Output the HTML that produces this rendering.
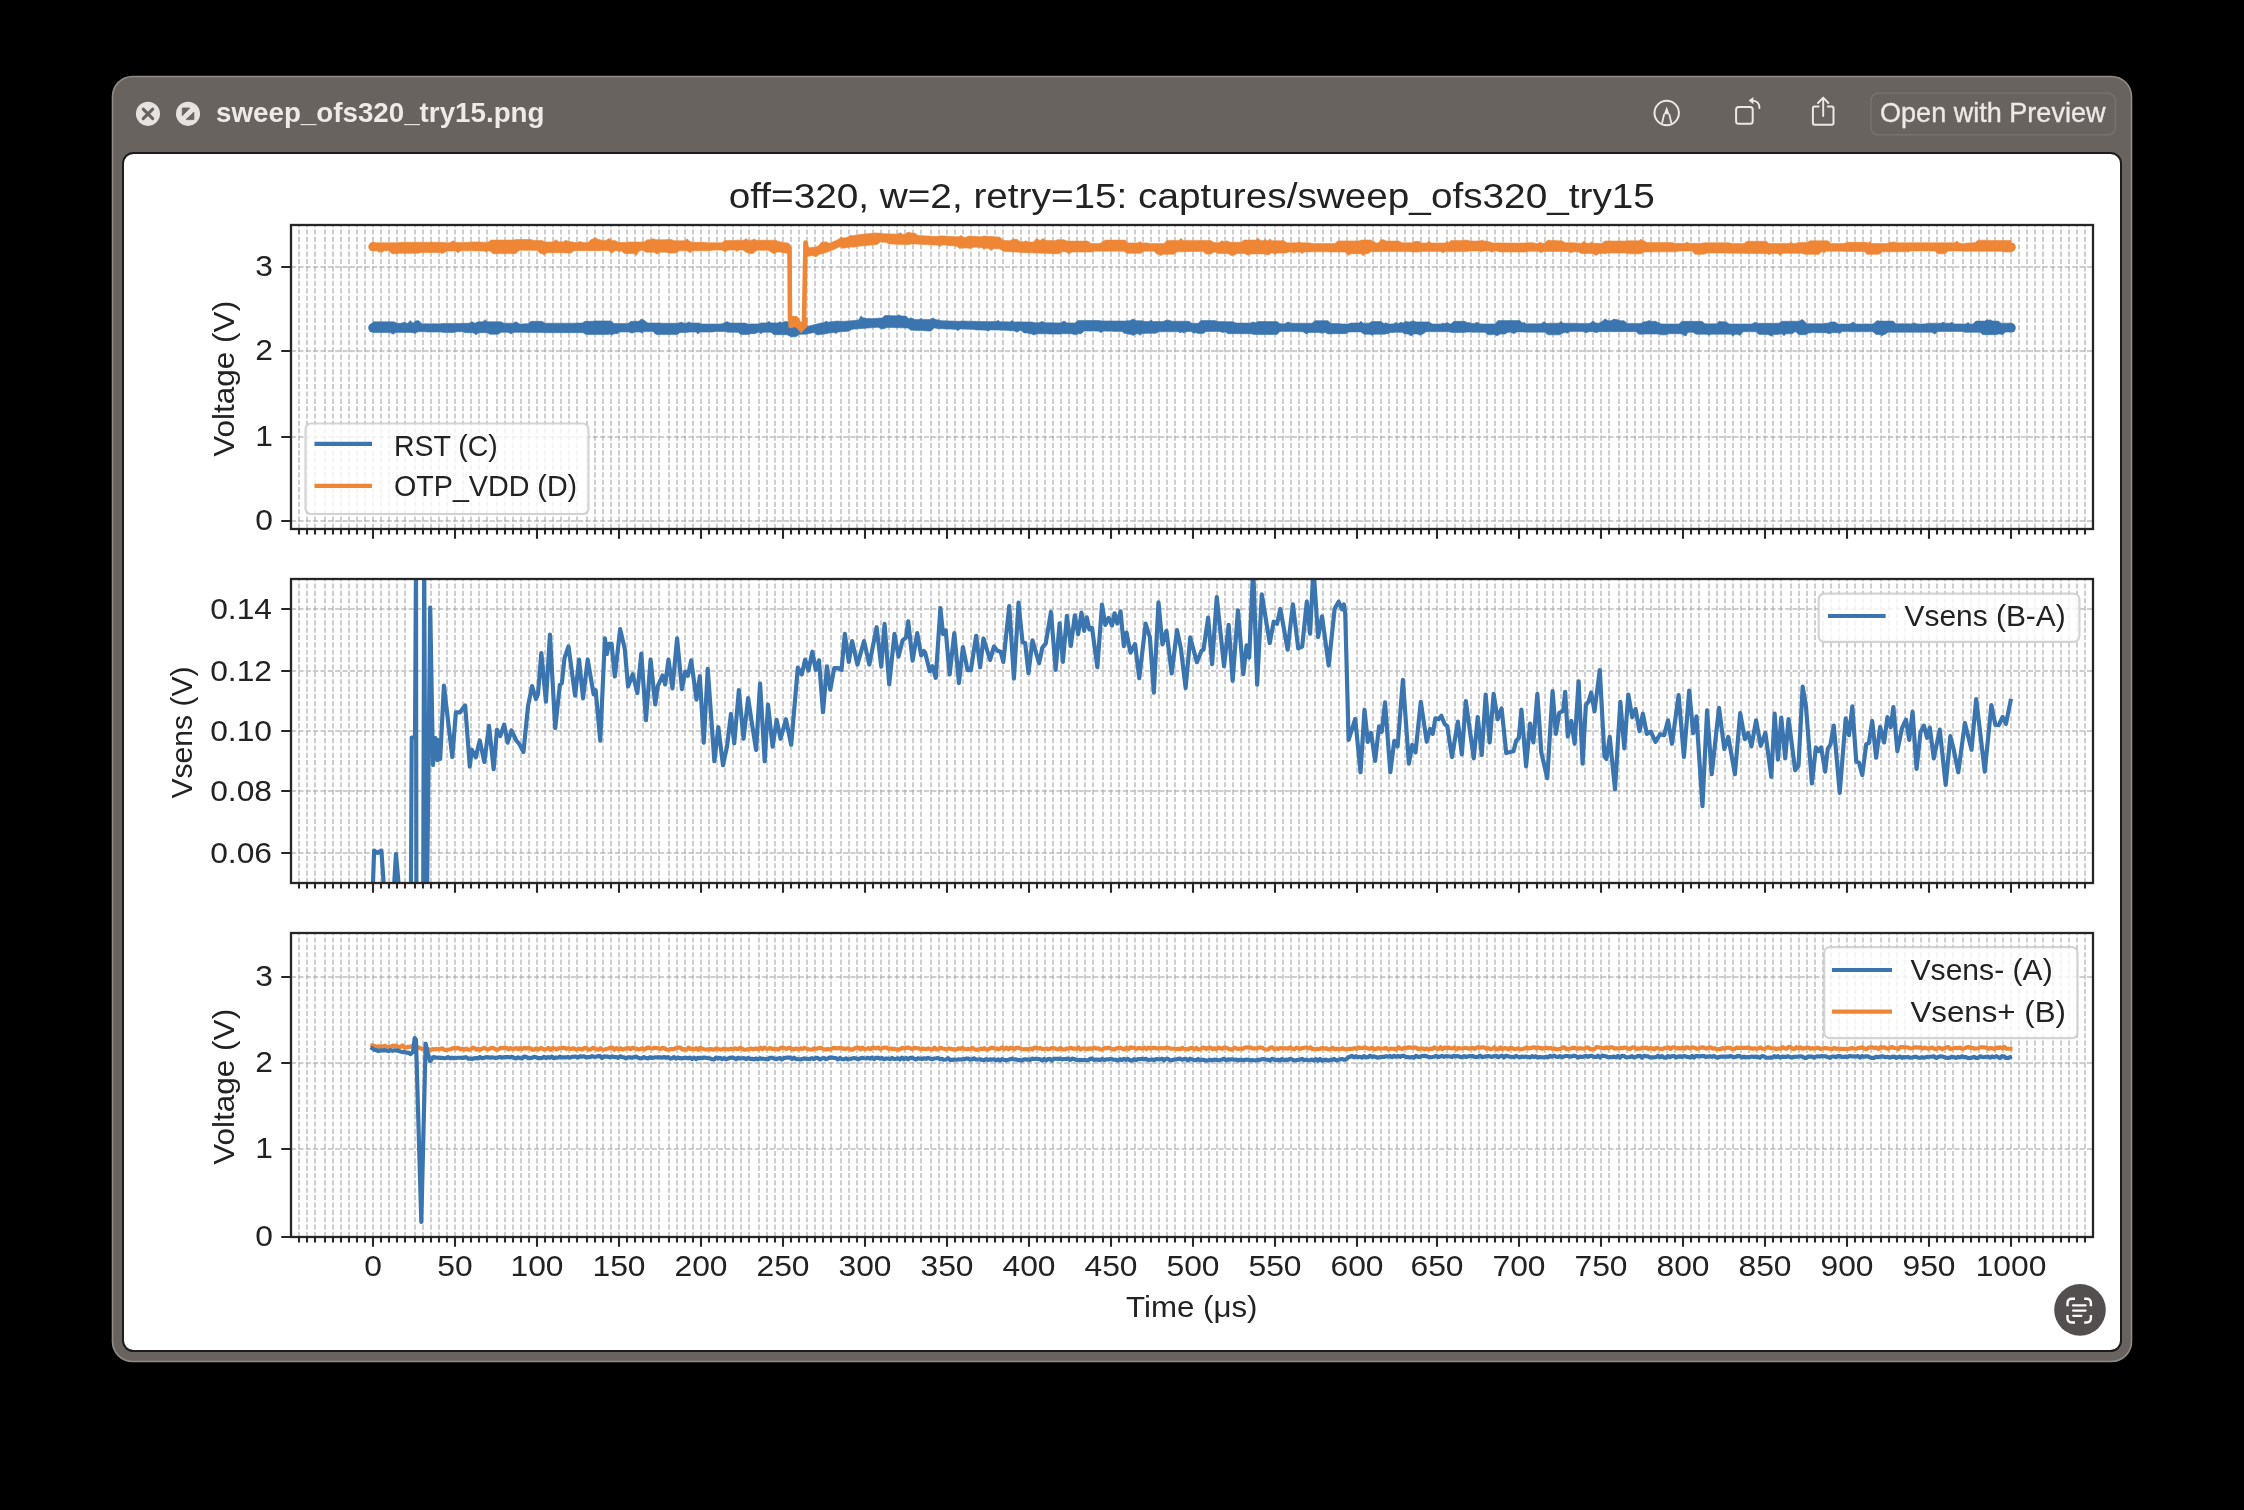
<!DOCTYPE html>
<html><head><meta charset="utf-8"><title>sweep_ofs320_try15.png</title>
<style>html,body{margin:0;padding:0;background:#000;width:2244px;height:1510px;overflow:hidden}svg{position:absolute;left:0;top:0;display:block;will-change:transform}text{font-family:"Liberation Sans",sans-serif}</style></head><body>
<svg width="2244" height="1510" viewBox="0 0 2244 1510">
<rect x="0" y="0" width="2244" height="1510" fill="#000"/>
<rect x="112.5" y="76.5" width="2019" height="1285" rx="20" ry="20" fill="#69635f" stroke="#8f8a86" stroke-width="1.6"/>
<rect x="123" y="153" width="1998" height="1198" rx="10.5" ry="10.5" fill="#ffffff" stroke="#1c1c1c" stroke-width="2"/>
<circle cx="147.95" cy="113.85" r="12.05" fill="#e6e2df"/>
<path d="M143.2 109.1L152.7 118.6M152.7 109.1L143.2 118.6" stroke="#69635f" stroke-width="3" stroke-linecap="round"/>
<circle cx="188.0" cy="113.85" r="12.05" fill="#e6e2df"/>
<path d="M182.3 108.0H189.8L182.3 115.8Z M193.9 112.1V119.6H186.05Z" fill="#69635f" stroke="#69635f" stroke-width="0.8" stroke-linejoin="round"/>
<text x="216.0" y="122.0" font-size="27.2" font-weight="bold" fill="#eeeae7" textLength="328.5" lengthAdjust="spacingAndGlyphs">sweep_ofs320_try15.png</text>
<circle cx="1666.7" cy="113.0" r="12.2" fill="none" stroke="#ece8e5" stroke-width="2"/>
<path d="M1666.7 106.6L1663.9 114.3H1669.5Z" fill="#ece8e5"/>
<path d="M1664.2 114L1662.0 123.4M1669.2 114L1671.4 123.4" stroke="#ece8e5" stroke-width="1.8"/>
<rect x="1736.1" y="107.1" width="16.6" height="16.6" rx="2.5" fill="none" stroke="#ece8e5" stroke-width="2"/>
<path d="M1759.5 108.2C1759.5 103.5 1757.0 100.8 1752.5 100.6" fill="none" stroke="#ece8e5" stroke-width="1.8" stroke-linecap="round"/>
<path d="M1748.6 100.6L1753.4 97.0V104.2Z" fill="#ece8e5"/>
<path d="M1818.6 106.6H1814.6Q1812.9 106.6 1812.9 108.3V123.0Q1812.9 124.7 1814.6 124.7H1831.8Q1833.5 124.7 1833.5 123.0V108.3Q1833.5 106.6 1831.8 106.6H1827.8" fill="none" stroke="#ece8e5" stroke-width="2" stroke-linecap="round"/>
<path d="M1823.2 116.0V98.0M1818.0 103.0L1823.2 97.6L1828.4 103.0" fill="none" stroke="#ece8e5" stroke-width="1.9" stroke-linecap="round" stroke-linejoin="round"/>
<rect x="1871.0" y="93.2" width="244.3" height="41.7" rx="7.5" ry="7.5" fill="none" stroke="#7b7572" stroke-width="1.2"/>
<text x="1880.0" y="122.2" font-size="27.6" fill="#ede9e6" stroke="#ede9e6" stroke-width="0.35" textLength="225.5" lengthAdjust="spacingAndGlyphs">Open with Preview</text>
<circle cx="2080.0" cy="1309.9" r="25.8" fill="#544f4f"/>
<path d="M2067.5 1306.2V1303.2Q2067.5 1298.7 2072.0 1298.7H2075.0 M2084.2 1298.7H2086.4Q2090.9 1298.7 2090.9 1303.2V1306.2 M2090.9 1315.0V1318.0Q2090.9 1322.5 2086.4 1322.5H2084.2 M2075.0 1322.5H2072.0Q2067.5 1322.5 2067.5 1318.0V1315.0" fill="none" stroke="#fff" stroke-width="2.4" stroke-linecap="butt"/>
<path d="M2073.0 1305.4H2085.6M2073.0 1310.6H2085.6M2073.2 1315.8H2081.4" stroke="#fff" stroke-width="2.2" stroke-linecap="round"/>
</svg>
<svg class="chart" width="2244" height="1510" viewBox="0 0 2244 1510">
<defs>
<clipPath id="ax0"><rect x="291.00" y="225.00" width="1802.00" height="304.00"/></clipPath>
<clipPath id="ax1"><rect x="291.00" y="579.00" width="1802.00" height="304.00"/></clipPath>
<clipPath id="ax2"><rect x="291.00" y="933.00" width="1802.00" height="304.00"/></clipPath>
</defs>
<g clip-path="url(#ax0)">
<line x1="299.00" y1="529.00" x2="299.00" y2="225.00" stroke="#b0b0b0" stroke-opacity="0.62" stroke-width="2.0" stroke-dasharray="5.14 2.22"/>
<line x1="307.00" y1="529.00" x2="307.00" y2="225.00" stroke="#b0b0b0" stroke-opacity="0.62" stroke-width="2.0" stroke-dasharray="5.14 2.22"/>
<line x1="315.00" y1="529.00" x2="315.00" y2="225.00" stroke="#b0b0b0" stroke-opacity="0.62" stroke-width="2.0" stroke-dasharray="5.14 2.22"/>
<line x1="325.00" y1="529.00" x2="325.00" y2="225.00" stroke="#b0b0b0" stroke-opacity="0.62" stroke-width="2.0" stroke-dasharray="5.14 2.22"/>
<line x1="333.00" y1="529.00" x2="333.00" y2="225.00" stroke="#b0b0b0" stroke-opacity="0.62" stroke-width="2.0" stroke-dasharray="5.14 2.22"/>
<line x1="341.00" y1="529.00" x2="341.00" y2="225.00" stroke="#b0b0b0" stroke-opacity="0.62" stroke-width="2.0" stroke-dasharray="5.14 2.22"/>
<line x1="349.00" y1="529.00" x2="349.00" y2="225.00" stroke="#b0b0b0" stroke-opacity="0.62" stroke-width="2.0" stroke-dasharray="5.14 2.22"/>
<line x1="357.00" y1="529.00" x2="357.00" y2="225.00" stroke="#b0b0b0" stroke-opacity="0.62" stroke-width="2.0" stroke-dasharray="5.14 2.22"/>
<line x1="365.00" y1="529.00" x2="365.00" y2="225.00" stroke="#b0b0b0" stroke-opacity="0.62" stroke-width="2.0" stroke-dasharray="5.14 2.22"/>
<line x1="373.00" y1="529.00" x2="373.00" y2="225.00" stroke="#b0b0b0" stroke-opacity="0.62" stroke-width="2.0" stroke-dasharray="5.14 2.22"/>
<line x1="381.00" y1="529.00" x2="381.00" y2="225.00" stroke="#b0b0b0" stroke-opacity="0.62" stroke-width="2.0" stroke-dasharray="5.14 2.22"/>
<line x1="389.00" y1="529.00" x2="389.00" y2="225.00" stroke="#b0b0b0" stroke-opacity="0.62" stroke-width="2.0" stroke-dasharray="5.14 2.22"/>
<line x1="397.00" y1="529.00" x2="397.00" y2="225.00" stroke="#b0b0b0" stroke-opacity="0.62" stroke-width="2.0" stroke-dasharray="5.14 2.22"/>
<line x1="405.00" y1="529.00" x2="405.00" y2="225.00" stroke="#b0b0b0" stroke-opacity="0.62" stroke-width="2.0" stroke-dasharray="5.14 2.22"/>
<line x1="415.00" y1="529.00" x2="415.00" y2="225.00" stroke="#b0b0b0" stroke-opacity="0.62" stroke-width="2.0" stroke-dasharray="5.14 2.22"/>
<line x1="423.00" y1="529.00" x2="423.00" y2="225.00" stroke="#b0b0b0" stroke-opacity="0.62" stroke-width="2.0" stroke-dasharray="5.14 2.22"/>
<line x1="431.00" y1="529.00" x2="431.00" y2="225.00" stroke="#b0b0b0" stroke-opacity="0.62" stroke-width="2.0" stroke-dasharray="5.14 2.22"/>
<line x1="439.00" y1="529.00" x2="439.00" y2="225.00" stroke="#b0b0b0" stroke-opacity="0.62" stroke-width="2.0" stroke-dasharray="5.14 2.22"/>
<line x1="447.00" y1="529.00" x2="447.00" y2="225.00" stroke="#b0b0b0" stroke-opacity="0.62" stroke-width="2.0" stroke-dasharray="5.14 2.22"/>
<line x1="455.00" y1="529.00" x2="455.00" y2="225.00" stroke="#b0b0b0" stroke-opacity="0.62" stroke-width="2.0" stroke-dasharray="5.14 2.22"/>
<line x1="463.00" y1="529.00" x2="463.00" y2="225.00" stroke="#b0b0b0" stroke-opacity="0.62" stroke-width="2.0" stroke-dasharray="5.14 2.22"/>
<line x1="471.00" y1="529.00" x2="471.00" y2="225.00" stroke="#b0b0b0" stroke-opacity="0.62" stroke-width="2.0" stroke-dasharray="5.14 2.22"/>
<line x1="479.00" y1="529.00" x2="479.00" y2="225.00" stroke="#b0b0b0" stroke-opacity="0.62" stroke-width="2.0" stroke-dasharray="5.14 2.22"/>
<line x1="487.00" y1="529.00" x2="487.00" y2="225.00" stroke="#b0b0b0" stroke-opacity="0.62" stroke-width="2.0" stroke-dasharray="5.14 2.22"/>
<line x1="497.00" y1="529.00" x2="497.00" y2="225.00" stroke="#b0b0b0" stroke-opacity="0.62" stroke-width="2.0" stroke-dasharray="5.14 2.22"/>
<line x1="505.00" y1="529.00" x2="505.00" y2="225.00" stroke="#b0b0b0" stroke-opacity="0.62" stroke-width="2.0" stroke-dasharray="5.14 2.22"/>
<line x1="513.00" y1="529.00" x2="513.00" y2="225.00" stroke="#b0b0b0" stroke-opacity="0.62" stroke-width="2.0" stroke-dasharray="5.14 2.22"/>
<line x1="521.00" y1="529.00" x2="521.00" y2="225.00" stroke="#b0b0b0" stroke-opacity="0.62" stroke-width="2.0" stroke-dasharray="5.14 2.22"/>
<line x1="529.00" y1="529.00" x2="529.00" y2="225.00" stroke="#b0b0b0" stroke-opacity="0.62" stroke-width="2.0" stroke-dasharray="5.14 2.22"/>
<line x1="537.00" y1="529.00" x2="537.00" y2="225.00" stroke="#b0b0b0" stroke-opacity="0.62" stroke-width="2.0" stroke-dasharray="5.14 2.22"/>
<line x1="545.00" y1="529.00" x2="545.00" y2="225.00" stroke="#b0b0b0" stroke-opacity="0.62" stroke-width="2.0" stroke-dasharray="5.14 2.22"/>
<line x1="553.00" y1="529.00" x2="553.00" y2="225.00" stroke="#b0b0b0" stroke-opacity="0.62" stroke-width="2.0" stroke-dasharray="5.14 2.22"/>
<line x1="561.00" y1="529.00" x2="561.00" y2="225.00" stroke="#b0b0b0" stroke-opacity="0.62" stroke-width="2.0" stroke-dasharray="5.14 2.22"/>
<line x1="569.00" y1="529.00" x2="569.00" y2="225.00" stroke="#b0b0b0" stroke-opacity="0.62" stroke-width="2.0" stroke-dasharray="5.14 2.22"/>
<line x1="577.00" y1="529.00" x2="577.00" y2="225.00" stroke="#b0b0b0" stroke-opacity="0.62" stroke-width="2.0" stroke-dasharray="5.14 2.22"/>
<line x1="587.00" y1="529.00" x2="587.00" y2="225.00" stroke="#b0b0b0" stroke-opacity="0.62" stroke-width="2.0" stroke-dasharray="5.14 2.22"/>
<line x1="595.00" y1="529.00" x2="595.00" y2="225.00" stroke="#b0b0b0" stroke-opacity="0.62" stroke-width="2.0" stroke-dasharray="5.14 2.22"/>
<line x1="603.00" y1="529.00" x2="603.00" y2="225.00" stroke="#b0b0b0" stroke-opacity="0.62" stroke-width="2.0" stroke-dasharray="5.14 2.22"/>
<line x1="611.00" y1="529.00" x2="611.00" y2="225.00" stroke="#b0b0b0" stroke-opacity="0.62" stroke-width="2.0" stroke-dasharray="5.14 2.22"/>
<line x1="619.00" y1="529.00" x2="619.00" y2="225.00" stroke="#b0b0b0" stroke-opacity="0.62" stroke-width="2.0" stroke-dasharray="5.14 2.22"/>
<line x1="627.00" y1="529.00" x2="627.00" y2="225.00" stroke="#b0b0b0" stroke-opacity="0.62" stroke-width="2.0" stroke-dasharray="5.14 2.22"/>
<line x1="635.00" y1="529.00" x2="635.00" y2="225.00" stroke="#b0b0b0" stroke-opacity="0.62" stroke-width="2.0" stroke-dasharray="5.14 2.22"/>
<line x1="643.00" y1="529.00" x2="643.00" y2="225.00" stroke="#b0b0b0" stroke-opacity="0.62" stroke-width="2.0" stroke-dasharray="5.14 2.22"/>
<line x1="651.00" y1="529.00" x2="651.00" y2="225.00" stroke="#b0b0b0" stroke-opacity="0.62" stroke-width="2.0" stroke-dasharray="5.14 2.22"/>
<line x1="659.00" y1="529.00" x2="659.00" y2="225.00" stroke="#b0b0b0" stroke-opacity="0.62" stroke-width="2.0" stroke-dasharray="5.14 2.22"/>
<line x1="669.00" y1="529.00" x2="669.00" y2="225.00" stroke="#b0b0b0" stroke-opacity="0.62" stroke-width="2.0" stroke-dasharray="5.14 2.22"/>
<line x1="677.00" y1="529.00" x2="677.00" y2="225.00" stroke="#b0b0b0" stroke-opacity="0.62" stroke-width="2.0" stroke-dasharray="5.14 2.22"/>
<line x1="685.00" y1="529.00" x2="685.00" y2="225.00" stroke="#b0b0b0" stroke-opacity="0.62" stroke-width="2.0" stroke-dasharray="5.14 2.22"/>
<line x1="693.00" y1="529.00" x2="693.00" y2="225.00" stroke="#b0b0b0" stroke-opacity="0.62" stroke-width="2.0" stroke-dasharray="5.14 2.22"/>
<line x1="701.00" y1="529.00" x2="701.00" y2="225.00" stroke="#b0b0b0" stroke-opacity="0.62" stroke-width="2.0" stroke-dasharray="5.14 2.22"/>
<line x1="709.00" y1="529.00" x2="709.00" y2="225.00" stroke="#b0b0b0" stroke-opacity="0.62" stroke-width="2.0" stroke-dasharray="5.14 2.22"/>
<line x1="717.00" y1="529.00" x2="717.00" y2="225.00" stroke="#b0b0b0" stroke-opacity="0.62" stroke-width="2.0" stroke-dasharray="5.14 2.22"/>
<line x1="725.00" y1="529.00" x2="725.00" y2="225.00" stroke="#b0b0b0" stroke-opacity="0.62" stroke-width="2.0" stroke-dasharray="5.14 2.22"/>
<line x1="733.00" y1="529.00" x2="733.00" y2="225.00" stroke="#b0b0b0" stroke-opacity="0.62" stroke-width="2.0" stroke-dasharray="5.14 2.22"/>
<line x1="741.00" y1="529.00" x2="741.00" y2="225.00" stroke="#b0b0b0" stroke-opacity="0.62" stroke-width="2.0" stroke-dasharray="5.14 2.22"/>
<line x1="749.00" y1="529.00" x2="749.00" y2="225.00" stroke="#b0b0b0" stroke-opacity="0.62" stroke-width="2.0" stroke-dasharray="5.14 2.22"/>
<line x1="759.00" y1="529.00" x2="759.00" y2="225.00" stroke="#b0b0b0" stroke-opacity="0.62" stroke-width="2.0" stroke-dasharray="5.14 2.22"/>
<line x1="767.00" y1="529.00" x2="767.00" y2="225.00" stroke="#b0b0b0" stroke-opacity="0.62" stroke-width="2.0" stroke-dasharray="5.14 2.22"/>
<line x1="775.00" y1="529.00" x2="775.00" y2="225.00" stroke="#b0b0b0" stroke-opacity="0.62" stroke-width="2.0" stroke-dasharray="5.14 2.22"/>
<line x1="783.00" y1="529.00" x2="783.00" y2="225.00" stroke="#b0b0b0" stroke-opacity="0.62" stroke-width="2.0" stroke-dasharray="5.14 2.22"/>
<line x1="791.00" y1="529.00" x2="791.00" y2="225.00" stroke="#b0b0b0" stroke-opacity="0.62" stroke-width="2.0" stroke-dasharray="5.14 2.22"/>
<line x1="799.00" y1="529.00" x2="799.00" y2="225.00" stroke="#b0b0b0" stroke-opacity="0.62" stroke-width="2.0" stroke-dasharray="5.14 2.22"/>
<line x1="807.00" y1="529.00" x2="807.00" y2="225.00" stroke="#b0b0b0" stroke-opacity="0.62" stroke-width="2.0" stroke-dasharray="5.14 2.22"/>
<line x1="815.00" y1="529.00" x2="815.00" y2="225.00" stroke="#b0b0b0" stroke-opacity="0.62" stroke-width="2.0" stroke-dasharray="5.14 2.22"/>
<line x1="823.00" y1="529.00" x2="823.00" y2="225.00" stroke="#b0b0b0" stroke-opacity="0.62" stroke-width="2.0" stroke-dasharray="5.14 2.22"/>
<line x1="831.00" y1="529.00" x2="831.00" y2="225.00" stroke="#b0b0b0" stroke-opacity="0.62" stroke-width="2.0" stroke-dasharray="5.14 2.22"/>
<line x1="841.00" y1="529.00" x2="841.00" y2="225.00" stroke="#b0b0b0" stroke-opacity="0.62" stroke-width="2.0" stroke-dasharray="5.14 2.22"/>
<line x1="849.00" y1="529.00" x2="849.00" y2="225.00" stroke="#b0b0b0" stroke-opacity="0.62" stroke-width="2.0" stroke-dasharray="5.14 2.22"/>
<line x1="857.00" y1="529.00" x2="857.00" y2="225.00" stroke="#b0b0b0" stroke-opacity="0.62" stroke-width="2.0" stroke-dasharray="5.14 2.22"/>
<line x1="865.00" y1="529.00" x2="865.00" y2="225.00" stroke="#b0b0b0" stroke-opacity="0.62" stroke-width="2.0" stroke-dasharray="5.14 2.22"/>
<line x1="873.00" y1="529.00" x2="873.00" y2="225.00" stroke="#b0b0b0" stroke-opacity="0.62" stroke-width="2.0" stroke-dasharray="5.14 2.22"/>
<line x1="881.00" y1="529.00" x2="881.00" y2="225.00" stroke="#b0b0b0" stroke-opacity="0.62" stroke-width="2.0" stroke-dasharray="5.14 2.22"/>
<line x1="889.00" y1="529.00" x2="889.00" y2="225.00" stroke="#b0b0b0" stroke-opacity="0.62" stroke-width="2.0" stroke-dasharray="5.14 2.22"/>
<line x1="897.00" y1="529.00" x2="897.00" y2="225.00" stroke="#b0b0b0" stroke-opacity="0.62" stroke-width="2.0" stroke-dasharray="5.14 2.22"/>
<line x1="905.00" y1="529.00" x2="905.00" y2="225.00" stroke="#b0b0b0" stroke-opacity="0.62" stroke-width="2.0" stroke-dasharray="5.14 2.22"/>
<line x1="913.00" y1="529.00" x2="913.00" y2="225.00" stroke="#b0b0b0" stroke-opacity="0.62" stroke-width="2.0" stroke-dasharray="5.14 2.22"/>
<line x1="921.00" y1="529.00" x2="921.00" y2="225.00" stroke="#b0b0b0" stroke-opacity="0.62" stroke-width="2.0" stroke-dasharray="5.14 2.22"/>
<line x1="931.00" y1="529.00" x2="931.00" y2="225.00" stroke="#b0b0b0" stroke-opacity="0.62" stroke-width="2.0" stroke-dasharray="5.14 2.22"/>
<line x1="939.00" y1="529.00" x2="939.00" y2="225.00" stroke="#b0b0b0" stroke-opacity="0.62" stroke-width="2.0" stroke-dasharray="5.14 2.22"/>
<line x1="947.00" y1="529.00" x2="947.00" y2="225.00" stroke="#b0b0b0" stroke-opacity="0.62" stroke-width="2.0" stroke-dasharray="5.14 2.22"/>
<line x1="955.00" y1="529.00" x2="955.00" y2="225.00" stroke="#b0b0b0" stroke-opacity="0.62" stroke-width="2.0" stroke-dasharray="5.14 2.22"/>
<line x1="963.00" y1="529.00" x2="963.00" y2="225.00" stroke="#b0b0b0" stroke-opacity="0.62" stroke-width="2.0" stroke-dasharray="5.14 2.22"/>
<line x1="971.00" y1="529.00" x2="971.00" y2="225.00" stroke="#b0b0b0" stroke-opacity="0.62" stroke-width="2.0" stroke-dasharray="5.14 2.22"/>
<line x1="979.00" y1="529.00" x2="979.00" y2="225.00" stroke="#b0b0b0" stroke-opacity="0.62" stroke-width="2.0" stroke-dasharray="5.14 2.22"/>
<line x1="987.00" y1="529.00" x2="987.00" y2="225.00" stroke="#b0b0b0" stroke-opacity="0.62" stroke-width="2.0" stroke-dasharray="5.14 2.22"/>
<line x1="995.00" y1="529.00" x2="995.00" y2="225.00" stroke="#b0b0b0" stroke-opacity="0.62" stroke-width="2.0" stroke-dasharray="5.14 2.22"/>
<line x1="1003.00" y1="529.00" x2="1003.00" y2="225.00" stroke="#b0b0b0" stroke-opacity="0.62" stroke-width="2.0" stroke-dasharray="5.14 2.22"/>
<line x1="1013.00" y1="529.00" x2="1013.00" y2="225.00" stroke="#b0b0b0" stroke-opacity="0.62" stroke-width="2.0" stroke-dasharray="5.14 2.22"/>
<line x1="1021.00" y1="529.00" x2="1021.00" y2="225.00" stroke="#b0b0b0" stroke-opacity="0.62" stroke-width="2.0" stroke-dasharray="5.14 2.22"/>
<line x1="1029.00" y1="529.00" x2="1029.00" y2="225.00" stroke="#b0b0b0" stroke-opacity="0.62" stroke-width="2.0" stroke-dasharray="5.14 2.22"/>
<line x1="1037.00" y1="529.00" x2="1037.00" y2="225.00" stroke="#b0b0b0" stroke-opacity="0.62" stroke-width="2.0" stroke-dasharray="5.14 2.22"/>
<line x1="1045.00" y1="529.00" x2="1045.00" y2="225.00" stroke="#b0b0b0" stroke-opacity="0.62" stroke-width="2.0" stroke-dasharray="5.14 2.22"/>
<line x1="1053.00" y1="529.00" x2="1053.00" y2="225.00" stroke="#b0b0b0" stroke-opacity="0.62" stroke-width="2.0" stroke-dasharray="5.14 2.22"/>
<line x1="1061.00" y1="529.00" x2="1061.00" y2="225.00" stroke="#b0b0b0" stroke-opacity="0.62" stroke-width="2.0" stroke-dasharray="5.14 2.22"/>
<line x1="1069.00" y1="529.00" x2="1069.00" y2="225.00" stroke="#b0b0b0" stroke-opacity="0.62" stroke-width="2.0" stroke-dasharray="5.14 2.22"/>
<line x1="1077.00" y1="529.00" x2="1077.00" y2="225.00" stroke="#b0b0b0" stroke-opacity="0.62" stroke-width="2.0" stroke-dasharray="5.14 2.22"/>
<line x1="1085.00" y1="529.00" x2="1085.00" y2="225.00" stroke="#b0b0b0" stroke-opacity="0.62" stroke-width="2.0" stroke-dasharray="5.14 2.22"/>
<line x1="1093.00" y1="529.00" x2="1093.00" y2="225.00" stroke="#b0b0b0" stroke-opacity="0.62" stroke-width="2.0" stroke-dasharray="5.14 2.22"/>
<line x1="1103.00" y1="529.00" x2="1103.00" y2="225.00" stroke="#b0b0b0" stroke-opacity="0.62" stroke-width="2.0" stroke-dasharray="5.14 2.22"/>
<line x1="1111.00" y1="529.00" x2="1111.00" y2="225.00" stroke="#b0b0b0" stroke-opacity="0.62" stroke-width="2.0" stroke-dasharray="5.14 2.22"/>
<line x1="1119.00" y1="529.00" x2="1119.00" y2="225.00" stroke="#b0b0b0" stroke-opacity="0.62" stroke-width="2.0" stroke-dasharray="5.14 2.22"/>
<line x1="1127.00" y1="529.00" x2="1127.00" y2="225.00" stroke="#b0b0b0" stroke-opacity="0.62" stroke-width="2.0" stroke-dasharray="5.14 2.22"/>
<line x1="1135.00" y1="529.00" x2="1135.00" y2="225.00" stroke="#b0b0b0" stroke-opacity="0.62" stroke-width="2.0" stroke-dasharray="5.14 2.22"/>
<line x1="1143.00" y1="529.00" x2="1143.00" y2="225.00" stroke="#b0b0b0" stroke-opacity="0.62" stroke-width="2.0" stroke-dasharray="5.14 2.22"/>
<line x1="1151.00" y1="529.00" x2="1151.00" y2="225.00" stroke="#b0b0b0" stroke-opacity="0.62" stroke-width="2.0" stroke-dasharray="5.14 2.22"/>
<line x1="1159.00" y1="529.00" x2="1159.00" y2="225.00" stroke="#b0b0b0" stroke-opacity="0.62" stroke-width="2.0" stroke-dasharray="5.14 2.22"/>
<line x1="1167.00" y1="529.00" x2="1167.00" y2="225.00" stroke="#b0b0b0" stroke-opacity="0.62" stroke-width="2.0" stroke-dasharray="5.14 2.22"/>
<line x1="1175.00" y1="529.00" x2="1175.00" y2="225.00" stroke="#b0b0b0" stroke-opacity="0.62" stroke-width="2.0" stroke-dasharray="5.14 2.22"/>
<line x1="1185.00" y1="529.00" x2="1185.00" y2="225.00" stroke="#b0b0b0" stroke-opacity="0.62" stroke-width="2.0" stroke-dasharray="5.14 2.22"/>
<line x1="1193.00" y1="529.00" x2="1193.00" y2="225.00" stroke="#b0b0b0" stroke-opacity="0.62" stroke-width="2.0" stroke-dasharray="5.14 2.22"/>
<line x1="1201.00" y1="529.00" x2="1201.00" y2="225.00" stroke="#b0b0b0" stroke-opacity="0.62" stroke-width="2.0" stroke-dasharray="5.14 2.22"/>
<line x1="1209.00" y1="529.00" x2="1209.00" y2="225.00" stroke="#b0b0b0" stroke-opacity="0.62" stroke-width="2.0" stroke-dasharray="5.14 2.22"/>
<line x1="1217.00" y1="529.00" x2="1217.00" y2="225.00" stroke="#b0b0b0" stroke-opacity="0.62" stroke-width="2.0" stroke-dasharray="5.14 2.22"/>
<line x1="1225.00" y1="529.00" x2="1225.00" y2="225.00" stroke="#b0b0b0" stroke-opacity="0.62" stroke-width="2.0" stroke-dasharray="5.14 2.22"/>
<line x1="1233.00" y1="529.00" x2="1233.00" y2="225.00" stroke="#b0b0b0" stroke-opacity="0.62" stroke-width="2.0" stroke-dasharray="5.14 2.22"/>
<line x1="1241.00" y1="529.00" x2="1241.00" y2="225.00" stroke="#b0b0b0" stroke-opacity="0.62" stroke-width="2.0" stroke-dasharray="5.14 2.22"/>
<line x1="1249.00" y1="529.00" x2="1249.00" y2="225.00" stroke="#b0b0b0" stroke-opacity="0.62" stroke-width="2.0" stroke-dasharray="5.14 2.22"/>
<line x1="1257.00" y1="529.00" x2="1257.00" y2="225.00" stroke="#b0b0b0" stroke-opacity="0.62" stroke-width="2.0" stroke-dasharray="5.14 2.22"/>
<line x1="1265.00" y1="529.00" x2="1265.00" y2="225.00" stroke="#b0b0b0" stroke-opacity="0.62" stroke-width="2.0" stroke-dasharray="5.14 2.22"/>
<line x1="1275.00" y1="529.00" x2="1275.00" y2="225.00" stroke="#b0b0b0" stroke-opacity="0.62" stroke-width="2.0" stroke-dasharray="5.14 2.22"/>
<line x1="1283.00" y1="529.00" x2="1283.00" y2="225.00" stroke="#b0b0b0" stroke-opacity="0.62" stroke-width="2.0" stroke-dasharray="5.14 2.22"/>
<line x1="1291.00" y1="529.00" x2="1291.00" y2="225.00" stroke="#b0b0b0" stroke-opacity="0.62" stroke-width="2.0" stroke-dasharray="5.14 2.22"/>
<line x1="1299.00" y1="529.00" x2="1299.00" y2="225.00" stroke="#b0b0b0" stroke-opacity="0.62" stroke-width="2.0" stroke-dasharray="5.14 2.22"/>
<line x1="1307.00" y1="529.00" x2="1307.00" y2="225.00" stroke="#b0b0b0" stroke-opacity="0.62" stroke-width="2.0" stroke-dasharray="5.14 2.22"/>
<line x1="1315.00" y1="529.00" x2="1315.00" y2="225.00" stroke="#b0b0b0" stroke-opacity="0.62" stroke-width="2.0" stroke-dasharray="5.14 2.22"/>
<line x1="1323.00" y1="529.00" x2="1323.00" y2="225.00" stroke="#b0b0b0" stroke-opacity="0.62" stroke-width="2.0" stroke-dasharray="5.14 2.22"/>
<line x1="1331.00" y1="529.00" x2="1331.00" y2="225.00" stroke="#b0b0b0" stroke-opacity="0.62" stroke-width="2.0" stroke-dasharray="5.14 2.22"/>
<line x1="1339.00" y1="529.00" x2="1339.00" y2="225.00" stroke="#b0b0b0" stroke-opacity="0.62" stroke-width="2.0" stroke-dasharray="5.14 2.22"/>
<line x1="1347.00" y1="529.00" x2="1347.00" y2="225.00" stroke="#b0b0b0" stroke-opacity="0.62" stroke-width="2.0" stroke-dasharray="5.14 2.22"/>
<line x1="1357.00" y1="529.00" x2="1357.00" y2="225.00" stroke="#b0b0b0" stroke-opacity="0.62" stroke-width="2.0" stroke-dasharray="5.14 2.22"/>
<line x1="1365.00" y1="529.00" x2="1365.00" y2="225.00" stroke="#b0b0b0" stroke-opacity="0.62" stroke-width="2.0" stroke-dasharray="5.14 2.22"/>
<line x1="1373.00" y1="529.00" x2="1373.00" y2="225.00" stroke="#b0b0b0" stroke-opacity="0.62" stroke-width="2.0" stroke-dasharray="5.14 2.22"/>
<line x1="1381.00" y1="529.00" x2="1381.00" y2="225.00" stroke="#b0b0b0" stroke-opacity="0.62" stroke-width="2.0" stroke-dasharray="5.14 2.22"/>
<line x1="1389.00" y1="529.00" x2="1389.00" y2="225.00" stroke="#b0b0b0" stroke-opacity="0.62" stroke-width="2.0" stroke-dasharray="5.14 2.22"/>
<line x1="1397.00" y1="529.00" x2="1397.00" y2="225.00" stroke="#b0b0b0" stroke-opacity="0.62" stroke-width="2.0" stroke-dasharray="5.14 2.22"/>
<line x1="1405.00" y1="529.00" x2="1405.00" y2="225.00" stroke="#b0b0b0" stroke-opacity="0.62" stroke-width="2.0" stroke-dasharray="5.14 2.22"/>
<line x1="1413.00" y1="529.00" x2="1413.00" y2="225.00" stroke="#b0b0b0" stroke-opacity="0.62" stroke-width="2.0" stroke-dasharray="5.14 2.22"/>
<line x1="1421.00" y1="529.00" x2="1421.00" y2="225.00" stroke="#b0b0b0" stroke-opacity="0.62" stroke-width="2.0" stroke-dasharray="5.14 2.22"/>
<line x1="1429.00" y1="529.00" x2="1429.00" y2="225.00" stroke="#b0b0b0" stroke-opacity="0.62" stroke-width="2.0" stroke-dasharray="5.14 2.22"/>
<line x1="1437.00" y1="529.00" x2="1437.00" y2="225.00" stroke="#b0b0b0" stroke-opacity="0.62" stroke-width="2.0" stroke-dasharray="5.14 2.22"/>
<line x1="1447.00" y1="529.00" x2="1447.00" y2="225.00" stroke="#b0b0b0" stroke-opacity="0.62" stroke-width="2.0" stroke-dasharray="5.14 2.22"/>
<line x1="1455.00" y1="529.00" x2="1455.00" y2="225.00" stroke="#b0b0b0" stroke-opacity="0.62" stroke-width="2.0" stroke-dasharray="5.14 2.22"/>
<line x1="1463.00" y1="529.00" x2="1463.00" y2="225.00" stroke="#b0b0b0" stroke-opacity="0.62" stroke-width="2.0" stroke-dasharray="5.14 2.22"/>
<line x1="1471.00" y1="529.00" x2="1471.00" y2="225.00" stroke="#b0b0b0" stroke-opacity="0.62" stroke-width="2.0" stroke-dasharray="5.14 2.22"/>
<line x1="1479.00" y1="529.00" x2="1479.00" y2="225.00" stroke="#b0b0b0" stroke-opacity="0.62" stroke-width="2.0" stroke-dasharray="5.14 2.22"/>
<line x1="1487.00" y1="529.00" x2="1487.00" y2="225.00" stroke="#b0b0b0" stroke-opacity="0.62" stroke-width="2.0" stroke-dasharray="5.14 2.22"/>
<line x1="1495.00" y1="529.00" x2="1495.00" y2="225.00" stroke="#b0b0b0" stroke-opacity="0.62" stroke-width="2.0" stroke-dasharray="5.14 2.22"/>
<line x1="1503.00" y1="529.00" x2="1503.00" y2="225.00" stroke="#b0b0b0" stroke-opacity="0.62" stroke-width="2.0" stroke-dasharray="5.14 2.22"/>
<line x1="1511.00" y1="529.00" x2="1511.00" y2="225.00" stroke="#b0b0b0" stroke-opacity="0.62" stroke-width="2.0" stroke-dasharray="5.14 2.22"/>
<line x1="1519.00" y1="529.00" x2="1519.00" y2="225.00" stroke="#b0b0b0" stroke-opacity="0.62" stroke-width="2.0" stroke-dasharray="5.14 2.22"/>
<line x1="1527.00" y1="529.00" x2="1527.00" y2="225.00" stroke="#b0b0b0" stroke-opacity="0.62" stroke-width="2.0" stroke-dasharray="5.14 2.22"/>
<line x1="1537.00" y1="529.00" x2="1537.00" y2="225.00" stroke="#b0b0b0" stroke-opacity="0.62" stroke-width="2.0" stroke-dasharray="5.14 2.22"/>
<line x1="1545.00" y1="529.00" x2="1545.00" y2="225.00" stroke="#b0b0b0" stroke-opacity="0.62" stroke-width="2.0" stroke-dasharray="5.14 2.22"/>
<line x1="1553.00" y1="529.00" x2="1553.00" y2="225.00" stroke="#b0b0b0" stroke-opacity="0.62" stroke-width="2.0" stroke-dasharray="5.14 2.22"/>
<line x1="1561.00" y1="529.00" x2="1561.00" y2="225.00" stroke="#b0b0b0" stroke-opacity="0.62" stroke-width="2.0" stroke-dasharray="5.14 2.22"/>
<line x1="1569.00" y1="529.00" x2="1569.00" y2="225.00" stroke="#b0b0b0" stroke-opacity="0.62" stroke-width="2.0" stroke-dasharray="5.14 2.22"/>
<line x1="1577.00" y1="529.00" x2="1577.00" y2="225.00" stroke="#b0b0b0" stroke-opacity="0.62" stroke-width="2.0" stroke-dasharray="5.14 2.22"/>
<line x1="1585.00" y1="529.00" x2="1585.00" y2="225.00" stroke="#b0b0b0" stroke-opacity="0.62" stroke-width="2.0" stroke-dasharray="5.14 2.22"/>
<line x1="1593.00" y1="529.00" x2="1593.00" y2="225.00" stroke="#b0b0b0" stroke-opacity="0.62" stroke-width="2.0" stroke-dasharray="5.14 2.22"/>
<line x1="1601.00" y1="529.00" x2="1601.00" y2="225.00" stroke="#b0b0b0" stroke-opacity="0.62" stroke-width="2.0" stroke-dasharray="5.14 2.22"/>
<line x1="1609.00" y1="529.00" x2="1609.00" y2="225.00" stroke="#b0b0b0" stroke-opacity="0.62" stroke-width="2.0" stroke-dasharray="5.14 2.22"/>
<line x1="1619.00" y1="529.00" x2="1619.00" y2="225.00" stroke="#b0b0b0" stroke-opacity="0.62" stroke-width="2.0" stroke-dasharray="5.14 2.22"/>
<line x1="1627.00" y1="529.00" x2="1627.00" y2="225.00" stroke="#b0b0b0" stroke-opacity="0.62" stroke-width="2.0" stroke-dasharray="5.14 2.22"/>
<line x1="1635.00" y1="529.00" x2="1635.00" y2="225.00" stroke="#b0b0b0" stroke-opacity="0.62" stroke-width="2.0" stroke-dasharray="5.14 2.22"/>
<line x1="1643.00" y1="529.00" x2="1643.00" y2="225.00" stroke="#b0b0b0" stroke-opacity="0.62" stroke-width="2.0" stroke-dasharray="5.14 2.22"/>
<line x1="1651.00" y1="529.00" x2="1651.00" y2="225.00" stroke="#b0b0b0" stroke-opacity="0.62" stroke-width="2.0" stroke-dasharray="5.14 2.22"/>
<line x1="1659.00" y1="529.00" x2="1659.00" y2="225.00" stroke="#b0b0b0" stroke-opacity="0.62" stroke-width="2.0" stroke-dasharray="5.14 2.22"/>
<line x1="1667.00" y1="529.00" x2="1667.00" y2="225.00" stroke="#b0b0b0" stroke-opacity="0.62" stroke-width="2.0" stroke-dasharray="5.14 2.22"/>
<line x1="1675.00" y1="529.00" x2="1675.00" y2="225.00" stroke="#b0b0b0" stroke-opacity="0.62" stroke-width="2.0" stroke-dasharray="5.14 2.22"/>
<line x1="1683.00" y1="529.00" x2="1683.00" y2="225.00" stroke="#b0b0b0" stroke-opacity="0.62" stroke-width="2.0" stroke-dasharray="5.14 2.22"/>
<line x1="1691.00" y1="529.00" x2="1691.00" y2="225.00" stroke="#b0b0b0" stroke-opacity="0.62" stroke-width="2.0" stroke-dasharray="5.14 2.22"/>
<line x1="1699.00" y1="529.00" x2="1699.00" y2="225.00" stroke="#b0b0b0" stroke-opacity="0.62" stroke-width="2.0" stroke-dasharray="5.14 2.22"/>
<line x1="1709.00" y1="529.00" x2="1709.00" y2="225.00" stroke="#b0b0b0" stroke-opacity="0.62" stroke-width="2.0" stroke-dasharray="5.14 2.22"/>
<line x1="1717.00" y1="529.00" x2="1717.00" y2="225.00" stroke="#b0b0b0" stroke-opacity="0.62" stroke-width="2.0" stroke-dasharray="5.14 2.22"/>
<line x1="1725.00" y1="529.00" x2="1725.00" y2="225.00" stroke="#b0b0b0" stroke-opacity="0.62" stroke-width="2.0" stroke-dasharray="5.14 2.22"/>
<line x1="1733.00" y1="529.00" x2="1733.00" y2="225.00" stroke="#b0b0b0" stroke-opacity="0.62" stroke-width="2.0" stroke-dasharray="5.14 2.22"/>
<line x1="1741.00" y1="529.00" x2="1741.00" y2="225.00" stroke="#b0b0b0" stroke-opacity="0.62" stroke-width="2.0" stroke-dasharray="5.14 2.22"/>
<line x1="1749.00" y1="529.00" x2="1749.00" y2="225.00" stroke="#b0b0b0" stroke-opacity="0.62" stroke-width="2.0" stroke-dasharray="5.14 2.22"/>
<line x1="1757.00" y1="529.00" x2="1757.00" y2="225.00" stroke="#b0b0b0" stroke-opacity="0.62" stroke-width="2.0" stroke-dasharray="5.14 2.22"/>
<line x1="1765.00" y1="529.00" x2="1765.00" y2="225.00" stroke="#b0b0b0" stroke-opacity="0.62" stroke-width="2.0" stroke-dasharray="5.14 2.22"/>
<line x1="1773.00" y1="529.00" x2="1773.00" y2="225.00" stroke="#b0b0b0" stroke-opacity="0.62" stroke-width="2.0" stroke-dasharray="5.14 2.22"/>
<line x1="1781.00" y1="529.00" x2="1781.00" y2="225.00" stroke="#b0b0b0" stroke-opacity="0.62" stroke-width="2.0" stroke-dasharray="5.14 2.22"/>
<line x1="1791.00" y1="529.00" x2="1791.00" y2="225.00" stroke="#b0b0b0" stroke-opacity="0.62" stroke-width="2.0" stroke-dasharray="5.14 2.22"/>
<line x1="1799.00" y1="529.00" x2="1799.00" y2="225.00" stroke="#b0b0b0" stroke-opacity="0.62" stroke-width="2.0" stroke-dasharray="5.14 2.22"/>
<line x1="1807.00" y1="529.00" x2="1807.00" y2="225.00" stroke="#b0b0b0" stroke-opacity="0.62" stroke-width="2.0" stroke-dasharray="5.14 2.22"/>
<line x1="1815.00" y1="529.00" x2="1815.00" y2="225.00" stroke="#b0b0b0" stroke-opacity="0.62" stroke-width="2.0" stroke-dasharray="5.14 2.22"/>
<line x1="1823.00" y1="529.00" x2="1823.00" y2="225.00" stroke="#b0b0b0" stroke-opacity="0.62" stroke-width="2.0" stroke-dasharray="5.14 2.22"/>
<line x1="1831.00" y1="529.00" x2="1831.00" y2="225.00" stroke="#b0b0b0" stroke-opacity="0.62" stroke-width="2.0" stroke-dasharray="5.14 2.22"/>
<line x1="1839.00" y1="529.00" x2="1839.00" y2="225.00" stroke="#b0b0b0" stroke-opacity="0.62" stroke-width="2.0" stroke-dasharray="5.14 2.22"/>
<line x1="1847.00" y1="529.00" x2="1847.00" y2="225.00" stroke="#b0b0b0" stroke-opacity="0.62" stroke-width="2.0" stroke-dasharray="5.14 2.22"/>
<line x1="1855.00" y1="529.00" x2="1855.00" y2="225.00" stroke="#b0b0b0" stroke-opacity="0.62" stroke-width="2.0" stroke-dasharray="5.14 2.22"/>
<line x1="1863.00" y1="529.00" x2="1863.00" y2="225.00" stroke="#b0b0b0" stroke-opacity="0.62" stroke-width="2.0" stroke-dasharray="5.14 2.22"/>
<line x1="1871.00" y1="529.00" x2="1871.00" y2="225.00" stroke="#b0b0b0" stroke-opacity="0.62" stroke-width="2.0" stroke-dasharray="5.14 2.22"/>
<line x1="1881.00" y1="529.00" x2="1881.00" y2="225.00" stroke="#b0b0b0" stroke-opacity="0.62" stroke-width="2.0" stroke-dasharray="5.14 2.22"/>
<line x1="1889.00" y1="529.00" x2="1889.00" y2="225.00" stroke="#b0b0b0" stroke-opacity="0.62" stroke-width="2.0" stroke-dasharray="5.14 2.22"/>
<line x1="1897.00" y1="529.00" x2="1897.00" y2="225.00" stroke="#b0b0b0" stroke-opacity="0.62" stroke-width="2.0" stroke-dasharray="5.14 2.22"/>
<line x1="1905.00" y1="529.00" x2="1905.00" y2="225.00" stroke="#b0b0b0" stroke-opacity="0.62" stroke-width="2.0" stroke-dasharray="5.14 2.22"/>
<line x1="1913.00" y1="529.00" x2="1913.00" y2="225.00" stroke="#b0b0b0" stroke-opacity="0.62" stroke-width="2.0" stroke-dasharray="5.14 2.22"/>
<line x1="1921.00" y1="529.00" x2="1921.00" y2="225.00" stroke="#b0b0b0" stroke-opacity="0.62" stroke-width="2.0" stroke-dasharray="5.14 2.22"/>
<line x1="1929.00" y1="529.00" x2="1929.00" y2="225.00" stroke="#b0b0b0" stroke-opacity="0.62" stroke-width="2.0" stroke-dasharray="5.14 2.22"/>
<line x1="1937.00" y1="529.00" x2="1937.00" y2="225.00" stroke="#b0b0b0" stroke-opacity="0.62" stroke-width="2.0" stroke-dasharray="5.14 2.22"/>
<line x1="1945.00" y1="529.00" x2="1945.00" y2="225.00" stroke="#b0b0b0" stroke-opacity="0.62" stroke-width="2.0" stroke-dasharray="5.14 2.22"/>
<line x1="1953.00" y1="529.00" x2="1953.00" y2="225.00" stroke="#b0b0b0" stroke-opacity="0.62" stroke-width="2.0" stroke-dasharray="5.14 2.22"/>
<line x1="1963.00" y1="529.00" x2="1963.00" y2="225.00" stroke="#b0b0b0" stroke-opacity="0.62" stroke-width="2.0" stroke-dasharray="5.14 2.22"/>
<line x1="1971.00" y1="529.00" x2="1971.00" y2="225.00" stroke="#b0b0b0" stroke-opacity="0.62" stroke-width="2.0" stroke-dasharray="5.14 2.22"/>
<line x1="1979.00" y1="529.00" x2="1979.00" y2="225.00" stroke="#b0b0b0" stroke-opacity="0.62" stroke-width="2.0" stroke-dasharray="5.14 2.22"/>
<line x1="1987.00" y1="529.00" x2="1987.00" y2="225.00" stroke="#b0b0b0" stroke-opacity="0.62" stroke-width="2.0" stroke-dasharray="5.14 2.22"/>
<line x1="1995.00" y1="529.00" x2="1995.00" y2="225.00" stroke="#b0b0b0" stroke-opacity="0.62" stroke-width="2.0" stroke-dasharray="5.14 2.22"/>
<line x1="2003.00" y1="529.00" x2="2003.00" y2="225.00" stroke="#b0b0b0" stroke-opacity="0.62" stroke-width="2.0" stroke-dasharray="5.14 2.22"/>
<line x1="2011.00" y1="529.00" x2="2011.00" y2="225.00" stroke="#b0b0b0" stroke-opacity="0.62" stroke-width="2.0" stroke-dasharray="5.14 2.22"/>
<line x1="2019.00" y1="529.00" x2="2019.00" y2="225.00" stroke="#b0b0b0" stroke-opacity="0.62" stroke-width="2.0" stroke-dasharray="5.14 2.22"/>
<line x1="2027.00" y1="529.00" x2="2027.00" y2="225.00" stroke="#b0b0b0" stroke-opacity="0.62" stroke-width="2.0" stroke-dasharray="5.14 2.22"/>
<line x1="2035.00" y1="529.00" x2="2035.00" y2="225.00" stroke="#b0b0b0" stroke-opacity="0.62" stroke-width="2.0" stroke-dasharray="5.14 2.22"/>
<line x1="2043.00" y1="529.00" x2="2043.00" y2="225.00" stroke="#b0b0b0" stroke-opacity="0.62" stroke-width="2.0" stroke-dasharray="5.14 2.22"/>
<line x1="2053.00" y1="529.00" x2="2053.00" y2="225.00" stroke="#b0b0b0" stroke-opacity="0.62" stroke-width="2.0" stroke-dasharray="5.14 2.22"/>
<line x1="2061.00" y1="529.00" x2="2061.00" y2="225.00" stroke="#b0b0b0" stroke-opacity="0.62" stroke-width="2.0" stroke-dasharray="5.14 2.22"/>
<line x1="2069.00" y1="529.00" x2="2069.00" y2="225.00" stroke="#b0b0b0" stroke-opacity="0.62" stroke-width="2.0" stroke-dasharray="5.14 2.22"/>
<line x1="2077.00" y1="529.00" x2="2077.00" y2="225.00" stroke="#b0b0b0" stroke-opacity="0.62" stroke-width="2.0" stroke-dasharray="5.14 2.22"/>
<line x1="2085.00" y1="529.00" x2="2085.00" y2="225.00" stroke="#b0b0b0" stroke-opacity="0.62" stroke-width="2.0" stroke-dasharray="5.14 2.22"/>
<line x1="291.00" y1="521.00" x2="2093.00" y2="521.00" stroke="#b0b0b0" stroke-opacity="0.62" stroke-width="2.0" stroke-dasharray="5.14 2.22"/>
<line x1="291.00" y1="437.00" x2="2093.00" y2="437.00" stroke="#b0b0b0" stroke-opacity="0.62" stroke-width="2.0" stroke-dasharray="5.14 2.22"/>
<line x1="291.00" y1="351.00" x2="2093.00" y2="351.00" stroke="#b0b0b0" stroke-opacity="0.62" stroke-width="2.0" stroke-dasharray="5.14 2.22"/>
<line x1="291.00" y1="267.00" x2="2093.00" y2="267.00" stroke="#b0b0b0" stroke-opacity="0.62" stroke-width="2.0" stroke-dasharray="5.14 2.22"/>
</g>
<g clip-path="url(#ax1)">
<line x1="299.00" y1="883.00" x2="299.00" y2="579.00" stroke="#b0b0b0" stroke-opacity="0.62" stroke-width="2.0" stroke-dasharray="5.14 2.22"/>
<line x1="307.00" y1="883.00" x2="307.00" y2="579.00" stroke="#b0b0b0" stroke-opacity="0.62" stroke-width="2.0" stroke-dasharray="5.14 2.22"/>
<line x1="315.00" y1="883.00" x2="315.00" y2="579.00" stroke="#b0b0b0" stroke-opacity="0.62" stroke-width="2.0" stroke-dasharray="5.14 2.22"/>
<line x1="325.00" y1="883.00" x2="325.00" y2="579.00" stroke="#b0b0b0" stroke-opacity="0.62" stroke-width="2.0" stroke-dasharray="5.14 2.22"/>
<line x1="333.00" y1="883.00" x2="333.00" y2="579.00" stroke="#b0b0b0" stroke-opacity="0.62" stroke-width="2.0" stroke-dasharray="5.14 2.22"/>
<line x1="341.00" y1="883.00" x2="341.00" y2="579.00" stroke="#b0b0b0" stroke-opacity="0.62" stroke-width="2.0" stroke-dasharray="5.14 2.22"/>
<line x1="349.00" y1="883.00" x2="349.00" y2="579.00" stroke="#b0b0b0" stroke-opacity="0.62" stroke-width="2.0" stroke-dasharray="5.14 2.22"/>
<line x1="357.00" y1="883.00" x2="357.00" y2="579.00" stroke="#b0b0b0" stroke-opacity="0.62" stroke-width="2.0" stroke-dasharray="5.14 2.22"/>
<line x1="365.00" y1="883.00" x2="365.00" y2="579.00" stroke="#b0b0b0" stroke-opacity="0.62" stroke-width="2.0" stroke-dasharray="5.14 2.22"/>
<line x1="373.00" y1="883.00" x2="373.00" y2="579.00" stroke="#b0b0b0" stroke-opacity="0.62" stroke-width="2.0" stroke-dasharray="5.14 2.22"/>
<line x1="381.00" y1="883.00" x2="381.00" y2="579.00" stroke="#b0b0b0" stroke-opacity="0.62" stroke-width="2.0" stroke-dasharray="5.14 2.22"/>
<line x1="389.00" y1="883.00" x2="389.00" y2="579.00" stroke="#b0b0b0" stroke-opacity="0.62" stroke-width="2.0" stroke-dasharray="5.14 2.22"/>
<line x1="397.00" y1="883.00" x2="397.00" y2="579.00" stroke="#b0b0b0" stroke-opacity="0.62" stroke-width="2.0" stroke-dasharray="5.14 2.22"/>
<line x1="405.00" y1="883.00" x2="405.00" y2="579.00" stroke="#b0b0b0" stroke-opacity="0.62" stroke-width="2.0" stroke-dasharray="5.14 2.22"/>
<line x1="415.00" y1="883.00" x2="415.00" y2="579.00" stroke="#b0b0b0" stroke-opacity="0.62" stroke-width="2.0" stroke-dasharray="5.14 2.22"/>
<line x1="423.00" y1="883.00" x2="423.00" y2="579.00" stroke="#b0b0b0" stroke-opacity="0.62" stroke-width="2.0" stroke-dasharray="5.14 2.22"/>
<line x1="431.00" y1="883.00" x2="431.00" y2="579.00" stroke="#b0b0b0" stroke-opacity="0.62" stroke-width="2.0" stroke-dasharray="5.14 2.22"/>
<line x1="439.00" y1="883.00" x2="439.00" y2="579.00" stroke="#b0b0b0" stroke-opacity="0.62" stroke-width="2.0" stroke-dasharray="5.14 2.22"/>
<line x1="447.00" y1="883.00" x2="447.00" y2="579.00" stroke="#b0b0b0" stroke-opacity="0.62" stroke-width="2.0" stroke-dasharray="5.14 2.22"/>
<line x1="455.00" y1="883.00" x2="455.00" y2="579.00" stroke="#b0b0b0" stroke-opacity="0.62" stroke-width="2.0" stroke-dasharray="5.14 2.22"/>
<line x1="463.00" y1="883.00" x2="463.00" y2="579.00" stroke="#b0b0b0" stroke-opacity="0.62" stroke-width="2.0" stroke-dasharray="5.14 2.22"/>
<line x1="471.00" y1="883.00" x2="471.00" y2="579.00" stroke="#b0b0b0" stroke-opacity="0.62" stroke-width="2.0" stroke-dasharray="5.14 2.22"/>
<line x1="479.00" y1="883.00" x2="479.00" y2="579.00" stroke="#b0b0b0" stroke-opacity="0.62" stroke-width="2.0" stroke-dasharray="5.14 2.22"/>
<line x1="487.00" y1="883.00" x2="487.00" y2="579.00" stroke="#b0b0b0" stroke-opacity="0.62" stroke-width="2.0" stroke-dasharray="5.14 2.22"/>
<line x1="497.00" y1="883.00" x2="497.00" y2="579.00" stroke="#b0b0b0" stroke-opacity="0.62" stroke-width="2.0" stroke-dasharray="5.14 2.22"/>
<line x1="505.00" y1="883.00" x2="505.00" y2="579.00" stroke="#b0b0b0" stroke-opacity="0.62" stroke-width="2.0" stroke-dasharray="5.14 2.22"/>
<line x1="513.00" y1="883.00" x2="513.00" y2="579.00" stroke="#b0b0b0" stroke-opacity="0.62" stroke-width="2.0" stroke-dasharray="5.14 2.22"/>
<line x1="521.00" y1="883.00" x2="521.00" y2="579.00" stroke="#b0b0b0" stroke-opacity="0.62" stroke-width="2.0" stroke-dasharray="5.14 2.22"/>
<line x1="529.00" y1="883.00" x2="529.00" y2="579.00" stroke="#b0b0b0" stroke-opacity="0.62" stroke-width="2.0" stroke-dasharray="5.14 2.22"/>
<line x1="537.00" y1="883.00" x2="537.00" y2="579.00" stroke="#b0b0b0" stroke-opacity="0.62" stroke-width="2.0" stroke-dasharray="5.14 2.22"/>
<line x1="545.00" y1="883.00" x2="545.00" y2="579.00" stroke="#b0b0b0" stroke-opacity="0.62" stroke-width="2.0" stroke-dasharray="5.14 2.22"/>
<line x1="553.00" y1="883.00" x2="553.00" y2="579.00" stroke="#b0b0b0" stroke-opacity="0.62" stroke-width="2.0" stroke-dasharray="5.14 2.22"/>
<line x1="561.00" y1="883.00" x2="561.00" y2="579.00" stroke="#b0b0b0" stroke-opacity="0.62" stroke-width="2.0" stroke-dasharray="5.14 2.22"/>
<line x1="569.00" y1="883.00" x2="569.00" y2="579.00" stroke="#b0b0b0" stroke-opacity="0.62" stroke-width="2.0" stroke-dasharray="5.14 2.22"/>
<line x1="577.00" y1="883.00" x2="577.00" y2="579.00" stroke="#b0b0b0" stroke-opacity="0.62" stroke-width="2.0" stroke-dasharray="5.14 2.22"/>
<line x1="587.00" y1="883.00" x2="587.00" y2="579.00" stroke="#b0b0b0" stroke-opacity="0.62" stroke-width="2.0" stroke-dasharray="5.14 2.22"/>
<line x1="595.00" y1="883.00" x2="595.00" y2="579.00" stroke="#b0b0b0" stroke-opacity="0.62" stroke-width="2.0" stroke-dasharray="5.14 2.22"/>
<line x1="603.00" y1="883.00" x2="603.00" y2="579.00" stroke="#b0b0b0" stroke-opacity="0.62" stroke-width="2.0" stroke-dasharray="5.14 2.22"/>
<line x1="611.00" y1="883.00" x2="611.00" y2="579.00" stroke="#b0b0b0" stroke-opacity="0.62" stroke-width="2.0" stroke-dasharray="5.14 2.22"/>
<line x1="619.00" y1="883.00" x2="619.00" y2="579.00" stroke="#b0b0b0" stroke-opacity="0.62" stroke-width="2.0" stroke-dasharray="5.14 2.22"/>
<line x1="627.00" y1="883.00" x2="627.00" y2="579.00" stroke="#b0b0b0" stroke-opacity="0.62" stroke-width="2.0" stroke-dasharray="5.14 2.22"/>
<line x1="635.00" y1="883.00" x2="635.00" y2="579.00" stroke="#b0b0b0" stroke-opacity="0.62" stroke-width="2.0" stroke-dasharray="5.14 2.22"/>
<line x1="643.00" y1="883.00" x2="643.00" y2="579.00" stroke="#b0b0b0" stroke-opacity="0.62" stroke-width="2.0" stroke-dasharray="5.14 2.22"/>
<line x1="651.00" y1="883.00" x2="651.00" y2="579.00" stroke="#b0b0b0" stroke-opacity="0.62" stroke-width="2.0" stroke-dasharray="5.14 2.22"/>
<line x1="659.00" y1="883.00" x2="659.00" y2="579.00" stroke="#b0b0b0" stroke-opacity="0.62" stroke-width="2.0" stroke-dasharray="5.14 2.22"/>
<line x1="669.00" y1="883.00" x2="669.00" y2="579.00" stroke="#b0b0b0" stroke-opacity="0.62" stroke-width="2.0" stroke-dasharray="5.14 2.22"/>
<line x1="677.00" y1="883.00" x2="677.00" y2="579.00" stroke="#b0b0b0" stroke-opacity="0.62" stroke-width="2.0" stroke-dasharray="5.14 2.22"/>
<line x1="685.00" y1="883.00" x2="685.00" y2="579.00" stroke="#b0b0b0" stroke-opacity="0.62" stroke-width="2.0" stroke-dasharray="5.14 2.22"/>
<line x1="693.00" y1="883.00" x2="693.00" y2="579.00" stroke="#b0b0b0" stroke-opacity="0.62" stroke-width="2.0" stroke-dasharray="5.14 2.22"/>
<line x1="701.00" y1="883.00" x2="701.00" y2="579.00" stroke="#b0b0b0" stroke-opacity="0.62" stroke-width="2.0" stroke-dasharray="5.14 2.22"/>
<line x1="709.00" y1="883.00" x2="709.00" y2="579.00" stroke="#b0b0b0" stroke-opacity="0.62" stroke-width="2.0" stroke-dasharray="5.14 2.22"/>
<line x1="717.00" y1="883.00" x2="717.00" y2="579.00" stroke="#b0b0b0" stroke-opacity="0.62" stroke-width="2.0" stroke-dasharray="5.14 2.22"/>
<line x1="725.00" y1="883.00" x2="725.00" y2="579.00" stroke="#b0b0b0" stroke-opacity="0.62" stroke-width="2.0" stroke-dasharray="5.14 2.22"/>
<line x1="733.00" y1="883.00" x2="733.00" y2="579.00" stroke="#b0b0b0" stroke-opacity="0.62" stroke-width="2.0" stroke-dasharray="5.14 2.22"/>
<line x1="741.00" y1="883.00" x2="741.00" y2="579.00" stroke="#b0b0b0" stroke-opacity="0.62" stroke-width="2.0" stroke-dasharray="5.14 2.22"/>
<line x1="749.00" y1="883.00" x2="749.00" y2="579.00" stroke="#b0b0b0" stroke-opacity="0.62" stroke-width="2.0" stroke-dasharray="5.14 2.22"/>
<line x1="759.00" y1="883.00" x2="759.00" y2="579.00" stroke="#b0b0b0" stroke-opacity="0.62" stroke-width="2.0" stroke-dasharray="5.14 2.22"/>
<line x1="767.00" y1="883.00" x2="767.00" y2="579.00" stroke="#b0b0b0" stroke-opacity="0.62" stroke-width="2.0" stroke-dasharray="5.14 2.22"/>
<line x1="775.00" y1="883.00" x2="775.00" y2="579.00" stroke="#b0b0b0" stroke-opacity="0.62" stroke-width="2.0" stroke-dasharray="5.14 2.22"/>
<line x1="783.00" y1="883.00" x2="783.00" y2="579.00" stroke="#b0b0b0" stroke-opacity="0.62" stroke-width="2.0" stroke-dasharray="5.14 2.22"/>
<line x1="791.00" y1="883.00" x2="791.00" y2="579.00" stroke="#b0b0b0" stroke-opacity="0.62" stroke-width="2.0" stroke-dasharray="5.14 2.22"/>
<line x1="799.00" y1="883.00" x2="799.00" y2="579.00" stroke="#b0b0b0" stroke-opacity="0.62" stroke-width="2.0" stroke-dasharray="5.14 2.22"/>
<line x1="807.00" y1="883.00" x2="807.00" y2="579.00" stroke="#b0b0b0" stroke-opacity="0.62" stroke-width="2.0" stroke-dasharray="5.14 2.22"/>
<line x1="815.00" y1="883.00" x2="815.00" y2="579.00" stroke="#b0b0b0" stroke-opacity="0.62" stroke-width="2.0" stroke-dasharray="5.14 2.22"/>
<line x1="823.00" y1="883.00" x2="823.00" y2="579.00" stroke="#b0b0b0" stroke-opacity="0.62" stroke-width="2.0" stroke-dasharray="5.14 2.22"/>
<line x1="831.00" y1="883.00" x2="831.00" y2="579.00" stroke="#b0b0b0" stroke-opacity="0.62" stroke-width="2.0" stroke-dasharray="5.14 2.22"/>
<line x1="841.00" y1="883.00" x2="841.00" y2="579.00" stroke="#b0b0b0" stroke-opacity="0.62" stroke-width="2.0" stroke-dasharray="5.14 2.22"/>
<line x1="849.00" y1="883.00" x2="849.00" y2="579.00" stroke="#b0b0b0" stroke-opacity="0.62" stroke-width="2.0" stroke-dasharray="5.14 2.22"/>
<line x1="857.00" y1="883.00" x2="857.00" y2="579.00" stroke="#b0b0b0" stroke-opacity="0.62" stroke-width="2.0" stroke-dasharray="5.14 2.22"/>
<line x1="865.00" y1="883.00" x2="865.00" y2="579.00" stroke="#b0b0b0" stroke-opacity="0.62" stroke-width="2.0" stroke-dasharray="5.14 2.22"/>
<line x1="873.00" y1="883.00" x2="873.00" y2="579.00" stroke="#b0b0b0" stroke-opacity="0.62" stroke-width="2.0" stroke-dasharray="5.14 2.22"/>
<line x1="881.00" y1="883.00" x2="881.00" y2="579.00" stroke="#b0b0b0" stroke-opacity="0.62" stroke-width="2.0" stroke-dasharray="5.14 2.22"/>
<line x1="889.00" y1="883.00" x2="889.00" y2="579.00" stroke="#b0b0b0" stroke-opacity="0.62" stroke-width="2.0" stroke-dasharray="5.14 2.22"/>
<line x1="897.00" y1="883.00" x2="897.00" y2="579.00" stroke="#b0b0b0" stroke-opacity="0.62" stroke-width="2.0" stroke-dasharray="5.14 2.22"/>
<line x1="905.00" y1="883.00" x2="905.00" y2="579.00" stroke="#b0b0b0" stroke-opacity="0.62" stroke-width="2.0" stroke-dasharray="5.14 2.22"/>
<line x1="913.00" y1="883.00" x2="913.00" y2="579.00" stroke="#b0b0b0" stroke-opacity="0.62" stroke-width="2.0" stroke-dasharray="5.14 2.22"/>
<line x1="921.00" y1="883.00" x2="921.00" y2="579.00" stroke="#b0b0b0" stroke-opacity="0.62" stroke-width="2.0" stroke-dasharray="5.14 2.22"/>
<line x1="931.00" y1="883.00" x2="931.00" y2="579.00" stroke="#b0b0b0" stroke-opacity="0.62" stroke-width="2.0" stroke-dasharray="5.14 2.22"/>
<line x1="939.00" y1="883.00" x2="939.00" y2="579.00" stroke="#b0b0b0" stroke-opacity="0.62" stroke-width="2.0" stroke-dasharray="5.14 2.22"/>
<line x1="947.00" y1="883.00" x2="947.00" y2="579.00" stroke="#b0b0b0" stroke-opacity="0.62" stroke-width="2.0" stroke-dasharray="5.14 2.22"/>
<line x1="955.00" y1="883.00" x2="955.00" y2="579.00" stroke="#b0b0b0" stroke-opacity="0.62" stroke-width="2.0" stroke-dasharray="5.14 2.22"/>
<line x1="963.00" y1="883.00" x2="963.00" y2="579.00" stroke="#b0b0b0" stroke-opacity="0.62" stroke-width="2.0" stroke-dasharray="5.14 2.22"/>
<line x1="971.00" y1="883.00" x2="971.00" y2="579.00" stroke="#b0b0b0" stroke-opacity="0.62" stroke-width="2.0" stroke-dasharray="5.14 2.22"/>
<line x1="979.00" y1="883.00" x2="979.00" y2="579.00" stroke="#b0b0b0" stroke-opacity="0.62" stroke-width="2.0" stroke-dasharray="5.14 2.22"/>
<line x1="987.00" y1="883.00" x2="987.00" y2="579.00" stroke="#b0b0b0" stroke-opacity="0.62" stroke-width="2.0" stroke-dasharray="5.14 2.22"/>
<line x1="995.00" y1="883.00" x2="995.00" y2="579.00" stroke="#b0b0b0" stroke-opacity="0.62" stroke-width="2.0" stroke-dasharray="5.14 2.22"/>
<line x1="1003.00" y1="883.00" x2="1003.00" y2="579.00" stroke="#b0b0b0" stroke-opacity="0.62" stroke-width="2.0" stroke-dasharray="5.14 2.22"/>
<line x1="1013.00" y1="883.00" x2="1013.00" y2="579.00" stroke="#b0b0b0" stroke-opacity="0.62" stroke-width="2.0" stroke-dasharray="5.14 2.22"/>
<line x1="1021.00" y1="883.00" x2="1021.00" y2="579.00" stroke="#b0b0b0" stroke-opacity="0.62" stroke-width="2.0" stroke-dasharray="5.14 2.22"/>
<line x1="1029.00" y1="883.00" x2="1029.00" y2="579.00" stroke="#b0b0b0" stroke-opacity="0.62" stroke-width="2.0" stroke-dasharray="5.14 2.22"/>
<line x1="1037.00" y1="883.00" x2="1037.00" y2="579.00" stroke="#b0b0b0" stroke-opacity="0.62" stroke-width="2.0" stroke-dasharray="5.14 2.22"/>
<line x1="1045.00" y1="883.00" x2="1045.00" y2="579.00" stroke="#b0b0b0" stroke-opacity="0.62" stroke-width="2.0" stroke-dasharray="5.14 2.22"/>
<line x1="1053.00" y1="883.00" x2="1053.00" y2="579.00" stroke="#b0b0b0" stroke-opacity="0.62" stroke-width="2.0" stroke-dasharray="5.14 2.22"/>
<line x1="1061.00" y1="883.00" x2="1061.00" y2="579.00" stroke="#b0b0b0" stroke-opacity="0.62" stroke-width="2.0" stroke-dasharray="5.14 2.22"/>
<line x1="1069.00" y1="883.00" x2="1069.00" y2="579.00" stroke="#b0b0b0" stroke-opacity="0.62" stroke-width="2.0" stroke-dasharray="5.14 2.22"/>
<line x1="1077.00" y1="883.00" x2="1077.00" y2="579.00" stroke="#b0b0b0" stroke-opacity="0.62" stroke-width="2.0" stroke-dasharray="5.14 2.22"/>
<line x1="1085.00" y1="883.00" x2="1085.00" y2="579.00" stroke="#b0b0b0" stroke-opacity="0.62" stroke-width="2.0" stroke-dasharray="5.14 2.22"/>
<line x1="1093.00" y1="883.00" x2="1093.00" y2="579.00" stroke="#b0b0b0" stroke-opacity="0.62" stroke-width="2.0" stroke-dasharray="5.14 2.22"/>
<line x1="1103.00" y1="883.00" x2="1103.00" y2="579.00" stroke="#b0b0b0" stroke-opacity="0.62" stroke-width="2.0" stroke-dasharray="5.14 2.22"/>
<line x1="1111.00" y1="883.00" x2="1111.00" y2="579.00" stroke="#b0b0b0" stroke-opacity="0.62" stroke-width="2.0" stroke-dasharray="5.14 2.22"/>
<line x1="1119.00" y1="883.00" x2="1119.00" y2="579.00" stroke="#b0b0b0" stroke-opacity="0.62" stroke-width="2.0" stroke-dasharray="5.14 2.22"/>
<line x1="1127.00" y1="883.00" x2="1127.00" y2="579.00" stroke="#b0b0b0" stroke-opacity="0.62" stroke-width="2.0" stroke-dasharray="5.14 2.22"/>
<line x1="1135.00" y1="883.00" x2="1135.00" y2="579.00" stroke="#b0b0b0" stroke-opacity="0.62" stroke-width="2.0" stroke-dasharray="5.14 2.22"/>
<line x1="1143.00" y1="883.00" x2="1143.00" y2="579.00" stroke="#b0b0b0" stroke-opacity="0.62" stroke-width="2.0" stroke-dasharray="5.14 2.22"/>
<line x1="1151.00" y1="883.00" x2="1151.00" y2="579.00" stroke="#b0b0b0" stroke-opacity="0.62" stroke-width="2.0" stroke-dasharray="5.14 2.22"/>
<line x1="1159.00" y1="883.00" x2="1159.00" y2="579.00" stroke="#b0b0b0" stroke-opacity="0.62" stroke-width="2.0" stroke-dasharray="5.14 2.22"/>
<line x1="1167.00" y1="883.00" x2="1167.00" y2="579.00" stroke="#b0b0b0" stroke-opacity="0.62" stroke-width="2.0" stroke-dasharray="5.14 2.22"/>
<line x1="1175.00" y1="883.00" x2="1175.00" y2="579.00" stroke="#b0b0b0" stroke-opacity="0.62" stroke-width="2.0" stroke-dasharray="5.14 2.22"/>
<line x1="1185.00" y1="883.00" x2="1185.00" y2="579.00" stroke="#b0b0b0" stroke-opacity="0.62" stroke-width="2.0" stroke-dasharray="5.14 2.22"/>
<line x1="1193.00" y1="883.00" x2="1193.00" y2="579.00" stroke="#b0b0b0" stroke-opacity="0.62" stroke-width="2.0" stroke-dasharray="5.14 2.22"/>
<line x1="1201.00" y1="883.00" x2="1201.00" y2="579.00" stroke="#b0b0b0" stroke-opacity="0.62" stroke-width="2.0" stroke-dasharray="5.14 2.22"/>
<line x1="1209.00" y1="883.00" x2="1209.00" y2="579.00" stroke="#b0b0b0" stroke-opacity="0.62" stroke-width="2.0" stroke-dasharray="5.14 2.22"/>
<line x1="1217.00" y1="883.00" x2="1217.00" y2="579.00" stroke="#b0b0b0" stroke-opacity="0.62" stroke-width="2.0" stroke-dasharray="5.14 2.22"/>
<line x1="1225.00" y1="883.00" x2="1225.00" y2="579.00" stroke="#b0b0b0" stroke-opacity="0.62" stroke-width="2.0" stroke-dasharray="5.14 2.22"/>
<line x1="1233.00" y1="883.00" x2="1233.00" y2="579.00" stroke="#b0b0b0" stroke-opacity="0.62" stroke-width="2.0" stroke-dasharray="5.14 2.22"/>
<line x1="1241.00" y1="883.00" x2="1241.00" y2="579.00" stroke="#b0b0b0" stroke-opacity="0.62" stroke-width="2.0" stroke-dasharray="5.14 2.22"/>
<line x1="1249.00" y1="883.00" x2="1249.00" y2="579.00" stroke="#b0b0b0" stroke-opacity="0.62" stroke-width="2.0" stroke-dasharray="5.14 2.22"/>
<line x1="1257.00" y1="883.00" x2="1257.00" y2="579.00" stroke="#b0b0b0" stroke-opacity="0.62" stroke-width="2.0" stroke-dasharray="5.14 2.22"/>
<line x1="1265.00" y1="883.00" x2="1265.00" y2="579.00" stroke="#b0b0b0" stroke-opacity="0.62" stroke-width="2.0" stroke-dasharray="5.14 2.22"/>
<line x1="1275.00" y1="883.00" x2="1275.00" y2="579.00" stroke="#b0b0b0" stroke-opacity="0.62" stroke-width="2.0" stroke-dasharray="5.14 2.22"/>
<line x1="1283.00" y1="883.00" x2="1283.00" y2="579.00" stroke="#b0b0b0" stroke-opacity="0.62" stroke-width="2.0" stroke-dasharray="5.14 2.22"/>
<line x1="1291.00" y1="883.00" x2="1291.00" y2="579.00" stroke="#b0b0b0" stroke-opacity="0.62" stroke-width="2.0" stroke-dasharray="5.14 2.22"/>
<line x1="1299.00" y1="883.00" x2="1299.00" y2="579.00" stroke="#b0b0b0" stroke-opacity="0.62" stroke-width="2.0" stroke-dasharray="5.14 2.22"/>
<line x1="1307.00" y1="883.00" x2="1307.00" y2="579.00" stroke="#b0b0b0" stroke-opacity="0.62" stroke-width="2.0" stroke-dasharray="5.14 2.22"/>
<line x1="1315.00" y1="883.00" x2="1315.00" y2="579.00" stroke="#b0b0b0" stroke-opacity="0.62" stroke-width="2.0" stroke-dasharray="5.14 2.22"/>
<line x1="1323.00" y1="883.00" x2="1323.00" y2="579.00" stroke="#b0b0b0" stroke-opacity="0.62" stroke-width="2.0" stroke-dasharray="5.14 2.22"/>
<line x1="1331.00" y1="883.00" x2="1331.00" y2="579.00" stroke="#b0b0b0" stroke-opacity="0.62" stroke-width="2.0" stroke-dasharray="5.14 2.22"/>
<line x1="1339.00" y1="883.00" x2="1339.00" y2="579.00" stroke="#b0b0b0" stroke-opacity="0.62" stroke-width="2.0" stroke-dasharray="5.14 2.22"/>
<line x1="1347.00" y1="883.00" x2="1347.00" y2="579.00" stroke="#b0b0b0" stroke-opacity="0.62" stroke-width="2.0" stroke-dasharray="5.14 2.22"/>
<line x1="1357.00" y1="883.00" x2="1357.00" y2="579.00" stroke="#b0b0b0" stroke-opacity="0.62" stroke-width="2.0" stroke-dasharray="5.14 2.22"/>
<line x1="1365.00" y1="883.00" x2="1365.00" y2="579.00" stroke="#b0b0b0" stroke-opacity="0.62" stroke-width="2.0" stroke-dasharray="5.14 2.22"/>
<line x1="1373.00" y1="883.00" x2="1373.00" y2="579.00" stroke="#b0b0b0" stroke-opacity="0.62" stroke-width="2.0" stroke-dasharray="5.14 2.22"/>
<line x1="1381.00" y1="883.00" x2="1381.00" y2="579.00" stroke="#b0b0b0" stroke-opacity="0.62" stroke-width="2.0" stroke-dasharray="5.14 2.22"/>
<line x1="1389.00" y1="883.00" x2="1389.00" y2="579.00" stroke="#b0b0b0" stroke-opacity="0.62" stroke-width="2.0" stroke-dasharray="5.14 2.22"/>
<line x1="1397.00" y1="883.00" x2="1397.00" y2="579.00" stroke="#b0b0b0" stroke-opacity="0.62" stroke-width="2.0" stroke-dasharray="5.14 2.22"/>
<line x1="1405.00" y1="883.00" x2="1405.00" y2="579.00" stroke="#b0b0b0" stroke-opacity="0.62" stroke-width="2.0" stroke-dasharray="5.14 2.22"/>
<line x1="1413.00" y1="883.00" x2="1413.00" y2="579.00" stroke="#b0b0b0" stroke-opacity="0.62" stroke-width="2.0" stroke-dasharray="5.14 2.22"/>
<line x1="1421.00" y1="883.00" x2="1421.00" y2="579.00" stroke="#b0b0b0" stroke-opacity="0.62" stroke-width="2.0" stroke-dasharray="5.14 2.22"/>
<line x1="1429.00" y1="883.00" x2="1429.00" y2="579.00" stroke="#b0b0b0" stroke-opacity="0.62" stroke-width="2.0" stroke-dasharray="5.14 2.22"/>
<line x1="1437.00" y1="883.00" x2="1437.00" y2="579.00" stroke="#b0b0b0" stroke-opacity="0.62" stroke-width="2.0" stroke-dasharray="5.14 2.22"/>
<line x1="1447.00" y1="883.00" x2="1447.00" y2="579.00" stroke="#b0b0b0" stroke-opacity="0.62" stroke-width="2.0" stroke-dasharray="5.14 2.22"/>
<line x1="1455.00" y1="883.00" x2="1455.00" y2="579.00" stroke="#b0b0b0" stroke-opacity="0.62" stroke-width="2.0" stroke-dasharray="5.14 2.22"/>
<line x1="1463.00" y1="883.00" x2="1463.00" y2="579.00" stroke="#b0b0b0" stroke-opacity="0.62" stroke-width="2.0" stroke-dasharray="5.14 2.22"/>
<line x1="1471.00" y1="883.00" x2="1471.00" y2="579.00" stroke="#b0b0b0" stroke-opacity="0.62" stroke-width="2.0" stroke-dasharray="5.14 2.22"/>
<line x1="1479.00" y1="883.00" x2="1479.00" y2="579.00" stroke="#b0b0b0" stroke-opacity="0.62" stroke-width="2.0" stroke-dasharray="5.14 2.22"/>
<line x1="1487.00" y1="883.00" x2="1487.00" y2="579.00" stroke="#b0b0b0" stroke-opacity="0.62" stroke-width="2.0" stroke-dasharray="5.14 2.22"/>
<line x1="1495.00" y1="883.00" x2="1495.00" y2="579.00" stroke="#b0b0b0" stroke-opacity="0.62" stroke-width="2.0" stroke-dasharray="5.14 2.22"/>
<line x1="1503.00" y1="883.00" x2="1503.00" y2="579.00" stroke="#b0b0b0" stroke-opacity="0.62" stroke-width="2.0" stroke-dasharray="5.14 2.22"/>
<line x1="1511.00" y1="883.00" x2="1511.00" y2="579.00" stroke="#b0b0b0" stroke-opacity="0.62" stroke-width="2.0" stroke-dasharray="5.14 2.22"/>
<line x1="1519.00" y1="883.00" x2="1519.00" y2="579.00" stroke="#b0b0b0" stroke-opacity="0.62" stroke-width="2.0" stroke-dasharray="5.14 2.22"/>
<line x1="1527.00" y1="883.00" x2="1527.00" y2="579.00" stroke="#b0b0b0" stroke-opacity="0.62" stroke-width="2.0" stroke-dasharray="5.14 2.22"/>
<line x1="1537.00" y1="883.00" x2="1537.00" y2="579.00" stroke="#b0b0b0" stroke-opacity="0.62" stroke-width="2.0" stroke-dasharray="5.14 2.22"/>
<line x1="1545.00" y1="883.00" x2="1545.00" y2="579.00" stroke="#b0b0b0" stroke-opacity="0.62" stroke-width="2.0" stroke-dasharray="5.14 2.22"/>
<line x1="1553.00" y1="883.00" x2="1553.00" y2="579.00" stroke="#b0b0b0" stroke-opacity="0.62" stroke-width="2.0" stroke-dasharray="5.14 2.22"/>
<line x1="1561.00" y1="883.00" x2="1561.00" y2="579.00" stroke="#b0b0b0" stroke-opacity="0.62" stroke-width="2.0" stroke-dasharray="5.14 2.22"/>
<line x1="1569.00" y1="883.00" x2="1569.00" y2="579.00" stroke="#b0b0b0" stroke-opacity="0.62" stroke-width="2.0" stroke-dasharray="5.14 2.22"/>
<line x1="1577.00" y1="883.00" x2="1577.00" y2="579.00" stroke="#b0b0b0" stroke-opacity="0.62" stroke-width="2.0" stroke-dasharray="5.14 2.22"/>
<line x1="1585.00" y1="883.00" x2="1585.00" y2="579.00" stroke="#b0b0b0" stroke-opacity="0.62" stroke-width="2.0" stroke-dasharray="5.14 2.22"/>
<line x1="1593.00" y1="883.00" x2="1593.00" y2="579.00" stroke="#b0b0b0" stroke-opacity="0.62" stroke-width="2.0" stroke-dasharray="5.14 2.22"/>
<line x1="1601.00" y1="883.00" x2="1601.00" y2="579.00" stroke="#b0b0b0" stroke-opacity="0.62" stroke-width="2.0" stroke-dasharray="5.14 2.22"/>
<line x1="1609.00" y1="883.00" x2="1609.00" y2="579.00" stroke="#b0b0b0" stroke-opacity="0.62" stroke-width="2.0" stroke-dasharray="5.14 2.22"/>
<line x1="1619.00" y1="883.00" x2="1619.00" y2="579.00" stroke="#b0b0b0" stroke-opacity="0.62" stroke-width="2.0" stroke-dasharray="5.14 2.22"/>
<line x1="1627.00" y1="883.00" x2="1627.00" y2="579.00" stroke="#b0b0b0" stroke-opacity="0.62" stroke-width="2.0" stroke-dasharray="5.14 2.22"/>
<line x1="1635.00" y1="883.00" x2="1635.00" y2="579.00" stroke="#b0b0b0" stroke-opacity="0.62" stroke-width="2.0" stroke-dasharray="5.14 2.22"/>
<line x1="1643.00" y1="883.00" x2="1643.00" y2="579.00" stroke="#b0b0b0" stroke-opacity="0.62" stroke-width="2.0" stroke-dasharray="5.14 2.22"/>
<line x1="1651.00" y1="883.00" x2="1651.00" y2="579.00" stroke="#b0b0b0" stroke-opacity="0.62" stroke-width="2.0" stroke-dasharray="5.14 2.22"/>
<line x1="1659.00" y1="883.00" x2="1659.00" y2="579.00" stroke="#b0b0b0" stroke-opacity="0.62" stroke-width="2.0" stroke-dasharray="5.14 2.22"/>
<line x1="1667.00" y1="883.00" x2="1667.00" y2="579.00" stroke="#b0b0b0" stroke-opacity="0.62" stroke-width="2.0" stroke-dasharray="5.14 2.22"/>
<line x1="1675.00" y1="883.00" x2="1675.00" y2="579.00" stroke="#b0b0b0" stroke-opacity="0.62" stroke-width="2.0" stroke-dasharray="5.14 2.22"/>
<line x1="1683.00" y1="883.00" x2="1683.00" y2="579.00" stroke="#b0b0b0" stroke-opacity="0.62" stroke-width="2.0" stroke-dasharray="5.14 2.22"/>
<line x1="1691.00" y1="883.00" x2="1691.00" y2="579.00" stroke="#b0b0b0" stroke-opacity="0.62" stroke-width="2.0" stroke-dasharray="5.14 2.22"/>
<line x1="1699.00" y1="883.00" x2="1699.00" y2="579.00" stroke="#b0b0b0" stroke-opacity="0.62" stroke-width="2.0" stroke-dasharray="5.14 2.22"/>
<line x1="1709.00" y1="883.00" x2="1709.00" y2="579.00" stroke="#b0b0b0" stroke-opacity="0.62" stroke-width="2.0" stroke-dasharray="5.14 2.22"/>
<line x1="1717.00" y1="883.00" x2="1717.00" y2="579.00" stroke="#b0b0b0" stroke-opacity="0.62" stroke-width="2.0" stroke-dasharray="5.14 2.22"/>
<line x1="1725.00" y1="883.00" x2="1725.00" y2="579.00" stroke="#b0b0b0" stroke-opacity="0.62" stroke-width="2.0" stroke-dasharray="5.14 2.22"/>
<line x1="1733.00" y1="883.00" x2="1733.00" y2="579.00" stroke="#b0b0b0" stroke-opacity="0.62" stroke-width="2.0" stroke-dasharray="5.14 2.22"/>
<line x1="1741.00" y1="883.00" x2="1741.00" y2="579.00" stroke="#b0b0b0" stroke-opacity="0.62" stroke-width="2.0" stroke-dasharray="5.14 2.22"/>
<line x1="1749.00" y1="883.00" x2="1749.00" y2="579.00" stroke="#b0b0b0" stroke-opacity="0.62" stroke-width="2.0" stroke-dasharray="5.14 2.22"/>
<line x1="1757.00" y1="883.00" x2="1757.00" y2="579.00" stroke="#b0b0b0" stroke-opacity="0.62" stroke-width="2.0" stroke-dasharray="5.14 2.22"/>
<line x1="1765.00" y1="883.00" x2="1765.00" y2="579.00" stroke="#b0b0b0" stroke-opacity="0.62" stroke-width="2.0" stroke-dasharray="5.14 2.22"/>
<line x1="1773.00" y1="883.00" x2="1773.00" y2="579.00" stroke="#b0b0b0" stroke-opacity="0.62" stroke-width="2.0" stroke-dasharray="5.14 2.22"/>
<line x1="1781.00" y1="883.00" x2="1781.00" y2="579.00" stroke="#b0b0b0" stroke-opacity="0.62" stroke-width="2.0" stroke-dasharray="5.14 2.22"/>
<line x1="1791.00" y1="883.00" x2="1791.00" y2="579.00" stroke="#b0b0b0" stroke-opacity="0.62" stroke-width="2.0" stroke-dasharray="5.14 2.22"/>
<line x1="1799.00" y1="883.00" x2="1799.00" y2="579.00" stroke="#b0b0b0" stroke-opacity="0.62" stroke-width="2.0" stroke-dasharray="5.14 2.22"/>
<line x1="1807.00" y1="883.00" x2="1807.00" y2="579.00" stroke="#b0b0b0" stroke-opacity="0.62" stroke-width="2.0" stroke-dasharray="5.14 2.22"/>
<line x1="1815.00" y1="883.00" x2="1815.00" y2="579.00" stroke="#b0b0b0" stroke-opacity="0.62" stroke-width="2.0" stroke-dasharray="5.14 2.22"/>
<line x1="1823.00" y1="883.00" x2="1823.00" y2="579.00" stroke="#b0b0b0" stroke-opacity="0.62" stroke-width="2.0" stroke-dasharray="5.14 2.22"/>
<line x1="1831.00" y1="883.00" x2="1831.00" y2="579.00" stroke="#b0b0b0" stroke-opacity="0.62" stroke-width="2.0" stroke-dasharray="5.14 2.22"/>
<line x1="1839.00" y1="883.00" x2="1839.00" y2="579.00" stroke="#b0b0b0" stroke-opacity="0.62" stroke-width="2.0" stroke-dasharray="5.14 2.22"/>
<line x1="1847.00" y1="883.00" x2="1847.00" y2="579.00" stroke="#b0b0b0" stroke-opacity="0.62" stroke-width="2.0" stroke-dasharray="5.14 2.22"/>
<line x1="1855.00" y1="883.00" x2="1855.00" y2="579.00" stroke="#b0b0b0" stroke-opacity="0.62" stroke-width="2.0" stroke-dasharray="5.14 2.22"/>
<line x1="1863.00" y1="883.00" x2="1863.00" y2="579.00" stroke="#b0b0b0" stroke-opacity="0.62" stroke-width="2.0" stroke-dasharray="5.14 2.22"/>
<line x1="1871.00" y1="883.00" x2="1871.00" y2="579.00" stroke="#b0b0b0" stroke-opacity="0.62" stroke-width="2.0" stroke-dasharray="5.14 2.22"/>
<line x1="1881.00" y1="883.00" x2="1881.00" y2="579.00" stroke="#b0b0b0" stroke-opacity="0.62" stroke-width="2.0" stroke-dasharray="5.14 2.22"/>
<line x1="1889.00" y1="883.00" x2="1889.00" y2="579.00" stroke="#b0b0b0" stroke-opacity="0.62" stroke-width="2.0" stroke-dasharray="5.14 2.22"/>
<line x1="1897.00" y1="883.00" x2="1897.00" y2="579.00" stroke="#b0b0b0" stroke-opacity="0.62" stroke-width="2.0" stroke-dasharray="5.14 2.22"/>
<line x1="1905.00" y1="883.00" x2="1905.00" y2="579.00" stroke="#b0b0b0" stroke-opacity="0.62" stroke-width="2.0" stroke-dasharray="5.14 2.22"/>
<line x1="1913.00" y1="883.00" x2="1913.00" y2="579.00" stroke="#b0b0b0" stroke-opacity="0.62" stroke-width="2.0" stroke-dasharray="5.14 2.22"/>
<line x1="1921.00" y1="883.00" x2="1921.00" y2="579.00" stroke="#b0b0b0" stroke-opacity="0.62" stroke-width="2.0" stroke-dasharray="5.14 2.22"/>
<line x1="1929.00" y1="883.00" x2="1929.00" y2="579.00" stroke="#b0b0b0" stroke-opacity="0.62" stroke-width="2.0" stroke-dasharray="5.14 2.22"/>
<line x1="1937.00" y1="883.00" x2="1937.00" y2="579.00" stroke="#b0b0b0" stroke-opacity="0.62" stroke-width="2.0" stroke-dasharray="5.14 2.22"/>
<line x1="1945.00" y1="883.00" x2="1945.00" y2="579.00" stroke="#b0b0b0" stroke-opacity="0.62" stroke-width="2.0" stroke-dasharray="5.14 2.22"/>
<line x1="1953.00" y1="883.00" x2="1953.00" y2="579.00" stroke="#b0b0b0" stroke-opacity="0.62" stroke-width="2.0" stroke-dasharray="5.14 2.22"/>
<line x1="1963.00" y1="883.00" x2="1963.00" y2="579.00" stroke="#b0b0b0" stroke-opacity="0.62" stroke-width="2.0" stroke-dasharray="5.14 2.22"/>
<line x1="1971.00" y1="883.00" x2="1971.00" y2="579.00" stroke="#b0b0b0" stroke-opacity="0.62" stroke-width="2.0" stroke-dasharray="5.14 2.22"/>
<line x1="1979.00" y1="883.00" x2="1979.00" y2="579.00" stroke="#b0b0b0" stroke-opacity="0.62" stroke-width="2.0" stroke-dasharray="5.14 2.22"/>
<line x1="1987.00" y1="883.00" x2="1987.00" y2="579.00" stroke="#b0b0b0" stroke-opacity="0.62" stroke-width="2.0" stroke-dasharray="5.14 2.22"/>
<line x1="1995.00" y1="883.00" x2="1995.00" y2="579.00" stroke="#b0b0b0" stroke-opacity="0.62" stroke-width="2.0" stroke-dasharray="5.14 2.22"/>
<line x1="2003.00" y1="883.00" x2="2003.00" y2="579.00" stroke="#b0b0b0" stroke-opacity="0.62" stroke-width="2.0" stroke-dasharray="5.14 2.22"/>
<line x1="2011.00" y1="883.00" x2="2011.00" y2="579.00" stroke="#b0b0b0" stroke-opacity="0.62" stroke-width="2.0" stroke-dasharray="5.14 2.22"/>
<line x1="2019.00" y1="883.00" x2="2019.00" y2="579.00" stroke="#b0b0b0" stroke-opacity="0.62" stroke-width="2.0" stroke-dasharray="5.14 2.22"/>
<line x1="2027.00" y1="883.00" x2="2027.00" y2="579.00" stroke="#b0b0b0" stroke-opacity="0.62" stroke-width="2.0" stroke-dasharray="5.14 2.22"/>
<line x1="2035.00" y1="883.00" x2="2035.00" y2="579.00" stroke="#b0b0b0" stroke-opacity="0.62" stroke-width="2.0" stroke-dasharray="5.14 2.22"/>
<line x1="2043.00" y1="883.00" x2="2043.00" y2="579.00" stroke="#b0b0b0" stroke-opacity="0.62" stroke-width="2.0" stroke-dasharray="5.14 2.22"/>
<line x1="2053.00" y1="883.00" x2="2053.00" y2="579.00" stroke="#b0b0b0" stroke-opacity="0.62" stroke-width="2.0" stroke-dasharray="5.14 2.22"/>
<line x1="2061.00" y1="883.00" x2="2061.00" y2="579.00" stroke="#b0b0b0" stroke-opacity="0.62" stroke-width="2.0" stroke-dasharray="5.14 2.22"/>
<line x1="2069.00" y1="883.00" x2="2069.00" y2="579.00" stroke="#b0b0b0" stroke-opacity="0.62" stroke-width="2.0" stroke-dasharray="5.14 2.22"/>
<line x1="2077.00" y1="883.00" x2="2077.00" y2="579.00" stroke="#b0b0b0" stroke-opacity="0.62" stroke-width="2.0" stroke-dasharray="5.14 2.22"/>
<line x1="2085.00" y1="883.00" x2="2085.00" y2="579.00" stroke="#b0b0b0" stroke-opacity="0.62" stroke-width="2.0" stroke-dasharray="5.14 2.22"/>
<line x1="291.00" y1="853.00" x2="2093.00" y2="853.00" stroke="#b0b0b0" stroke-opacity="0.62" stroke-width="2.0" stroke-dasharray="5.14 2.22"/>
<line x1="291.00" y1="791.00" x2="2093.00" y2="791.00" stroke="#b0b0b0" stroke-opacity="0.62" stroke-width="2.0" stroke-dasharray="5.14 2.22"/>
<line x1="291.00" y1="731.00" x2="2093.00" y2="731.00" stroke="#b0b0b0" stroke-opacity="0.62" stroke-width="2.0" stroke-dasharray="5.14 2.22"/>
<line x1="291.00" y1="671.00" x2="2093.00" y2="671.00" stroke="#b0b0b0" stroke-opacity="0.62" stroke-width="2.0" stroke-dasharray="5.14 2.22"/>
<line x1="291.00" y1="609.00" x2="2093.00" y2="609.00" stroke="#b0b0b0" stroke-opacity="0.62" stroke-width="2.0" stroke-dasharray="5.14 2.22"/>
</g>
<g clip-path="url(#ax2)">
<line x1="299.00" y1="1237.00" x2="299.00" y2="933.00" stroke="#b0b0b0" stroke-opacity="0.62" stroke-width="2.0" stroke-dasharray="5.14 2.22"/>
<line x1="307.00" y1="1237.00" x2="307.00" y2="933.00" stroke="#b0b0b0" stroke-opacity="0.62" stroke-width="2.0" stroke-dasharray="5.14 2.22"/>
<line x1="315.00" y1="1237.00" x2="315.00" y2="933.00" stroke="#b0b0b0" stroke-opacity="0.62" stroke-width="2.0" stroke-dasharray="5.14 2.22"/>
<line x1="325.00" y1="1237.00" x2="325.00" y2="933.00" stroke="#b0b0b0" stroke-opacity="0.62" stroke-width="2.0" stroke-dasharray="5.14 2.22"/>
<line x1="333.00" y1="1237.00" x2="333.00" y2="933.00" stroke="#b0b0b0" stroke-opacity="0.62" stroke-width="2.0" stroke-dasharray="5.14 2.22"/>
<line x1="341.00" y1="1237.00" x2="341.00" y2="933.00" stroke="#b0b0b0" stroke-opacity="0.62" stroke-width="2.0" stroke-dasharray="5.14 2.22"/>
<line x1="349.00" y1="1237.00" x2="349.00" y2="933.00" stroke="#b0b0b0" stroke-opacity="0.62" stroke-width="2.0" stroke-dasharray="5.14 2.22"/>
<line x1="357.00" y1="1237.00" x2="357.00" y2="933.00" stroke="#b0b0b0" stroke-opacity="0.62" stroke-width="2.0" stroke-dasharray="5.14 2.22"/>
<line x1="365.00" y1="1237.00" x2="365.00" y2="933.00" stroke="#b0b0b0" stroke-opacity="0.62" stroke-width="2.0" stroke-dasharray="5.14 2.22"/>
<line x1="373.00" y1="1237.00" x2="373.00" y2="933.00" stroke="#b0b0b0" stroke-opacity="0.62" stroke-width="2.0" stroke-dasharray="5.14 2.22"/>
<line x1="381.00" y1="1237.00" x2="381.00" y2="933.00" stroke="#b0b0b0" stroke-opacity="0.62" stroke-width="2.0" stroke-dasharray="5.14 2.22"/>
<line x1="389.00" y1="1237.00" x2="389.00" y2="933.00" stroke="#b0b0b0" stroke-opacity="0.62" stroke-width="2.0" stroke-dasharray="5.14 2.22"/>
<line x1="397.00" y1="1237.00" x2="397.00" y2="933.00" stroke="#b0b0b0" stroke-opacity="0.62" stroke-width="2.0" stroke-dasharray="5.14 2.22"/>
<line x1="405.00" y1="1237.00" x2="405.00" y2="933.00" stroke="#b0b0b0" stroke-opacity="0.62" stroke-width="2.0" stroke-dasharray="5.14 2.22"/>
<line x1="415.00" y1="1237.00" x2="415.00" y2="933.00" stroke="#b0b0b0" stroke-opacity="0.62" stroke-width="2.0" stroke-dasharray="5.14 2.22"/>
<line x1="423.00" y1="1237.00" x2="423.00" y2="933.00" stroke="#b0b0b0" stroke-opacity="0.62" stroke-width="2.0" stroke-dasharray="5.14 2.22"/>
<line x1="431.00" y1="1237.00" x2="431.00" y2="933.00" stroke="#b0b0b0" stroke-opacity="0.62" stroke-width="2.0" stroke-dasharray="5.14 2.22"/>
<line x1="439.00" y1="1237.00" x2="439.00" y2="933.00" stroke="#b0b0b0" stroke-opacity="0.62" stroke-width="2.0" stroke-dasharray="5.14 2.22"/>
<line x1="447.00" y1="1237.00" x2="447.00" y2="933.00" stroke="#b0b0b0" stroke-opacity="0.62" stroke-width="2.0" stroke-dasharray="5.14 2.22"/>
<line x1="455.00" y1="1237.00" x2="455.00" y2="933.00" stroke="#b0b0b0" stroke-opacity="0.62" stroke-width="2.0" stroke-dasharray="5.14 2.22"/>
<line x1="463.00" y1="1237.00" x2="463.00" y2="933.00" stroke="#b0b0b0" stroke-opacity="0.62" stroke-width="2.0" stroke-dasharray="5.14 2.22"/>
<line x1="471.00" y1="1237.00" x2="471.00" y2="933.00" stroke="#b0b0b0" stroke-opacity="0.62" stroke-width="2.0" stroke-dasharray="5.14 2.22"/>
<line x1="479.00" y1="1237.00" x2="479.00" y2="933.00" stroke="#b0b0b0" stroke-opacity="0.62" stroke-width="2.0" stroke-dasharray="5.14 2.22"/>
<line x1="487.00" y1="1237.00" x2="487.00" y2="933.00" stroke="#b0b0b0" stroke-opacity="0.62" stroke-width="2.0" stroke-dasharray="5.14 2.22"/>
<line x1="497.00" y1="1237.00" x2="497.00" y2="933.00" stroke="#b0b0b0" stroke-opacity="0.62" stroke-width="2.0" stroke-dasharray="5.14 2.22"/>
<line x1="505.00" y1="1237.00" x2="505.00" y2="933.00" stroke="#b0b0b0" stroke-opacity="0.62" stroke-width="2.0" stroke-dasharray="5.14 2.22"/>
<line x1="513.00" y1="1237.00" x2="513.00" y2="933.00" stroke="#b0b0b0" stroke-opacity="0.62" stroke-width="2.0" stroke-dasharray="5.14 2.22"/>
<line x1="521.00" y1="1237.00" x2="521.00" y2="933.00" stroke="#b0b0b0" stroke-opacity="0.62" stroke-width="2.0" stroke-dasharray="5.14 2.22"/>
<line x1="529.00" y1="1237.00" x2="529.00" y2="933.00" stroke="#b0b0b0" stroke-opacity="0.62" stroke-width="2.0" stroke-dasharray="5.14 2.22"/>
<line x1="537.00" y1="1237.00" x2="537.00" y2="933.00" stroke="#b0b0b0" stroke-opacity="0.62" stroke-width="2.0" stroke-dasharray="5.14 2.22"/>
<line x1="545.00" y1="1237.00" x2="545.00" y2="933.00" stroke="#b0b0b0" stroke-opacity="0.62" stroke-width="2.0" stroke-dasharray="5.14 2.22"/>
<line x1="553.00" y1="1237.00" x2="553.00" y2="933.00" stroke="#b0b0b0" stroke-opacity="0.62" stroke-width="2.0" stroke-dasharray="5.14 2.22"/>
<line x1="561.00" y1="1237.00" x2="561.00" y2="933.00" stroke="#b0b0b0" stroke-opacity="0.62" stroke-width="2.0" stroke-dasharray="5.14 2.22"/>
<line x1="569.00" y1="1237.00" x2="569.00" y2="933.00" stroke="#b0b0b0" stroke-opacity="0.62" stroke-width="2.0" stroke-dasharray="5.14 2.22"/>
<line x1="577.00" y1="1237.00" x2="577.00" y2="933.00" stroke="#b0b0b0" stroke-opacity="0.62" stroke-width="2.0" stroke-dasharray="5.14 2.22"/>
<line x1="587.00" y1="1237.00" x2="587.00" y2="933.00" stroke="#b0b0b0" stroke-opacity="0.62" stroke-width="2.0" stroke-dasharray="5.14 2.22"/>
<line x1="595.00" y1="1237.00" x2="595.00" y2="933.00" stroke="#b0b0b0" stroke-opacity="0.62" stroke-width="2.0" stroke-dasharray="5.14 2.22"/>
<line x1="603.00" y1="1237.00" x2="603.00" y2="933.00" stroke="#b0b0b0" stroke-opacity="0.62" stroke-width="2.0" stroke-dasharray="5.14 2.22"/>
<line x1="611.00" y1="1237.00" x2="611.00" y2="933.00" stroke="#b0b0b0" stroke-opacity="0.62" stroke-width="2.0" stroke-dasharray="5.14 2.22"/>
<line x1="619.00" y1="1237.00" x2="619.00" y2="933.00" stroke="#b0b0b0" stroke-opacity="0.62" stroke-width="2.0" stroke-dasharray="5.14 2.22"/>
<line x1="627.00" y1="1237.00" x2="627.00" y2="933.00" stroke="#b0b0b0" stroke-opacity="0.62" stroke-width="2.0" stroke-dasharray="5.14 2.22"/>
<line x1="635.00" y1="1237.00" x2="635.00" y2="933.00" stroke="#b0b0b0" stroke-opacity="0.62" stroke-width="2.0" stroke-dasharray="5.14 2.22"/>
<line x1="643.00" y1="1237.00" x2="643.00" y2="933.00" stroke="#b0b0b0" stroke-opacity="0.62" stroke-width="2.0" stroke-dasharray="5.14 2.22"/>
<line x1="651.00" y1="1237.00" x2="651.00" y2="933.00" stroke="#b0b0b0" stroke-opacity="0.62" stroke-width="2.0" stroke-dasharray="5.14 2.22"/>
<line x1="659.00" y1="1237.00" x2="659.00" y2="933.00" stroke="#b0b0b0" stroke-opacity="0.62" stroke-width="2.0" stroke-dasharray="5.14 2.22"/>
<line x1="669.00" y1="1237.00" x2="669.00" y2="933.00" stroke="#b0b0b0" stroke-opacity="0.62" stroke-width="2.0" stroke-dasharray="5.14 2.22"/>
<line x1="677.00" y1="1237.00" x2="677.00" y2="933.00" stroke="#b0b0b0" stroke-opacity="0.62" stroke-width="2.0" stroke-dasharray="5.14 2.22"/>
<line x1="685.00" y1="1237.00" x2="685.00" y2="933.00" stroke="#b0b0b0" stroke-opacity="0.62" stroke-width="2.0" stroke-dasharray="5.14 2.22"/>
<line x1="693.00" y1="1237.00" x2="693.00" y2="933.00" stroke="#b0b0b0" stroke-opacity="0.62" stroke-width="2.0" stroke-dasharray="5.14 2.22"/>
<line x1="701.00" y1="1237.00" x2="701.00" y2="933.00" stroke="#b0b0b0" stroke-opacity="0.62" stroke-width="2.0" stroke-dasharray="5.14 2.22"/>
<line x1="709.00" y1="1237.00" x2="709.00" y2="933.00" stroke="#b0b0b0" stroke-opacity="0.62" stroke-width="2.0" stroke-dasharray="5.14 2.22"/>
<line x1="717.00" y1="1237.00" x2="717.00" y2="933.00" stroke="#b0b0b0" stroke-opacity="0.62" stroke-width="2.0" stroke-dasharray="5.14 2.22"/>
<line x1="725.00" y1="1237.00" x2="725.00" y2="933.00" stroke="#b0b0b0" stroke-opacity="0.62" stroke-width="2.0" stroke-dasharray="5.14 2.22"/>
<line x1="733.00" y1="1237.00" x2="733.00" y2="933.00" stroke="#b0b0b0" stroke-opacity="0.62" stroke-width="2.0" stroke-dasharray="5.14 2.22"/>
<line x1="741.00" y1="1237.00" x2="741.00" y2="933.00" stroke="#b0b0b0" stroke-opacity="0.62" stroke-width="2.0" stroke-dasharray="5.14 2.22"/>
<line x1="749.00" y1="1237.00" x2="749.00" y2="933.00" stroke="#b0b0b0" stroke-opacity="0.62" stroke-width="2.0" stroke-dasharray="5.14 2.22"/>
<line x1="759.00" y1="1237.00" x2="759.00" y2="933.00" stroke="#b0b0b0" stroke-opacity="0.62" stroke-width="2.0" stroke-dasharray="5.14 2.22"/>
<line x1="767.00" y1="1237.00" x2="767.00" y2="933.00" stroke="#b0b0b0" stroke-opacity="0.62" stroke-width="2.0" stroke-dasharray="5.14 2.22"/>
<line x1="775.00" y1="1237.00" x2="775.00" y2="933.00" stroke="#b0b0b0" stroke-opacity="0.62" stroke-width="2.0" stroke-dasharray="5.14 2.22"/>
<line x1="783.00" y1="1237.00" x2="783.00" y2="933.00" stroke="#b0b0b0" stroke-opacity="0.62" stroke-width="2.0" stroke-dasharray="5.14 2.22"/>
<line x1="791.00" y1="1237.00" x2="791.00" y2="933.00" stroke="#b0b0b0" stroke-opacity="0.62" stroke-width="2.0" stroke-dasharray="5.14 2.22"/>
<line x1="799.00" y1="1237.00" x2="799.00" y2="933.00" stroke="#b0b0b0" stroke-opacity="0.62" stroke-width="2.0" stroke-dasharray="5.14 2.22"/>
<line x1="807.00" y1="1237.00" x2="807.00" y2="933.00" stroke="#b0b0b0" stroke-opacity="0.62" stroke-width="2.0" stroke-dasharray="5.14 2.22"/>
<line x1="815.00" y1="1237.00" x2="815.00" y2="933.00" stroke="#b0b0b0" stroke-opacity="0.62" stroke-width="2.0" stroke-dasharray="5.14 2.22"/>
<line x1="823.00" y1="1237.00" x2="823.00" y2="933.00" stroke="#b0b0b0" stroke-opacity="0.62" stroke-width="2.0" stroke-dasharray="5.14 2.22"/>
<line x1="831.00" y1="1237.00" x2="831.00" y2="933.00" stroke="#b0b0b0" stroke-opacity="0.62" stroke-width="2.0" stroke-dasharray="5.14 2.22"/>
<line x1="841.00" y1="1237.00" x2="841.00" y2="933.00" stroke="#b0b0b0" stroke-opacity="0.62" stroke-width="2.0" stroke-dasharray="5.14 2.22"/>
<line x1="849.00" y1="1237.00" x2="849.00" y2="933.00" stroke="#b0b0b0" stroke-opacity="0.62" stroke-width="2.0" stroke-dasharray="5.14 2.22"/>
<line x1="857.00" y1="1237.00" x2="857.00" y2="933.00" stroke="#b0b0b0" stroke-opacity="0.62" stroke-width="2.0" stroke-dasharray="5.14 2.22"/>
<line x1="865.00" y1="1237.00" x2="865.00" y2="933.00" stroke="#b0b0b0" stroke-opacity="0.62" stroke-width="2.0" stroke-dasharray="5.14 2.22"/>
<line x1="873.00" y1="1237.00" x2="873.00" y2="933.00" stroke="#b0b0b0" stroke-opacity="0.62" stroke-width="2.0" stroke-dasharray="5.14 2.22"/>
<line x1="881.00" y1="1237.00" x2="881.00" y2="933.00" stroke="#b0b0b0" stroke-opacity="0.62" stroke-width="2.0" stroke-dasharray="5.14 2.22"/>
<line x1="889.00" y1="1237.00" x2="889.00" y2="933.00" stroke="#b0b0b0" stroke-opacity="0.62" stroke-width="2.0" stroke-dasharray="5.14 2.22"/>
<line x1="897.00" y1="1237.00" x2="897.00" y2="933.00" stroke="#b0b0b0" stroke-opacity="0.62" stroke-width="2.0" stroke-dasharray="5.14 2.22"/>
<line x1="905.00" y1="1237.00" x2="905.00" y2="933.00" stroke="#b0b0b0" stroke-opacity="0.62" stroke-width="2.0" stroke-dasharray="5.14 2.22"/>
<line x1="913.00" y1="1237.00" x2="913.00" y2="933.00" stroke="#b0b0b0" stroke-opacity="0.62" stroke-width="2.0" stroke-dasharray="5.14 2.22"/>
<line x1="921.00" y1="1237.00" x2="921.00" y2="933.00" stroke="#b0b0b0" stroke-opacity="0.62" stroke-width="2.0" stroke-dasharray="5.14 2.22"/>
<line x1="931.00" y1="1237.00" x2="931.00" y2="933.00" stroke="#b0b0b0" stroke-opacity="0.62" stroke-width="2.0" stroke-dasharray="5.14 2.22"/>
<line x1="939.00" y1="1237.00" x2="939.00" y2="933.00" stroke="#b0b0b0" stroke-opacity="0.62" stroke-width="2.0" stroke-dasharray="5.14 2.22"/>
<line x1="947.00" y1="1237.00" x2="947.00" y2="933.00" stroke="#b0b0b0" stroke-opacity="0.62" stroke-width="2.0" stroke-dasharray="5.14 2.22"/>
<line x1="955.00" y1="1237.00" x2="955.00" y2="933.00" stroke="#b0b0b0" stroke-opacity="0.62" stroke-width="2.0" stroke-dasharray="5.14 2.22"/>
<line x1="963.00" y1="1237.00" x2="963.00" y2="933.00" stroke="#b0b0b0" stroke-opacity="0.62" stroke-width="2.0" stroke-dasharray="5.14 2.22"/>
<line x1="971.00" y1="1237.00" x2="971.00" y2="933.00" stroke="#b0b0b0" stroke-opacity="0.62" stroke-width="2.0" stroke-dasharray="5.14 2.22"/>
<line x1="979.00" y1="1237.00" x2="979.00" y2="933.00" stroke="#b0b0b0" stroke-opacity="0.62" stroke-width="2.0" stroke-dasharray="5.14 2.22"/>
<line x1="987.00" y1="1237.00" x2="987.00" y2="933.00" stroke="#b0b0b0" stroke-opacity="0.62" stroke-width="2.0" stroke-dasharray="5.14 2.22"/>
<line x1="995.00" y1="1237.00" x2="995.00" y2="933.00" stroke="#b0b0b0" stroke-opacity="0.62" stroke-width="2.0" stroke-dasharray="5.14 2.22"/>
<line x1="1003.00" y1="1237.00" x2="1003.00" y2="933.00" stroke="#b0b0b0" stroke-opacity="0.62" stroke-width="2.0" stroke-dasharray="5.14 2.22"/>
<line x1="1013.00" y1="1237.00" x2="1013.00" y2="933.00" stroke="#b0b0b0" stroke-opacity="0.62" stroke-width="2.0" stroke-dasharray="5.14 2.22"/>
<line x1="1021.00" y1="1237.00" x2="1021.00" y2="933.00" stroke="#b0b0b0" stroke-opacity="0.62" stroke-width="2.0" stroke-dasharray="5.14 2.22"/>
<line x1="1029.00" y1="1237.00" x2="1029.00" y2="933.00" stroke="#b0b0b0" stroke-opacity="0.62" stroke-width="2.0" stroke-dasharray="5.14 2.22"/>
<line x1="1037.00" y1="1237.00" x2="1037.00" y2="933.00" stroke="#b0b0b0" stroke-opacity="0.62" stroke-width="2.0" stroke-dasharray="5.14 2.22"/>
<line x1="1045.00" y1="1237.00" x2="1045.00" y2="933.00" stroke="#b0b0b0" stroke-opacity="0.62" stroke-width="2.0" stroke-dasharray="5.14 2.22"/>
<line x1="1053.00" y1="1237.00" x2="1053.00" y2="933.00" stroke="#b0b0b0" stroke-opacity="0.62" stroke-width="2.0" stroke-dasharray="5.14 2.22"/>
<line x1="1061.00" y1="1237.00" x2="1061.00" y2="933.00" stroke="#b0b0b0" stroke-opacity="0.62" stroke-width="2.0" stroke-dasharray="5.14 2.22"/>
<line x1="1069.00" y1="1237.00" x2="1069.00" y2="933.00" stroke="#b0b0b0" stroke-opacity="0.62" stroke-width="2.0" stroke-dasharray="5.14 2.22"/>
<line x1="1077.00" y1="1237.00" x2="1077.00" y2="933.00" stroke="#b0b0b0" stroke-opacity="0.62" stroke-width="2.0" stroke-dasharray="5.14 2.22"/>
<line x1="1085.00" y1="1237.00" x2="1085.00" y2="933.00" stroke="#b0b0b0" stroke-opacity="0.62" stroke-width="2.0" stroke-dasharray="5.14 2.22"/>
<line x1="1093.00" y1="1237.00" x2="1093.00" y2="933.00" stroke="#b0b0b0" stroke-opacity="0.62" stroke-width="2.0" stroke-dasharray="5.14 2.22"/>
<line x1="1103.00" y1="1237.00" x2="1103.00" y2="933.00" stroke="#b0b0b0" stroke-opacity="0.62" stroke-width="2.0" stroke-dasharray="5.14 2.22"/>
<line x1="1111.00" y1="1237.00" x2="1111.00" y2="933.00" stroke="#b0b0b0" stroke-opacity="0.62" stroke-width="2.0" stroke-dasharray="5.14 2.22"/>
<line x1="1119.00" y1="1237.00" x2="1119.00" y2="933.00" stroke="#b0b0b0" stroke-opacity="0.62" stroke-width="2.0" stroke-dasharray="5.14 2.22"/>
<line x1="1127.00" y1="1237.00" x2="1127.00" y2="933.00" stroke="#b0b0b0" stroke-opacity="0.62" stroke-width="2.0" stroke-dasharray="5.14 2.22"/>
<line x1="1135.00" y1="1237.00" x2="1135.00" y2="933.00" stroke="#b0b0b0" stroke-opacity="0.62" stroke-width="2.0" stroke-dasharray="5.14 2.22"/>
<line x1="1143.00" y1="1237.00" x2="1143.00" y2="933.00" stroke="#b0b0b0" stroke-opacity="0.62" stroke-width="2.0" stroke-dasharray="5.14 2.22"/>
<line x1="1151.00" y1="1237.00" x2="1151.00" y2="933.00" stroke="#b0b0b0" stroke-opacity="0.62" stroke-width="2.0" stroke-dasharray="5.14 2.22"/>
<line x1="1159.00" y1="1237.00" x2="1159.00" y2="933.00" stroke="#b0b0b0" stroke-opacity="0.62" stroke-width="2.0" stroke-dasharray="5.14 2.22"/>
<line x1="1167.00" y1="1237.00" x2="1167.00" y2="933.00" stroke="#b0b0b0" stroke-opacity="0.62" stroke-width="2.0" stroke-dasharray="5.14 2.22"/>
<line x1="1175.00" y1="1237.00" x2="1175.00" y2="933.00" stroke="#b0b0b0" stroke-opacity="0.62" stroke-width="2.0" stroke-dasharray="5.14 2.22"/>
<line x1="1185.00" y1="1237.00" x2="1185.00" y2="933.00" stroke="#b0b0b0" stroke-opacity="0.62" stroke-width="2.0" stroke-dasharray="5.14 2.22"/>
<line x1="1193.00" y1="1237.00" x2="1193.00" y2="933.00" stroke="#b0b0b0" stroke-opacity="0.62" stroke-width="2.0" stroke-dasharray="5.14 2.22"/>
<line x1="1201.00" y1="1237.00" x2="1201.00" y2="933.00" stroke="#b0b0b0" stroke-opacity="0.62" stroke-width="2.0" stroke-dasharray="5.14 2.22"/>
<line x1="1209.00" y1="1237.00" x2="1209.00" y2="933.00" stroke="#b0b0b0" stroke-opacity="0.62" stroke-width="2.0" stroke-dasharray="5.14 2.22"/>
<line x1="1217.00" y1="1237.00" x2="1217.00" y2="933.00" stroke="#b0b0b0" stroke-opacity="0.62" stroke-width="2.0" stroke-dasharray="5.14 2.22"/>
<line x1="1225.00" y1="1237.00" x2="1225.00" y2="933.00" stroke="#b0b0b0" stroke-opacity="0.62" stroke-width="2.0" stroke-dasharray="5.14 2.22"/>
<line x1="1233.00" y1="1237.00" x2="1233.00" y2="933.00" stroke="#b0b0b0" stroke-opacity="0.62" stroke-width="2.0" stroke-dasharray="5.14 2.22"/>
<line x1="1241.00" y1="1237.00" x2="1241.00" y2="933.00" stroke="#b0b0b0" stroke-opacity="0.62" stroke-width="2.0" stroke-dasharray="5.14 2.22"/>
<line x1="1249.00" y1="1237.00" x2="1249.00" y2="933.00" stroke="#b0b0b0" stroke-opacity="0.62" stroke-width="2.0" stroke-dasharray="5.14 2.22"/>
<line x1="1257.00" y1="1237.00" x2="1257.00" y2="933.00" stroke="#b0b0b0" stroke-opacity="0.62" stroke-width="2.0" stroke-dasharray="5.14 2.22"/>
<line x1="1265.00" y1="1237.00" x2="1265.00" y2="933.00" stroke="#b0b0b0" stroke-opacity="0.62" stroke-width="2.0" stroke-dasharray="5.14 2.22"/>
<line x1="1275.00" y1="1237.00" x2="1275.00" y2="933.00" stroke="#b0b0b0" stroke-opacity="0.62" stroke-width="2.0" stroke-dasharray="5.14 2.22"/>
<line x1="1283.00" y1="1237.00" x2="1283.00" y2="933.00" stroke="#b0b0b0" stroke-opacity="0.62" stroke-width="2.0" stroke-dasharray="5.14 2.22"/>
<line x1="1291.00" y1="1237.00" x2="1291.00" y2="933.00" stroke="#b0b0b0" stroke-opacity="0.62" stroke-width="2.0" stroke-dasharray="5.14 2.22"/>
<line x1="1299.00" y1="1237.00" x2="1299.00" y2="933.00" stroke="#b0b0b0" stroke-opacity="0.62" stroke-width="2.0" stroke-dasharray="5.14 2.22"/>
<line x1="1307.00" y1="1237.00" x2="1307.00" y2="933.00" stroke="#b0b0b0" stroke-opacity="0.62" stroke-width="2.0" stroke-dasharray="5.14 2.22"/>
<line x1="1315.00" y1="1237.00" x2="1315.00" y2="933.00" stroke="#b0b0b0" stroke-opacity="0.62" stroke-width="2.0" stroke-dasharray="5.14 2.22"/>
<line x1="1323.00" y1="1237.00" x2="1323.00" y2="933.00" stroke="#b0b0b0" stroke-opacity="0.62" stroke-width="2.0" stroke-dasharray="5.14 2.22"/>
<line x1="1331.00" y1="1237.00" x2="1331.00" y2="933.00" stroke="#b0b0b0" stroke-opacity="0.62" stroke-width="2.0" stroke-dasharray="5.14 2.22"/>
<line x1="1339.00" y1="1237.00" x2="1339.00" y2="933.00" stroke="#b0b0b0" stroke-opacity="0.62" stroke-width="2.0" stroke-dasharray="5.14 2.22"/>
<line x1="1347.00" y1="1237.00" x2="1347.00" y2="933.00" stroke="#b0b0b0" stroke-opacity="0.62" stroke-width="2.0" stroke-dasharray="5.14 2.22"/>
<line x1="1357.00" y1="1237.00" x2="1357.00" y2="933.00" stroke="#b0b0b0" stroke-opacity="0.62" stroke-width="2.0" stroke-dasharray="5.14 2.22"/>
<line x1="1365.00" y1="1237.00" x2="1365.00" y2="933.00" stroke="#b0b0b0" stroke-opacity="0.62" stroke-width="2.0" stroke-dasharray="5.14 2.22"/>
<line x1="1373.00" y1="1237.00" x2="1373.00" y2="933.00" stroke="#b0b0b0" stroke-opacity="0.62" stroke-width="2.0" stroke-dasharray="5.14 2.22"/>
<line x1="1381.00" y1="1237.00" x2="1381.00" y2="933.00" stroke="#b0b0b0" stroke-opacity="0.62" stroke-width="2.0" stroke-dasharray="5.14 2.22"/>
<line x1="1389.00" y1="1237.00" x2="1389.00" y2="933.00" stroke="#b0b0b0" stroke-opacity="0.62" stroke-width="2.0" stroke-dasharray="5.14 2.22"/>
<line x1="1397.00" y1="1237.00" x2="1397.00" y2="933.00" stroke="#b0b0b0" stroke-opacity="0.62" stroke-width="2.0" stroke-dasharray="5.14 2.22"/>
<line x1="1405.00" y1="1237.00" x2="1405.00" y2="933.00" stroke="#b0b0b0" stroke-opacity="0.62" stroke-width="2.0" stroke-dasharray="5.14 2.22"/>
<line x1="1413.00" y1="1237.00" x2="1413.00" y2="933.00" stroke="#b0b0b0" stroke-opacity="0.62" stroke-width="2.0" stroke-dasharray="5.14 2.22"/>
<line x1="1421.00" y1="1237.00" x2="1421.00" y2="933.00" stroke="#b0b0b0" stroke-opacity="0.62" stroke-width="2.0" stroke-dasharray="5.14 2.22"/>
<line x1="1429.00" y1="1237.00" x2="1429.00" y2="933.00" stroke="#b0b0b0" stroke-opacity="0.62" stroke-width="2.0" stroke-dasharray="5.14 2.22"/>
<line x1="1437.00" y1="1237.00" x2="1437.00" y2="933.00" stroke="#b0b0b0" stroke-opacity="0.62" stroke-width="2.0" stroke-dasharray="5.14 2.22"/>
<line x1="1447.00" y1="1237.00" x2="1447.00" y2="933.00" stroke="#b0b0b0" stroke-opacity="0.62" stroke-width="2.0" stroke-dasharray="5.14 2.22"/>
<line x1="1455.00" y1="1237.00" x2="1455.00" y2="933.00" stroke="#b0b0b0" stroke-opacity="0.62" stroke-width="2.0" stroke-dasharray="5.14 2.22"/>
<line x1="1463.00" y1="1237.00" x2="1463.00" y2="933.00" stroke="#b0b0b0" stroke-opacity="0.62" stroke-width="2.0" stroke-dasharray="5.14 2.22"/>
<line x1="1471.00" y1="1237.00" x2="1471.00" y2="933.00" stroke="#b0b0b0" stroke-opacity="0.62" stroke-width="2.0" stroke-dasharray="5.14 2.22"/>
<line x1="1479.00" y1="1237.00" x2="1479.00" y2="933.00" stroke="#b0b0b0" stroke-opacity="0.62" stroke-width="2.0" stroke-dasharray="5.14 2.22"/>
<line x1="1487.00" y1="1237.00" x2="1487.00" y2="933.00" stroke="#b0b0b0" stroke-opacity="0.62" stroke-width="2.0" stroke-dasharray="5.14 2.22"/>
<line x1="1495.00" y1="1237.00" x2="1495.00" y2="933.00" stroke="#b0b0b0" stroke-opacity="0.62" stroke-width="2.0" stroke-dasharray="5.14 2.22"/>
<line x1="1503.00" y1="1237.00" x2="1503.00" y2="933.00" stroke="#b0b0b0" stroke-opacity="0.62" stroke-width="2.0" stroke-dasharray="5.14 2.22"/>
<line x1="1511.00" y1="1237.00" x2="1511.00" y2="933.00" stroke="#b0b0b0" stroke-opacity="0.62" stroke-width="2.0" stroke-dasharray="5.14 2.22"/>
<line x1="1519.00" y1="1237.00" x2="1519.00" y2="933.00" stroke="#b0b0b0" stroke-opacity="0.62" stroke-width="2.0" stroke-dasharray="5.14 2.22"/>
<line x1="1527.00" y1="1237.00" x2="1527.00" y2="933.00" stroke="#b0b0b0" stroke-opacity="0.62" stroke-width="2.0" stroke-dasharray="5.14 2.22"/>
<line x1="1537.00" y1="1237.00" x2="1537.00" y2="933.00" stroke="#b0b0b0" stroke-opacity="0.62" stroke-width="2.0" stroke-dasharray="5.14 2.22"/>
<line x1="1545.00" y1="1237.00" x2="1545.00" y2="933.00" stroke="#b0b0b0" stroke-opacity="0.62" stroke-width="2.0" stroke-dasharray="5.14 2.22"/>
<line x1="1553.00" y1="1237.00" x2="1553.00" y2="933.00" stroke="#b0b0b0" stroke-opacity="0.62" stroke-width="2.0" stroke-dasharray="5.14 2.22"/>
<line x1="1561.00" y1="1237.00" x2="1561.00" y2="933.00" stroke="#b0b0b0" stroke-opacity="0.62" stroke-width="2.0" stroke-dasharray="5.14 2.22"/>
<line x1="1569.00" y1="1237.00" x2="1569.00" y2="933.00" stroke="#b0b0b0" stroke-opacity="0.62" stroke-width="2.0" stroke-dasharray="5.14 2.22"/>
<line x1="1577.00" y1="1237.00" x2="1577.00" y2="933.00" stroke="#b0b0b0" stroke-opacity="0.62" stroke-width="2.0" stroke-dasharray="5.14 2.22"/>
<line x1="1585.00" y1="1237.00" x2="1585.00" y2="933.00" stroke="#b0b0b0" stroke-opacity="0.62" stroke-width="2.0" stroke-dasharray="5.14 2.22"/>
<line x1="1593.00" y1="1237.00" x2="1593.00" y2="933.00" stroke="#b0b0b0" stroke-opacity="0.62" stroke-width="2.0" stroke-dasharray="5.14 2.22"/>
<line x1="1601.00" y1="1237.00" x2="1601.00" y2="933.00" stroke="#b0b0b0" stroke-opacity="0.62" stroke-width="2.0" stroke-dasharray="5.14 2.22"/>
<line x1="1609.00" y1="1237.00" x2="1609.00" y2="933.00" stroke="#b0b0b0" stroke-opacity="0.62" stroke-width="2.0" stroke-dasharray="5.14 2.22"/>
<line x1="1619.00" y1="1237.00" x2="1619.00" y2="933.00" stroke="#b0b0b0" stroke-opacity="0.62" stroke-width="2.0" stroke-dasharray="5.14 2.22"/>
<line x1="1627.00" y1="1237.00" x2="1627.00" y2="933.00" stroke="#b0b0b0" stroke-opacity="0.62" stroke-width="2.0" stroke-dasharray="5.14 2.22"/>
<line x1="1635.00" y1="1237.00" x2="1635.00" y2="933.00" stroke="#b0b0b0" stroke-opacity="0.62" stroke-width="2.0" stroke-dasharray="5.14 2.22"/>
<line x1="1643.00" y1="1237.00" x2="1643.00" y2="933.00" stroke="#b0b0b0" stroke-opacity="0.62" stroke-width="2.0" stroke-dasharray="5.14 2.22"/>
<line x1="1651.00" y1="1237.00" x2="1651.00" y2="933.00" stroke="#b0b0b0" stroke-opacity="0.62" stroke-width="2.0" stroke-dasharray="5.14 2.22"/>
<line x1="1659.00" y1="1237.00" x2="1659.00" y2="933.00" stroke="#b0b0b0" stroke-opacity="0.62" stroke-width="2.0" stroke-dasharray="5.14 2.22"/>
<line x1="1667.00" y1="1237.00" x2="1667.00" y2="933.00" stroke="#b0b0b0" stroke-opacity="0.62" stroke-width="2.0" stroke-dasharray="5.14 2.22"/>
<line x1="1675.00" y1="1237.00" x2="1675.00" y2="933.00" stroke="#b0b0b0" stroke-opacity="0.62" stroke-width="2.0" stroke-dasharray="5.14 2.22"/>
<line x1="1683.00" y1="1237.00" x2="1683.00" y2="933.00" stroke="#b0b0b0" stroke-opacity="0.62" stroke-width="2.0" stroke-dasharray="5.14 2.22"/>
<line x1="1691.00" y1="1237.00" x2="1691.00" y2="933.00" stroke="#b0b0b0" stroke-opacity="0.62" stroke-width="2.0" stroke-dasharray="5.14 2.22"/>
<line x1="1699.00" y1="1237.00" x2="1699.00" y2="933.00" stroke="#b0b0b0" stroke-opacity="0.62" stroke-width="2.0" stroke-dasharray="5.14 2.22"/>
<line x1="1709.00" y1="1237.00" x2="1709.00" y2="933.00" stroke="#b0b0b0" stroke-opacity="0.62" stroke-width="2.0" stroke-dasharray="5.14 2.22"/>
<line x1="1717.00" y1="1237.00" x2="1717.00" y2="933.00" stroke="#b0b0b0" stroke-opacity="0.62" stroke-width="2.0" stroke-dasharray="5.14 2.22"/>
<line x1="1725.00" y1="1237.00" x2="1725.00" y2="933.00" stroke="#b0b0b0" stroke-opacity="0.62" stroke-width="2.0" stroke-dasharray="5.14 2.22"/>
<line x1="1733.00" y1="1237.00" x2="1733.00" y2="933.00" stroke="#b0b0b0" stroke-opacity="0.62" stroke-width="2.0" stroke-dasharray="5.14 2.22"/>
<line x1="1741.00" y1="1237.00" x2="1741.00" y2="933.00" stroke="#b0b0b0" stroke-opacity="0.62" stroke-width="2.0" stroke-dasharray="5.14 2.22"/>
<line x1="1749.00" y1="1237.00" x2="1749.00" y2="933.00" stroke="#b0b0b0" stroke-opacity="0.62" stroke-width="2.0" stroke-dasharray="5.14 2.22"/>
<line x1="1757.00" y1="1237.00" x2="1757.00" y2="933.00" stroke="#b0b0b0" stroke-opacity="0.62" stroke-width="2.0" stroke-dasharray="5.14 2.22"/>
<line x1="1765.00" y1="1237.00" x2="1765.00" y2="933.00" stroke="#b0b0b0" stroke-opacity="0.62" stroke-width="2.0" stroke-dasharray="5.14 2.22"/>
<line x1="1773.00" y1="1237.00" x2="1773.00" y2="933.00" stroke="#b0b0b0" stroke-opacity="0.62" stroke-width="2.0" stroke-dasharray="5.14 2.22"/>
<line x1="1781.00" y1="1237.00" x2="1781.00" y2="933.00" stroke="#b0b0b0" stroke-opacity="0.62" stroke-width="2.0" stroke-dasharray="5.14 2.22"/>
<line x1="1791.00" y1="1237.00" x2="1791.00" y2="933.00" stroke="#b0b0b0" stroke-opacity="0.62" stroke-width="2.0" stroke-dasharray="5.14 2.22"/>
<line x1="1799.00" y1="1237.00" x2="1799.00" y2="933.00" stroke="#b0b0b0" stroke-opacity="0.62" stroke-width="2.0" stroke-dasharray="5.14 2.22"/>
<line x1="1807.00" y1="1237.00" x2="1807.00" y2="933.00" stroke="#b0b0b0" stroke-opacity="0.62" stroke-width="2.0" stroke-dasharray="5.14 2.22"/>
<line x1="1815.00" y1="1237.00" x2="1815.00" y2="933.00" stroke="#b0b0b0" stroke-opacity="0.62" stroke-width="2.0" stroke-dasharray="5.14 2.22"/>
<line x1="1823.00" y1="1237.00" x2="1823.00" y2="933.00" stroke="#b0b0b0" stroke-opacity="0.62" stroke-width="2.0" stroke-dasharray="5.14 2.22"/>
<line x1="1831.00" y1="1237.00" x2="1831.00" y2="933.00" stroke="#b0b0b0" stroke-opacity="0.62" stroke-width="2.0" stroke-dasharray="5.14 2.22"/>
<line x1="1839.00" y1="1237.00" x2="1839.00" y2="933.00" stroke="#b0b0b0" stroke-opacity="0.62" stroke-width="2.0" stroke-dasharray="5.14 2.22"/>
<line x1="1847.00" y1="1237.00" x2="1847.00" y2="933.00" stroke="#b0b0b0" stroke-opacity="0.62" stroke-width="2.0" stroke-dasharray="5.14 2.22"/>
<line x1="1855.00" y1="1237.00" x2="1855.00" y2="933.00" stroke="#b0b0b0" stroke-opacity="0.62" stroke-width="2.0" stroke-dasharray="5.14 2.22"/>
<line x1="1863.00" y1="1237.00" x2="1863.00" y2="933.00" stroke="#b0b0b0" stroke-opacity="0.62" stroke-width="2.0" stroke-dasharray="5.14 2.22"/>
<line x1="1871.00" y1="1237.00" x2="1871.00" y2="933.00" stroke="#b0b0b0" stroke-opacity="0.62" stroke-width="2.0" stroke-dasharray="5.14 2.22"/>
<line x1="1881.00" y1="1237.00" x2="1881.00" y2="933.00" stroke="#b0b0b0" stroke-opacity="0.62" stroke-width="2.0" stroke-dasharray="5.14 2.22"/>
<line x1="1889.00" y1="1237.00" x2="1889.00" y2="933.00" stroke="#b0b0b0" stroke-opacity="0.62" stroke-width="2.0" stroke-dasharray="5.14 2.22"/>
<line x1="1897.00" y1="1237.00" x2="1897.00" y2="933.00" stroke="#b0b0b0" stroke-opacity="0.62" stroke-width="2.0" stroke-dasharray="5.14 2.22"/>
<line x1="1905.00" y1="1237.00" x2="1905.00" y2="933.00" stroke="#b0b0b0" stroke-opacity="0.62" stroke-width="2.0" stroke-dasharray="5.14 2.22"/>
<line x1="1913.00" y1="1237.00" x2="1913.00" y2="933.00" stroke="#b0b0b0" stroke-opacity="0.62" stroke-width="2.0" stroke-dasharray="5.14 2.22"/>
<line x1="1921.00" y1="1237.00" x2="1921.00" y2="933.00" stroke="#b0b0b0" stroke-opacity="0.62" stroke-width="2.0" stroke-dasharray="5.14 2.22"/>
<line x1="1929.00" y1="1237.00" x2="1929.00" y2="933.00" stroke="#b0b0b0" stroke-opacity="0.62" stroke-width="2.0" stroke-dasharray="5.14 2.22"/>
<line x1="1937.00" y1="1237.00" x2="1937.00" y2="933.00" stroke="#b0b0b0" stroke-opacity="0.62" stroke-width="2.0" stroke-dasharray="5.14 2.22"/>
<line x1="1945.00" y1="1237.00" x2="1945.00" y2="933.00" stroke="#b0b0b0" stroke-opacity="0.62" stroke-width="2.0" stroke-dasharray="5.14 2.22"/>
<line x1="1953.00" y1="1237.00" x2="1953.00" y2="933.00" stroke="#b0b0b0" stroke-opacity="0.62" stroke-width="2.0" stroke-dasharray="5.14 2.22"/>
<line x1="1963.00" y1="1237.00" x2="1963.00" y2="933.00" stroke="#b0b0b0" stroke-opacity="0.62" stroke-width="2.0" stroke-dasharray="5.14 2.22"/>
<line x1="1971.00" y1="1237.00" x2="1971.00" y2="933.00" stroke="#b0b0b0" stroke-opacity="0.62" stroke-width="2.0" stroke-dasharray="5.14 2.22"/>
<line x1="1979.00" y1="1237.00" x2="1979.00" y2="933.00" stroke="#b0b0b0" stroke-opacity="0.62" stroke-width="2.0" stroke-dasharray="5.14 2.22"/>
<line x1="1987.00" y1="1237.00" x2="1987.00" y2="933.00" stroke="#b0b0b0" stroke-opacity="0.62" stroke-width="2.0" stroke-dasharray="5.14 2.22"/>
<line x1="1995.00" y1="1237.00" x2="1995.00" y2="933.00" stroke="#b0b0b0" stroke-opacity="0.62" stroke-width="2.0" stroke-dasharray="5.14 2.22"/>
<line x1="2003.00" y1="1237.00" x2="2003.00" y2="933.00" stroke="#b0b0b0" stroke-opacity="0.62" stroke-width="2.0" stroke-dasharray="5.14 2.22"/>
<line x1="2011.00" y1="1237.00" x2="2011.00" y2="933.00" stroke="#b0b0b0" stroke-opacity="0.62" stroke-width="2.0" stroke-dasharray="5.14 2.22"/>
<line x1="2019.00" y1="1237.00" x2="2019.00" y2="933.00" stroke="#b0b0b0" stroke-opacity="0.62" stroke-width="2.0" stroke-dasharray="5.14 2.22"/>
<line x1="2027.00" y1="1237.00" x2="2027.00" y2="933.00" stroke="#b0b0b0" stroke-opacity="0.62" stroke-width="2.0" stroke-dasharray="5.14 2.22"/>
<line x1="2035.00" y1="1237.00" x2="2035.00" y2="933.00" stroke="#b0b0b0" stroke-opacity="0.62" stroke-width="2.0" stroke-dasharray="5.14 2.22"/>
<line x1="2043.00" y1="1237.00" x2="2043.00" y2="933.00" stroke="#b0b0b0" stroke-opacity="0.62" stroke-width="2.0" stroke-dasharray="5.14 2.22"/>
<line x1="2053.00" y1="1237.00" x2="2053.00" y2="933.00" stroke="#b0b0b0" stroke-opacity="0.62" stroke-width="2.0" stroke-dasharray="5.14 2.22"/>
<line x1="2061.00" y1="1237.00" x2="2061.00" y2="933.00" stroke="#b0b0b0" stroke-opacity="0.62" stroke-width="2.0" stroke-dasharray="5.14 2.22"/>
<line x1="2069.00" y1="1237.00" x2="2069.00" y2="933.00" stroke="#b0b0b0" stroke-opacity="0.62" stroke-width="2.0" stroke-dasharray="5.14 2.22"/>
<line x1="2077.00" y1="1237.00" x2="2077.00" y2="933.00" stroke="#b0b0b0" stroke-opacity="0.62" stroke-width="2.0" stroke-dasharray="5.14 2.22"/>
<line x1="2085.00" y1="1237.00" x2="2085.00" y2="933.00" stroke="#b0b0b0" stroke-opacity="0.62" stroke-width="2.0" stroke-dasharray="5.14 2.22"/>
<line x1="291.00" y1="1237.00" x2="2093.00" y2="1237.00" stroke="#b0b0b0" stroke-opacity="0.62" stroke-width="2.0" stroke-dasharray="5.14 2.22"/>
<line x1="291.00" y1="1149.00" x2="2093.00" y2="1149.00" stroke="#b0b0b0" stroke-opacity="0.62" stroke-width="2.0" stroke-dasharray="5.14 2.22"/>
<line x1="291.00" y1="1063.00" x2="2093.00" y2="1063.00" stroke="#b0b0b0" stroke-opacity="0.62" stroke-width="2.0" stroke-dasharray="5.14 2.22"/>
<line x1="291.00" y1="977.00" x2="2093.00" y2="977.00" stroke="#b0b0b0" stroke-opacity="0.62" stroke-width="2.0" stroke-dasharray="5.14 2.22"/>
</g>
<g clip-path="url(#ax0)">
<path d="M373.00 321.82 L374.00 321.82 L375.00 321.82 L376.00 321.82 L377.00 321.82 L378.00 321.82 L379.00 321.82 L380.00 321.82 L381.00 321.82 L382.00 321.82 L383.00 321.82 L384.00 321.82 L385.00 321.82 L386.00 321.82 L387.00 321.82 L388.00 321.82 L389.00 321.82 L390.00 321.82 L391.00 321.82 L392.00 321.82 L393.00 321.82 L394.00 321.82 L395.00 322.33 L396.00 322.84 L397.00 323.35 L398.00 323.35 L399.00 323.35 L400.00 323.35 L401.00 323.35 L402.00 322.96 L403.00 322.57 L404.00 322.18 L405.00 322.57 L406.00 322.96 L407.00 323.35 L408.00 323.35 L409.00 321.96 L410.00 320.58 L411.00 321.21 L412.00 322.59 L413.00 322.97 L414.00 322.48 L415.00 321.60 L416.00 320.73 L417.00 320.73 L418.00 320.73 L419.00 320.73 L420.00 321.76 L421.00 322.79 L422.00 323.82 L423.00 323.82 L424.00 323.82 L425.00 323.82 L426.00 323.82 L427.00 323.82 L428.00 323.82 L429.00 323.82 L430.00 323.82 L431.00 323.82 L432.00 323.82 L433.00 323.82 L434.00 323.82 L435.00 323.82 L436.00 323.82 L437.00 323.82 L438.00 323.82 L439.00 323.82 L440.00 323.82 L441.00 323.70 L442.00 323.57 L443.00 323.45 L444.00 323.45 L445.00 323.45 L446.00 323.45 L447.00 323.45 L448.00 323.45 L449.00 323.45 L450.00 323.45 L451.00 323.45 L452.00 323.45 L453.00 323.45 L454.00 323.45 L455.00 323.45 L456.00 323.45 L457.00 323.45 L458.00 323.45 L459.00 323.45 L460.00 323.41 L461.00 323.37 L462.00 323.33 L463.00 323.33 L464.00 323.33 L465.00 323.33 L466.00 323.33 L467.00 323.33 L468.00 323.33 L469.00 323.33 L470.00 322.81 L471.00 322.28 L472.00 321.76 L473.00 322.28 L474.00 322.81 L475.00 323.33 L476.00 322.82 L477.00 322.30 L478.00 321.79 L479.00 321.79 L480.00 321.79 L481.00 321.79 L482.00 321.79 L483.00 321.79 L484.00 320.69 L485.00 319.60 L486.00 320.69 L487.00 321.79 L488.00 321.79 L489.00 321.79 L490.00 321.79 L491.00 321.79 L492.00 321.79 L493.00 321.79 L494.00 321.79 L495.00 321.79 L496.00 321.79 L497.00 321.79 L498.00 321.79 L499.00 321.79 L500.00 321.79 L501.00 321.79 L502.00 322.26 L503.00 322.74 L504.00 323.21 L505.00 323.21 L506.00 323.21 L507.00 323.21 L508.00 323.21 L509.00 323.21 L510.00 323.21 L511.00 323.21 L512.00 323.21 L513.00 323.21 L514.00 322.74 L515.00 322.28 L516.00 321.81 L517.00 322.28 L518.00 322.98 L519.00 323.68 L520.00 323.91 L521.00 323.91 L522.00 323.91 L523.00 323.91 L524.00 323.85 L525.00 323.80 L526.00 323.74 L527.00 323.74 L528.00 323.74 L529.00 322.94 L530.00 322.14 L531.00 321.34 L532.00 321.34 L533.00 321.34 L534.00 321.34 L535.00 321.34 L536.00 321.34 L537.00 321.34 L538.00 321.34 L539.00 321.34 L540.00 321.34 L541.00 321.34 L542.00 321.34 L543.00 321.97 L544.00 322.61 L545.00 323.24 L546.00 323.24 L547.00 323.24 L548.00 323.24 L549.00 323.24 L550.00 323.24 L551.00 323.24 L552.00 323.24 L553.00 323.24 L554.00 323.24 L555.00 323.24 L556.00 323.24 L557.00 323.24 L558.00 323.24 L559.00 323.24 L560.00 323.23 L561.00 323.23 L562.00 323.23 L563.00 323.23 L564.00 323.23 L565.00 323.23 L566.00 323.23 L567.00 323.23 L568.00 323.23 L569.00 323.23 L570.00 323.23 L571.00 323.23 L572.00 323.23 L573.00 323.23 L574.00 323.23 L575.00 323.17 L576.00 323.11 L577.00 323.05 L578.00 323.05 L579.00 323.05 L580.00 323.05 L581.00 323.05 L582.00 323.05 L583.00 322.47 L584.00 321.89 L585.00 321.31 L586.00 321.31 L587.00 321.31 L588.00 321.31 L589.00 321.31 L590.00 321.31 L591.00 321.31 L592.00 321.31 L593.00 321.17 L594.00 321.04 L595.00 320.91 L596.00 320.91 L597.00 320.91 L598.00 320.91 L599.00 320.91 L600.00 320.91 L601.00 320.91 L602.00 320.91 L603.00 320.91 L604.00 320.91 L605.00 320.91 L606.00 320.91 L607.00 320.91 L608.00 320.91 L609.00 320.91 L610.00 320.91 L611.00 320.91 L612.00 321.77 L613.00 322.63 L614.00 323.49 L615.00 323.49 L616.00 323.49 L617.00 323.49 L618.00 323.49 L619.00 323.49 L620.00 323.49 L621.00 323.49 L622.00 323.49 L623.00 323.49 L624.00 323.49 L625.00 323.49 L626.00 323.49 L627.00 323.49 L628.00 323.49 L629.00 322.74 L630.00 322.00 L631.00 321.25 L632.00 321.25 L633.00 321.25 L634.00 321.25 L635.00 321.25 L636.00 321.25 L637.00 321.25 L638.00 321.25 L639.00 321.25 L640.00 320.38 L641.00 319.04 L642.00 319.44 L643.00 319.84 L644.00 320.31 L645.00 320.78 L646.00 321.84 L647.00 322.43 L648.00 323.01 L649.00 323.01 L650.00 323.01 L651.00 323.01 L652.00 323.01 L653.00 323.01 L654.00 323.01 L655.00 323.01 L656.00 323.01 L657.00 323.03 L658.00 323.05 L659.00 323.07 L660.00 323.07 L661.00 323.14 L662.00 323.20 L663.00 323.27 L664.00 323.27 L665.00 323.27 L666.00 323.27 L667.00 323.27 L668.00 323.27 L669.00 323.27 L670.00 323.27 L671.00 323.27 L672.00 323.27 L673.00 323.27 L674.00 323.27 L675.00 323.27 L676.00 323.27 L677.00 323.27 L678.00 323.27 L679.00 322.85 L680.00 322.43 L681.00 322.01 L682.00 322.43 L683.00 322.85 L684.00 323.27 L685.00 323.27 L686.00 323.16 L687.00 323.05 L688.00 322.38 L689.00 321.81 L690.00 322.38 L691.00 322.94 L692.00 322.94 L693.00 322.94 L694.00 322.94 L695.00 322.94 L696.00 322.94 L697.00 322.94 L698.00 322.94 L699.00 322.94 L700.00 323.29 L701.00 323.63 L702.00 323.98 L703.00 323.98 L704.00 323.98 L705.00 323.98 L706.00 323.98 L707.00 323.98 L708.00 323.98 L709.00 323.98 L710.00 323.98 L711.00 323.98 L712.00 323.98 L713.00 323.98 L714.00 323.98 L715.00 323.98 L716.00 323.98 L717.00 323.98 L718.00 323.98 L719.00 323.98 L720.00 323.98 L721.00 323.98 L722.00 323.68 L723.00 323.39 L724.00 323.10 L725.00 322.57 L726.00 322.03 L727.00 321.50 L728.00 322.03 L729.00 322.57 L730.00 323.10 L731.00 323.10 L732.00 323.10 L733.00 323.10 L734.00 323.10 L735.00 323.10 L736.00 323.10 L737.00 323.10 L738.00 323.10 L739.00 323.10 L740.00 323.10 L741.00 323.10 L742.00 323.10 L743.00 323.10 L744.00 323.10 L745.00 323.10 L746.00 323.38 L747.00 323.67 L748.00 323.95 L749.00 323.95 L750.00 323.95 L751.00 323.95 L752.00 323.95 L753.00 323.95 L754.00 323.95 L755.00 323.95 L756.00 323.95 L757.00 323.95 L758.00 323.95 L759.00 323.60 L760.00 323.26 L761.00 322.91 L762.00 322.91 L763.00 322.91 L764.00 322.91 L765.00 322.91 L766.00 322.91 L767.00 322.91 L768.00 322.13 L769.00 321.35 L770.00 322.13 L771.00 322.91 L772.00 322.91 L773.00 322.91 L774.00 322.91 L775.00 322.91 L776.00 322.91 L777.00 322.91 L778.00 322.91 L779.00 322.30 L780.00 321.68 L781.00 322.30 L782.00 322.91 L783.00 322.42 L784.00 321.92 L785.00 321.43 L786.00 321.43 L787.00 321.43 L788.00 321.97 L789.00 322.51 L790.00 323.05 L791.00 323.58 L792.00 324.11 L793.00 324.10 L794.00 324.10 L795.00 324.10 L796.00 324.10 L797.00 324.10 L798.00 324.10 L799.00 324.10 L800.00 324.10 L801.00 324.10 L802.00 324.10 L803.00 324.10 L804.00 324.10 L805.00 324.10 L806.00 324.78 L807.00 325.47 L808.00 326.15 L809.00 325.95 L810.00 325.75 L811.00 325.55 L812.00 325.35 L813.00 325.01 L814.00 324.68 L815.00 324.35 L816.00 324.22 L817.00 324.10 L818.00 323.78 L819.00 323.45 L820.00 323.13 L821.00 323.01 L822.00 322.88 L823.00 322.76 L824.00 322.64 L825.00 321.84 L826.00 321.03 L827.00 321.59 L828.00 322.15 L829.00 322.02 L830.00 321.90 L831.00 321.78 L832.00 321.66 L833.00 321.53 L834.00 321.41 L835.00 321.29 L836.00 321.17 L837.00 321.04 L838.00 320.97 L839.00 321.15 L840.00 321.33 L841.00 321.51 L842.00 321.43 L843.00 321.36 L844.00 321.28 L845.00 321.20 L846.00 321.13 L847.00 321.05 L848.00 320.97 L849.00 320.90 L850.00 320.82 L851.00 320.74 L852.00 320.67 L853.00 320.59 L854.00 320.51 L855.00 320.44 L856.00 320.36 L857.00 320.28 L858.00 320.21 L859.00 319.49 L860.00 317.73 L861.00 315.98 L862.00 316.94 L863.00 317.90 L864.00 317.82 L865.00 318.10 L866.00 318.38 L867.00 318.66 L868.00 318.58 L869.00 318.51 L870.00 318.56 L871.00 318.62 L872.00 318.68 L873.00 318.60 L874.00 318.53 L875.00 318.45 L876.00 318.37 L877.00 318.30 L878.00 318.22 L879.00 318.14 L880.00 318.07 L881.00 318.10 L882.00 318.12 L883.00 317.24 L884.00 316.36 L885.00 315.47 L886.00 315.50 L887.00 315.53 L888.00 315.56 L889.00 315.59 L890.00 315.62 L891.00 315.66 L892.00 315.70 L893.00 315.73 L894.00 315.76 L895.00 315.79 L896.00 315.82 L897.00 315.84 L898.00 315.29 L899.00 314.74 L900.00 315.35 L901.00 315.96 L902.00 315.99 L903.00 316.02 L904.00 316.04 L905.00 316.07 L906.00 316.10 L907.00 317.13 L908.00 318.15 L909.00 318.67 L910.00 318.19 L911.00 317.71 L912.00 318.25 L913.00 318.78 L914.00 319.32 L915.00 319.35 L916.00 319.38 L917.00 319.41 L918.00 319.43 L919.00 319.46 L920.00 318.97 L921.00 318.47 L922.00 319.03 L923.00 319.48 L924.00 319.41 L925.00 319.35 L926.00 319.39 L927.00 319.43 L928.00 319.46 L929.00 319.50 L930.00 319.54 L931.00 318.99 L932.00 318.44 L933.00 317.89 L934.00 318.52 L935.00 319.15 L936.00 319.78 L937.00 319.82 L938.00 319.86 L939.00 320.12 L940.00 320.37 L941.00 320.63 L942.00 320.67 L943.00 320.71 L944.00 320.75 L945.00 320.79 L946.00 320.83 L947.00 320.87 L948.00 320.90 L949.00 320.94 L950.00 320.98 L951.00 321.02 L952.00 321.06 L953.00 321.10 L954.00 321.14 L955.00 321.18 L956.00 321.22 L957.00 321.26 L958.00 321.30 L959.00 321.34 L960.00 321.22 L961.00 321.10 L962.00 320.97 L963.00 321.01 L964.00 321.05 L965.00 321.09 L966.00 321.12 L967.00 321.14 L968.00 321.17 L969.00 321.19 L970.00 321.21 L971.00 321.24 L972.00 321.26 L973.00 321.29 L974.00 321.31 L975.00 321.34 L976.00 321.36 L977.00 321.39 L978.00 321.41 L979.00 321.44 L980.00 321.46 L981.00 321.48 L982.00 321.51 L983.00 321.53 L984.00 321.56 L985.00 321.58 L986.00 321.61 L987.00 321.63 L988.00 321.66 L989.00 321.60 L990.00 321.54 L991.00 321.48 L992.00 321.50 L993.00 321.53 L994.00 321.55 L995.00 321.58 L996.00 321.60 L997.00 320.96 L998.00 320.31 L999.00 321.01 L1000.00 321.70 L1001.00 321.73 L1002.00 321.75 L1003.00 321.77 L1004.00 321.80 L1005.00 321.82 L1006.00 321.85 L1007.00 321.87 L1008.00 321.90 L1009.00 321.92 L1010.00 321.95 L1011.00 321.24 L1012.00 320.53 L1013.00 321.29 L1014.00 322.04 L1015.00 322.07 L1016.00 321.99 L1017.00 321.91 L1018.00 321.83 L1019.00 321.85 L1020.00 321.88 L1021.00 321.90 L1022.00 321.93 L1023.00 321.93 L1024.00 321.94 L1025.00 321.94 L1026.00 321.95 L1027.00 321.95 L1028.00 321.96 L1029.00 321.96 L1030.00 321.97 L1031.00 321.97 L1032.00 321.98 L1033.00 322.24 L1034.00 322.50 L1035.00 322.76 L1036.00 322.77 L1037.00 322.77 L1038.00 322.78 L1039.00 322.78 L1040.00 322.31 L1041.00 321.85 L1042.00 321.38 L1043.00 321.86 L1044.00 322.33 L1045.00 322.81 L1046.00 322.82 L1047.00 322.82 L1048.00 322.83 L1049.00 322.83 L1050.00 322.84 L1051.00 322.84 L1052.00 322.85 L1053.00 322.85 L1054.00 322.87 L1055.00 322.88 L1056.00 322.90 L1057.00 322.90 L1058.00 322.91 L1059.00 322.91 L1060.00 322.92 L1061.00 322.92 L1062.00 322.25 L1063.00 321.57 L1064.00 320.89 L1065.00 321.58 L1066.00 322.27 L1067.00 322.95 L1068.00 322.96 L1069.00 322.96 L1070.00 322.97 L1071.00 322.97 L1072.00 322.98 L1073.00 322.98 L1074.00 322.99 L1075.00 322.99 L1076.00 322.13 L1077.00 321.27 L1078.00 320.40 L1079.00 320.41 L1080.00 320.41 L1081.00 320.42 L1082.00 320.42 L1083.00 320.43 L1084.00 320.43 L1085.00 320.44 L1086.00 320.44 L1087.00 320.45 L1088.00 320.45 L1089.00 320.46 L1090.00 320.46 L1091.00 320.47 L1092.00 320.47 L1093.00 320.48 L1094.00 320.48 L1095.00 320.49 L1096.00 320.49 L1097.00 320.50 L1098.00 320.50 L1099.00 320.51 L1100.00 320.65 L1101.00 320.80 L1102.00 320.94 L1103.00 320.94 L1104.00 320.95 L1105.00 320.95 L1106.00 320.95 L1107.00 320.96 L1108.00 320.96 L1109.00 320.96 L1110.00 320.96 L1111.00 320.97 L1112.00 320.97 L1113.00 320.97 L1114.00 320.98 L1115.00 320.98 L1116.00 320.98 L1117.00 320.99 L1118.00 320.99 L1119.00 320.99 L1120.00 320.99 L1121.00 321.00 L1122.00 321.00 L1123.00 321.00 L1124.00 321.01 L1125.00 321.01 L1126.00 320.88 L1127.00 320.76 L1128.00 320.63 L1129.00 320.63 L1130.00 320.64 L1131.00 320.09 L1132.00 319.55 L1133.00 319.00 L1134.00 319.55 L1135.00 320.10 L1136.00 320.66 L1137.00 320.66 L1138.00 320.66 L1139.00 320.66 L1140.00 320.67 L1141.00 320.67 L1142.00 320.67 L1143.00 320.95 L1144.00 321.23 L1145.00 321.50 L1146.00 321.51 L1147.00 321.51 L1148.00 321.51 L1149.00 321.52 L1150.00 320.81 L1151.00 320.10 L1152.00 320.81 L1153.00 321.53 L1154.00 321.53 L1155.00 321.53 L1156.00 321.54 L1157.00 321.54 L1158.00 321.54 L1159.00 321.55 L1160.00 321.55 L1161.00 321.55 L1162.00 321.55 L1163.00 321.56 L1164.00 321.12 L1165.00 320.69 L1166.00 320.25 L1167.00 320.25 L1168.00 320.26 L1169.00 320.26 L1170.00 320.57 L1171.00 320.88 L1172.00 321.20 L1173.00 321.20 L1174.00 321.20 L1175.00 321.21 L1176.00 321.21 L1177.00 321.21 L1178.00 321.22 L1179.00 321.22 L1180.00 321.22 L1181.00 321.22 L1182.00 321.23 L1183.00 321.23 L1184.00 321.23 L1185.00 321.24 L1186.00 321.24 L1187.00 321.24 L1188.00 321.25 L1189.00 321.25 L1190.00 321.95 L1191.00 322.64 L1192.00 323.34 L1193.00 323.34 L1194.00 323.35 L1195.00 323.35 L1196.00 323.35 L1197.00 323.35 L1198.00 323.36 L1199.00 322.41 L1200.00 321.47 L1201.00 320.52 L1202.00 320.52 L1203.00 320.53 L1204.00 320.53 L1205.00 320.53 L1206.00 320.54 L1207.00 320.54 L1208.00 320.54 L1209.00 320.55 L1210.00 320.55 L1211.00 320.55 L1212.00 320.55 L1213.00 320.56 L1214.00 320.56 L1215.00 320.56 L1216.00 320.91 L1217.00 321.26 L1218.00 321.61 L1219.00 321.61 L1220.00 321.61 L1221.00 321.62 L1222.00 321.62 L1223.00 321.62 L1224.00 321.63 L1225.00 321.63 L1226.00 321.63 L1227.00 321.63 L1228.00 321.64 L1229.00 321.64 L1230.00 321.64 L1231.00 321.65 L1232.00 321.65 L1233.00 321.65 L1234.00 322.13 L1235.00 322.61 L1236.00 323.09 L1237.00 323.09 L1238.00 323.09 L1239.00 323.10 L1240.00 323.10 L1241.00 323.10 L1242.00 323.11 L1243.00 323.11 L1244.00 323.11 L1245.00 323.11 L1246.00 323.12 L1247.00 323.12 L1248.00 323.12 L1249.00 323.13 L1250.00 323.13 L1251.00 322.73 L1252.00 322.33 L1253.00 321.93 L1254.00 322.33 L1255.00 322.74 L1256.00 322.62 L1257.00 322.09 L1258.00 321.56 L1259.00 321.57 L1260.00 321.57 L1261.00 321.57 L1262.00 321.57 L1263.00 321.58 L1264.00 321.58 L1265.00 321.58 L1266.00 321.59 L1267.00 321.59 L1268.00 321.59 L1269.00 321.60 L1270.00 321.60 L1271.00 321.60 L1272.00 321.60 L1273.00 321.61 L1274.00 321.61 L1275.00 321.61 L1276.00 321.62 L1277.00 321.62 L1278.00 322.30 L1279.00 322.97 L1280.00 323.65 L1281.00 323.65 L1282.00 323.65 L1283.00 323.66 L1284.00 323.66 L1285.00 323.66 L1286.00 323.06 L1287.00 322.46 L1288.00 321.86 L1289.00 322.32 L1290.00 322.78 L1291.00 323.24 L1292.00 323.24 L1293.00 323.24 L1294.00 323.24 L1295.00 323.25 L1296.00 323.25 L1297.00 323.25 L1298.00 323.26 L1299.00 323.26 L1300.00 323.26 L1301.00 323.26 L1302.00 323.26 L1303.00 323.26 L1304.00 323.26 L1305.00 323.26 L1306.00 323.26 L1307.00 323.26 L1308.00 323.26 L1309.00 323.26 L1310.00 323.26 L1311.00 323.26 L1312.00 323.26 L1313.00 322.40 L1314.00 321.53 L1315.00 320.67 L1316.00 320.67 L1317.00 320.67 L1318.00 320.67 L1319.00 320.67 L1320.00 320.67 L1321.00 320.67 L1322.00 320.67 L1323.00 320.67 L1324.00 320.67 L1325.00 320.67 L1326.00 320.67 L1327.00 320.67 L1328.00 320.67 L1329.00 321.64 L1330.00 322.61 L1331.00 323.57 L1332.00 323.57 L1333.00 323.57 L1334.00 323.57 L1335.00 323.57 L1336.00 323.57 L1337.00 323.57 L1338.00 323.57 L1339.00 323.57 L1340.00 323.72 L1341.00 323.86 L1342.00 324.00 L1343.00 324.00 L1344.00 324.00 L1345.00 324.00 L1346.00 324.00 L1347.00 324.00 L1348.00 324.00 L1349.00 323.68 L1350.00 323.36 L1351.00 323.04 L1352.00 323.04 L1353.00 323.04 L1354.00 323.04 L1355.00 323.04 L1356.00 323.04 L1357.00 323.04 L1358.00 323.04 L1359.00 323.08 L1360.00 322.14 L1361.00 321.21 L1362.00 322.18 L1363.00 323.16 L1364.00 323.16 L1365.00 323.16 L1366.00 323.16 L1367.00 323.16 L1368.00 323.16 L1369.00 323.16 L1370.00 322.62 L1371.00 322.09 L1372.00 321.56 L1373.00 321.56 L1374.00 321.56 L1375.00 321.56 L1376.00 321.56 L1377.00 321.56 L1378.00 321.56 L1379.00 321.56 L1380.00 321.56 L1381.00 321.56 L1382.00 322.33 L1383.00 323.11 L1384.00 323.51 L1385.00 323.15 L1386.00 322.78 L1387.00 323.15 L1388.00 323.51 L1389.00 323.88 L1390.00 323.88 L1391.00 323.88 L1392.00 323.88 L1393.00 323.88 L1394.00 323.41 L1395.00 322.94 L1396.00 322.48 L1397.00 322.94 L1398.00 323.41 L1399.00 323.33 L1400.00 322.78 L1401.00 322.24 L1402.00 322.78 L1403.00 323.33 L1404.00 322.58 L1405.00 321.29 L1406.00 321.25 L1407.00 321.88 L1408.00 321.88 L1409.00 321.88 L1410.00 321.88 L1411.00 321.54 L1412.00 321.19 L1413.00 320.85 L1414.00 321.19 L1415.00 321.54 L1416.00 321.88 L1417.00 321.88 L1418.00 321.88 L1419.00 321.88 L1420.00 321.88 L1421.00 321.88 L1422.00 321.88 L1423.00 321.88 L1424.00 321.88 L1425.00 321.88 L1426.00 321.88 L1427.00 321.88 L1428.00 321.88 L1429.00 321.88 L1430.00 322.57 L1431.00 323.26 L1432.00 323.94 L1433.00 323.94 L1434.00 323.94 L1435.00 323.94 L1436.00 323.94 L1437.00 323.94 L1438.00 323.94 L1439.00 323.94 L1440.00 323.94 L1441.00 323.94 L1442.00 323.43 L1443.00 322.92 L1444.00 323.43 L1445.00 323.47 L1446.00 323.00 L1447.00 322.53 L1448.00 323.00 L1449.00 323.47 L1450.00 323.94 L1451.00 323.94 L1452.00 323.08 L1453.00 322.21 L1454.00 321.35 L1455.00 321.35 L1456.00 321.35 L1457.00 321.35 L1458.00 321.35 L1459.00 321.35 L1460.00 321.35 L1461.00 321.35 L1462.00 321.35 L1463.00 321.35 L1464.00 321.35 L1465.00 321.35 L1466.00 322.10 L1467.00 322.49 L1468.00 322.87 L1469.00 322.51 L1470.00 322.87 L1471.00 323.24 L1472.00 323.60 L1473.00 323.60 L1474.00 323.60 L1475.00 323.14 L1476.00 322.69 L1477.00 322.23 L1478.00 322.69 L1479.00 323.25 L1480.00 323.81 L1481.00 323.91 L1482.00 323.91 L1483.00 323.91 L1484.00 323.91 L1485.00 323.91 L1486.00 323.91 L1487.00 323.91 L1488.00 323.91 L1489.00 323.91 L1490.00 323.91 L1491.00 323.91 L1492.00 323.91 L1493.00 323.91 L1494.00 323.91 L1495.00 323.91 L1496.00 322.81 L1497.00 321.72 L1498.00 320.62 L1499.00 320.62 L1500.00 320.62 L1501.00 320.62 L1502.00 320.62 L1503.00 320.62 L1504.00 320.62 L1505.00 320.62 L1506.00 320.62 L1507.00 320.62 L1508.00 320.62 L1509.00 320.62 L1510.00 320.62 L1511.00 320.62 L1512.00 320.62 L1513.00 320.62 L1514.00 320.62 L1515.00 320.62 L1516.00 320.62 L1517.00 320.62 L1518.00 320.62 L1519.00 320.62 L1520.00 320.62 L1521.00 321.69 L1522.00 322.76 L1523.00 322.99 L1524.00 322.15 L1525.00 322.99 L1526.00 323.83 L1527.00 323.83 L1528.00 323.83 L1529.00 323.83 L1530.00 323.83 L1531.00 323.83 L1532.00 323.83 L1533.00 323.83 L1534.00 323.83 L1535.00 323.83 L1536.00 323.83 L1537.00 323.83 L1538.00 323.83 L1539.00 323.83 L1540.00 323.83 L1541.00 323.83 L1542.00 323.12 L1543.00 322.41 L1544.00 321.69 L1545.00 322.41 L1546.00 323.12 L1547.00 323.62 L1548.00 323.41 L1549.00 323.20 L1550.00 323.20 L1551.00 323.20 L1552.00 323.20 L1553.00 323.20 L1554.00 323.20 L1555.00 323.20 L1556.00 323.20 L1557.00 323.20 L1558.00 323.20 L1559.00 323.20 L1560.00 322.31 L1561.00 321.42 L1562.00 322.31 L1563.00 323.20 L1564.00 323.20 L1565.00 323.20 L1566.00 323.20 L1567.00 323.20 L1568.00 323.20 L1569.00 323.20 L1570.00 323.20 L1571.00 323.20 L1572.00 323.20 L1573.00 323.20 L1574.00 323.20 L1575.00 323.20 L1576.00 323.20 L1577.00 323.28 L1578.00 323.36 L1579.00 323.45 L1580.00 323.45 L1581.00 323.45 L1582.00 323.45 L1583.00 323.45 L1584.00 323.45 L1585.00 323.45 L1586.00 323.45 L1587.00 323.45 L1588.00 323.45 L1589.00 323.45 L1590.00 323.32 L1591.00 322.51 L1592.00 321.71 L1593.00 321.02 L1594.00 321.71 L1595.00 322.39 L1596.00 323.09 L1597.00 323.11 L1598.00 323.13 L1599.00 323.13 L1600.00 322.62 L1601.00 322.11 L1602.00 321.60 L1603.00 320.65 L1604.00 319.71 L1605.00 318.77 L1606.00 319.41 L1607.00 320.06 L1608.00 320.71 L1609.00 320.71 L1610.00 320.71 L1611.00 320.71 L1612.00 320.16 L1613.00 319.60 L1614.00 319.05 L1615.00 319.24 L1616.00 319.43 L1617.00 319.62 L1618.00 319.98 L1619.00 320.34 L1620.00 320.71 L1621.00 320.71 L1622.00 320.71 L1623.00 320.71 L1624.00 320.71 L1625.00 321.61 L1626.00 322.51 L1627.00 323.41 L1628.00 323.41 L1629.00 323.41 L1630.00 323.41 L1631.00 323.41 L1632.00 323.41 L1633.00 323.41 L1634.00 323.41 L1635.00 323.41 L1636.00 323.41 L1637.00 323.41 L1638.00 323.41 L1639.00 323.41 L1640.00 323.41 L1641.00 323.41 L1642.00 322.86 L1643.00 322.31 L1644.00 321.76 L1645.00 321.76 L1646.00 321.76 L1647.00 321.34 L1648.00 320.92 L1649.00 320.51 L1650.00 320.92 L1651.00 321.18 L1652.00 321.43 L1653.00 321.27 L1654.00 321.27 L1655.00 321.27 L1656.00 321.27 L1657.00 322.16 L1658.00 322.45 L1659.00 322.73 L1660.00 323.35 L1661.00 323.96 L1662.00 323.96 L1663.00 323.96 L1664.00 323.96 L1665.00 323.96 L1666.00 323.96 L1667.00 323.96 L1668.00 323.96 L1669.00 323.96 L1670.00 323.96 L1671.00 323.96 L1672.00 323.96 L1673.00 323.96 L1674.00 323.96 L1675.00 323.96 L1676.00 323.96 L1677.00 323.96 L1678.00 323.96 L1679.00 323.96 L1680.00 323.09 L1681.00 322.21 L1682.00 321.33 L1683.00 321.33 L1684.00 321.33 L1685.00 321.33 L1686.00 321.33 L1687.00 321.33 L1688.00 321.33 L1689.00 321.33 L1690.00 321.33 L1691.00 321.33 L1692.00 321.33 L1693.00 321.33 L1694.00 321.33 L1695.00 321.33 L1696.00 321.33 L1697.00 321.33 L1698.00 321.33 L1699.00 321.33 L1700.00 321.33 L1701.00 321.33 L1702.00 321.33 L1703.00 322.17 L1704.00 323.00 L1705.00 323.84 L1706.00 323.84 L1707.00 323.84 L1708.00 323.84 L1709.00 323.84 L1710.00 323.84 L1711.00 323.84 L1712.00 323.84 L1713.00 323.84 L1714.00 323.84 L1715.00 323.84 L1716.00 323.84 L1717.00 323.84 L1718.00 322.54 L1719.00 321.24 L1720.00 321.15 L1721.00 321.76 L1722.00 321.76 L1723.00 321.76 L1724.00 321.76 L1725.00 321.76 L1726.00 321.76 L1727.00 322.49 L1728.00 323.22 L1729.00 323.95 L1730.00 323.95 L1731.00 323.95 L1732.00 323.95 L1733.00 323.95 L1734.00 323.95 L1735.00 323.95 L1736.00 323.95 L1737.00 323.95 L1738.00 323.95 L1739.00 323.95 L1740.00 323.95 L1741.00 323.95 L1742.00 323.95 L1743.00 323.95 L1744.00 323.95 L1745.00 323.95 L1746.00 323.95 L1747.00 323.95 L1748.00 323.95 L1749.00 323.95 L1750.00 323.95 L1751.00 323.95 L1752.00 323.95 L1753.00 323.39 L1754.00 322.84 L1755.00 322.29 L1756.00 322.64 L1757.00 322.99 L1758.00 323.35 L1759.00 323.35 L1760.00 323.35 L1761.00 323.35 L1762.00 323.35 L1763.00 323.35 L1764.00 323.35 L1765.00 323.35 L1766.00 323.35 L1767.00 323.35 L1768.00 323.35 L1769.00 323.35 L1770.00 323.35 L1771.00 323.35 L1772.00 323.35 L1773.00 323.35 L1774.00 323.35 L1775.00 323.29 L1776.00 323.24 L1777.00 323.19 L1778.00 323.19 L1779.00 323.19 L1780.00 322.55 L1781.00 321.91 L1782.00 321.26 L1783.00 321.26 L1784.00 321.26 L1785.00 321.26 L1786.00 321.26 L1787.00 321.26 L1788.00 321.26 L1789.00 321.26 L1790.00 321.26 L1791.00 321.26 L1792.00 321.26 L1793.00 321.26 L1794.00 321.26 L1795.00 321.26 L1796.00 321.26 L1797.00 321.26 L1798.00 321.26 L1799.00 321.26 L1800.00 320.67 L1801.00 320.08 L1802.00 319.48 L1803.00 320.08 L1804.00 320.67 L1805.00 322.08 L1806.00 322.90 L1807.00 323.71 L1808.00 323.71 L1809.00 323.71 L1810.00 323.71 L1811.00 323.71 L1812.00 323.71 L1813.00 323.71 L1814.00 323.71 L1815.00 323.71 L1816.00 323.71 L1817.00 323.71 L1818.00 323.71 L1819.00 323.71 L1820.00 323.71 L1821.00 323.71 L1822.00 323.71 L1823.00 323.71 L1824.00 323.53 L1825.00 323.35 L1826.00 323.17 L1827.00 323.17 L1828.00 323.17 L1829.00 322.75 L1830.00 322.33 L1831.00 321.90 L1832.00 321.90 L1833.00 321.90 L1834.00 321.90 L1835.00 321.90 L1836.00 322.60 L1837.00 323.30 L1838.00 324.00 L1839.00 324.00 L1840.00 324.00 L1841.00 324.00 L1842.00 324.00 L1843.00 324.00 L1844.00 324.00 L1845.00 324.00 L1846.00 324.00 L1847.00 324.00 L1848.00 324.00 L1849.00 324.00 L1850.00 324.00 L1851.00 323.31 L1852.00 322.63 L1853.00 321.94 L1854.00 322.63 L1855.00 323.31 L1856.00 324.00 L1857.00 324.00 L1858.00 324.00 L1859.00 324.00 L1860.00 324.00 L1861.00 324.00 L1862.00 323.97 L1863.00 323.94 L1864.00 323.91 L1865.00 323.91 L1866.00 323.91 L1867.00 323.91 L1868.00 323.91 L1869.00 323.91 L1870.00 323.91 L1871.00 323.91 L1872.00 323.91 L1873.00 323.91 L1874.00 323.35 L1875.00 322.79 L1876.00 321.29 L1877.00 320.91 L1878.00 320.53 L1879.00 321.09 L1880.00 321.09 L1881.00 321.09 L1882.00 321.09 L1883.00 321.09 L1884.00 321.09 L1885.00 321.09 L1886.00 321.09 L1887.00 321.09 L1888.00 321.09 L1889.00 321.09 L1890.00 321.09 L1891.00 321.09 L1892.00 321.09 L1893.00 321.09 L1894.00 321.99 L1895.00 322.89 L1896.00 323.78 L1897.00 323.78 L1898.00 323.78 L1899.00 323.78 L1900.00 323.78 L1901.00 323.78 L1902.00 323.78 L1903.00 323.78 L1904.00 323.78 L1905.00 323.78 L1906.00 323.78 L1907.00 323.78 L1908.00 323.78 L1909.00 323.84 L1910.00 323.90 L1911.00 323.95 L1912.00 323.58 L1913.00 323.20 L1914.00 322.83 L1915.00 323.20 L1916.00 323.58 L1917.00 323.95 L1918.00 323.95 L1919.00 323.95 L1920.00 323.95 L1921.00 323.95 L1922.00 323.95 L1923.00 323.95 L1924.00 323.95 L1925.00 323.95 L1926.00 323.71 L1927.00 323.47 L1928.00 323.23 L1929.00 323.23 L1930.00 323.23 L1931.00 323.23 L1932.00 323.23 L1933.00 323.23 L1934.00 323.23 L1935.00 323.23 L1936.00 323.23 L1937.00 323.23 L1938.00 323.23 L1939.00 323.23 L1940.00 323.23 L1941.00 323.23 L1942.00 322.67 L1943.00 322.10 L1944.00 322.67 L1945.00 323.23 L1946.00 323.23 L1947.00 323.23 L1948.00 323.23 L1949.00 323.23 L1950.00 323.23 L1951.00 322.68 L1952.00 322.34 L1953.00 323.11 L1954.00 323.89 L1955.00 323.89 L1956.00 323.89 L1957.00 323.89 L1958.00 323.89 L1959.00 323.89 L1960.00 323.89 L1961.00 323.89 L1962.00 323.89 L1963.00 323.89 L1964.00 323.89 L1965.00 323.89 L1966.00 323.89 L1967.00 323.15 L1968.00 322.42 L1969.00 323.15 L1970.00 323.89 L1971.00 323.89 L1972.00 323.89 L1973.00 323.89 L1974.00 322.95 L1975.00 322.02 L1976.00 321.09 L1977.00 321.09 L1978.00 321.09 L1979.00 321.09 L1980.00 321.09 L1981.00 321.09 L1982.00 321.09 L1983.00 321.09 L1984.00 321.09 L1985.00 321.09 L1986.00 320.37 L1987.00 319.66 L1988.00 319.93 L1989.00 320.20 L1990.00 319.75 L1991.00 320.20 L1992.00 320.64 L1993.00 321.09 L1994.00 321.09 L1995.00 321.09 L1996.00 321.09 L1997.00 321.09 L1998.00 321.09 L1999.00 321.77 L2000.00 322.46 L2001.00 323.14 L2002.00 323.14 L2003.00 323.14 L2004.00 323.14 L2005.00 323.14 L2006.00 323.14 L2007.00 323.14 L2008.00 323.14 L2009.00 323.14 L2010.00 323.14 L2011.00 323.14 L2011.00 331.95 L2010.00 331.95 L2009.00 331.95 L2008.00 331.95 L2007.00 331.95 L2006.00 331.95 L2005.00 332.33 L2004.00 333.38 L2003.00 334.43 L2002.00 334.71 L2001.00 334.33 L2000.00 333.95 L1999.00 333.95 L1998.00 334.19 L1997.00 334.42 L1996.00 334.66 L1995.00 334.66 L1994.00 334.66 L1993.00 334.66 L1992.00 334.66 L1991.00 334.66 L1990.00 334.66 L1989.00 334.66 L1988.00 334.66 L1987.00 334.66 L1986.00 334.66 L1985.00 334.66 L1984.00 334.66 L1983.00 334.66 L1982.00 333.88 L1981.00 333.10 L1980.00 332.32 L1979.00 332.32 L1978.00 332.32 L1977.00 332.32 L1976.00 332.32 L1975.00 332.32 L1974.00 332.32 L1973.00 332.32 L1972.00 332.32 L1971.00 332.32 L1970.00 332.32 L1969.00 332.32 L1968.00 332.32 L1967.00 332.32 L1966.00 332.32 L1965.00 332.32 L1964.00 332.06 L1963.00 331.79 L1962.00 331.53 L1961.00 331.53 L1960.00 331.53 L1959.00 331.53 L1958.00 331.53 L1957.00 331.53 L1956.00 331.53 L1955.00 331.53 L1954.00 331.53 L1953.00 331.53 L1952.00 331.53 L1951.00 331.53 L1950.00 331.53 L1949.00 331.53 L1948.00 331.53 L1947.00 331.53 L1946.00 331.53 L1945.00 331.53 L1944.00 331.53 L1943.00 331.53 L1942.00 331.53 L1941.00 331.53 L1940.00 331.53 L1939.00 331.53 L1938.00 331.53 L1937.00 332.20 L1936.00 333.12 L1935.00 334.05 L1934.00 333.62 L1933.00 332.95 L1932.00 332.28 L1931.00 332.28 L1930.00 332.28 L1929.00 332.28 L1928.00 332.28 L1927.00 332.28 L1926.00 332.28 L1925.00 332.28 L1924.00 332.28 L1923.00 332.28 L1922.00 332.28 L1921.00 332.28 L1920.00 332.28 L1919.00 332.28 L1918.00 332.28 L1917.00 332.26 L1916.00 332.24 L1915.00 332.22 L1914.00 332.22 L1913.00 332.22 L1912.00 332.22 L1911.00 332.22 L1910.00 332.22 L1909.00 332.22 L1908.00 332.22 L1907.00 332.22 L1906.00 332.22 L1905.00 332.22 L1904.00 332.22 L1903.00 332.22 L1902.00 332.22 L1901.00 332.22 L1900.00 332.22 L1899.00 332.22 L1898.00 332.22 L1897.00 332.22 L1896.00 332.22 L1895.00 332.22 L1894.00 332.22 L1893.00 332.22 L1892.00 332.22 L1891.00 332.22 L1890.00 332.22 L1889.00 332.22 L1888.00 332.22 L1887.00 332.96 L1886.00 333.69 L1885.00 334.42 L1884.00 334.42 L1883.00 335.18 L1882.00 335.94 L1881.00 335.18 L1880.00 334.42 L1879.00 334.42 L1878.00 334.42 L1877.00 334.42 L1876.00 334.42 L1875.00 333.55 L1874.00 332.68 L1873.00 331.81 L1872.00 331.81 L1871.00 331.81 L1870.00 331.81 L1869.00 331.81 L1868.00 331.81 L1867.00 331.81 L1866.00 331.81 L1865.00 331.81 L1864.00 331.81 L1863.00 331.81 L1862.00 331.81 L1861.00 331.81 L1860.00 331.81 L1859.00 331.81 L1858.00 331.81 L1857.00 331.81 L1856.00 331.81 L1855.00 331.81 L1854.00 331.81 L1853.00 331.81 L1852.00 331.81 L1851.00 331.74 L1850.00 331.68 L1849.00 331.61 L1848.00 331.61 L1847.00 331.61 L1846.00 331.61 L1845.00 331.61 L1844.00 331.61 L1843.00 331.61 L1842.00 331.61 L1841.00 332.41 L1840.00 333.55 L1839.00 333.11 L1838.00 332.66 L1837.00 332.66 L1836.00 332.66 L1835.00 332.66 L1834.00 332.66 L1833.00 332.66 L1832.00 332.66 L1831.00 333.02 L1830.00 333.38 L1829.00 333.74 L1828.00 333.38 L1827.00 333.02 L1826.00 332.66 L1825.00 332.66 L1824.00 332.66 L1823.00 332.66 L1822.00 332.66 L1821.00 332.66 L1820.00 332.66 L1819.00 332.66 L1818.00 332.66 L1817.00 332.66 L1816.00 332.66 L1815.00 332.66 L1814.00 332.44 L1813.00 332.22 L1812.00 332.40 L1811.00 332.81 L1810.00 333.21 L1809.00 332.81 L1808.00 333.31 L1807.00 333.80 L1806.00 334.70 L1805.00 334.70 L1804.00 334.70 L1803.00 334.70 L1802.00 334.70 L1801.00 334.70 L1800.00 334.70 L1799.00 334.70 L1798.00 333.72 L1797.00 332.75 L1796.00 331.77 L1795.00 331.77 L1794.00 332.45 L1793.00 333.14 L1792.00 333.82 L1791.00 333.82 L1790.00 333.82 L1789.00 333.82 L1788.00 333.82 L1787.00 333.82 L1786.00 333.82 L1785.00 334.83 L1784.00 335.83 L1783.00 334.83 L1782.00 333.82 L1781.00 333.82 L1780.00 334.01 L1779.00 334.19 L1778.00 334.38 L1777.00 334.38 L1776.00 334.38 L1775.00 334.38 L1774.00 334.38 L1773.00 334.99 L1772.00 335.60 L1771.00 336.21 L1770.00 335.60 L1769.00 334.99 L1768.00 334.38 L1767.00 334.38 L1766.00 334.38 L1765.00 334.38 L1764.00 334.38 L1763.00 334.38 L1762.00 334.38 L1761.00 334.38 L1760.00 334.38 L1759.00 334.38 L1758.00 333.51 L1757.00 332.65 L1756.00 331.79 L1755.00 331.79 L1754.00 331.79 L1753.00 331.79 L1752.00 331.79 L1751.00 331.79 L1750.00 331.79 L1749.00 331.79 L1748.00 331.79 L1747.00 331.79 L1746.00 331.79 L1745.00 331.79 L1744.00 331.79 L1743.00 331.79 L1742.00 332.99 L1741.00 334.18 L1740.00 335.38 L1739.00 334.99 L1738.00 334.59 L1737.00 334.20 L1736.00 334.20 L1735.00 334.20 L1734.00 335.13 L1733.00 336.06 L1732.00 335.13 L1731.00 334.20 L1730.00 334.20 L1729.00 334.20 L1728.00 334.20 L1727.00 334.20 L1726.00 334.20 L1725.00 334.20 L1724.00 334.20 L1723.00 334.20 L1722.00 334.20 L1721.00 334.20 L1720.00 334.20 L1719.00 334.20 L1718.00 334.20 L1717.00 334.21 L1716.00 334.22 L1715.00 334.23 L1714.00 334.23 L1713.00 334.23 L1712.00 334.23 L1711.00 334.23 L1710.00 334.75 L1709.00 335.26 L1708.00 334.75 L1707.00 334.23 L1706.00 334.23 L1705.00 334.23 L1704.00 334.23 L1703.00 334.23 L1702.00 334.23 L1701.00 334.23 L1700.00 334.23 L1699.00 334.23 L1698.00 334.23 L1697.00 334.23 L1696.00 334.23 L1695.00 333.61 L1694.00 332.99 L1693.00 332.37 L1692.00 332.37 L1691.00 332.37 L1690.00 332.37 L1689.00 332.37 L1688.00 332.37 L1687.00 333.88 L1686.00 335.90 L1685.00 335.81 L1684.00 335.25 L1683.00 334.74 L1682.00 334.23 L1681.00 333.72 L1680.00 333.72 L1679.00 333.72 L1678.00 333.72 L1677.00 333.72 L1676.00 333.72 L1675.00 333.72 L1674.00 333.72 L1673.00 333.72 L1672.00 333.72 L1671.00 333.72 L1670.00 333.72 L1669.00 333.72 L1668.00 334.10 L1667.00 334.48 L1666.00 334.86 L1665.00 334.86 L1664.00 334.86 L1663.00 334.86 L1662.00 334.86 L1661.00 334.86 L1660.00 334.57 L1659.00 334.28 L1658.00 334.00 L1657.00 334.00 L1656.00 334.00 L1655.00 334.00 L1654.00 334.00 L1653.00 334.00 L1652.00 334.00 L1651.00 334.00 L1650.00 334.00 L1649.00 334.00 L1648.00 334.00 L1647.00 334.00 L1646.00 334.00 L1645.00 334.00 L1644.00 334.09 L1643.00 334.19 L1642.00 334.28 L1641.00 334.28 L1640.00 334.28 L1639.00 334.28 L1638.00 333.40 L1637.00 332.51 L1636.00 331.63 L1635.00 331.63 L1634.00 331.63 L1633.00 331.63 L1632.00 331.63 L1631.00 331.63 L1630.00 331.63 L1629.00 331.63 L1628.00 331.63 L1627.00 331.63 L1626.00 331.63 L1625.00 331.63 L1624.00 331.63 L1623.00 331.63 L1622.00 331.63 L1621.00 331.63 L1620.00 331.63 L1619.00 331.63 L1618.00 331.63 L1617.00 331.63 L1616.00 331.63 L1615.00 331.63 L1614.00 331.63 L1613.00 331.63 L1612.00 331.63 L1611.00 331.63 L1610.00 331.64 L1609.00 331.64 L1608.00 331.65 L1607.00 331.65 L1606.00 331.65 L1605.00 331.65 L1604.00 331.65 L1603.00 331.65 L1602.00 331.65 L1601.00 331.65 L1600.00 331.65 L1599.00 331.65 L1598.00 332.01 L1597.00 332.38 L1596.00 332.74 L1595.00 332.38 L1594.00 332.01 L1593.00 331.65 L1592.00 331.65 L1591.00 331.65 L1590.00 331.65 L1589.00 331.65 L1588.00 332.03 L1587.00 332.40 L1586.00 332.78 L1585.00 332.38 L1584.00 331.99 L1583.00 331.60 L1582.00 331.60 L1581.00 331.60 L1580.00 331.60 L1579.00 331.60 L1578.00 331.60 L1577.00 331.60 L1576.00 331.60 L1575.00 331.60 L1574.00 331.60 L1573.00 331.60 L1572.00 331.60 L1571.00 331.60 L1570.00 331.60 L1569.00 332.17 L1568.00 332.73 L1567.00 333.30 L1566.00 332.73 L1565.00 332.17 L1564.00 332.40 L1563.00 333.21 L1562.00 333.48 L1561.00 333.75 L1560.00 334.83 L1559.00 334.83 L1558.00 334.83 L1557.00 334.83 L1556.00 334.83 L1555.00 334.83 L1554.00 334.83 L1553.00 334.83 L1552.00 334.83 L1551.00 334.83 L1550.00 334.83 L1549.00 334.83 L1548.00 334.83 L1547.00 333.93 L1546.00 333.04 L1545.00 332.15 L1544.00 332.15 L1543.00 332.15 L1542.00 332.15 L1541.00 332.15 L1540.00 332.15 L1539.00 332.15 L1538.00 332.15 L1537.00 332.15 L1536.00 332.15 L1535.00 332.15 L1534.00 332.15 L1533.00 332.15 L1532.00 332.15 L1531.00 332.15 L1530.00 332.15 L1529.00 332.15 L1528.00 332.15 L1527.00 332.15 L1526.00 332.15 L1525.00 332.15 L1524.00 332.06 L1523.00 331.97 L1522.00 331.88 L1521.00 331.88 L1520.00 331.88 L1519.00 331.88 L1518.00 331.88 L1517.00 331.88 L1516.00 332.49 L1515.00 333.09 L1514.00 333.70 L1513.00 333.21 L1512.00 332.72 L1511.00 332.22 L1510.00 332.22 L1509.00 332.22 L1508.00 332.22 L1507.00 332.82 L1506.00 333.42 L1505.00 334.03 L1504.00 334.03 L1503.00 334.03 L1502.00 334.03 L1501.00 334.03 L1500.00 334.03 L1499.00 334.68 L1498.00 335.33 L1497.00 335.99 L1496.00 335.33 L1495.00 334.68 L1494.00 334.27 L1493.00 334.52 L1492.00 334.77 L1491.00 334.77 L1490.00 334.77 L1489.00 334.77 L1488.00 334.77 L1487.00 333.94 L1486.00 333.12 L1485.00 332.30 L1484.00 332.30 L1483.00 332.30 L1482.00 332.30 L1481.00 332.30 L1480.00 332.30 L1479.00 332.30 L1478.00 332.30 L1477.00 332.30 L1476.00 332.30 L1475.00 332.30 L1474.00 332.30 L1473.00 332.24 L1472.00 332.17 L1471.00 332.11 L1470.00 332.11 L1469.00 332.11 L1468.00 332.11 L1467.00 332.11 L1466.00 332.23 L1465.00 332.35 L1464.00 332.47 L1463.00 332.47 L1462.00 332.47 L1461.00 332.47 L1460.00 332.47 L1459.00 332.47 L1458.00 332.47 L1457.00 332.47 L1456.00 332.47 L1455.00 332.47 L1454.00 332.47 L1453.00 332.47 L1452.00 332.47 L1451.00 332.23 L1450.00 331.98 L1449.00 331.74 L1448.00 331.74 L1447.00 331.74 L1446.00 331.74 L1445.00 331.74 L1444.00 331.74 L1443.00 331.74 L1442.00 331.74 L1441.00 331.74 L1440.00 331.74 L1439.00 331.74 L1438.00 331.74 L1437.00 331.74 L1436.00 331.74 L1435.00 331.74 L1434.00 331.74 L1433.00 331.74 L1432.00 331.74 L1431.00 331.74 L1430.00 331.74 L1429.00 331.74 L1428.00 331.74 L1427.00 331.74 L1426.00 331.74 L1425.00 332.46 L1424.00 333.19 L1423.00 333.92 L1422.00 334.37 L1421.00 334.83 L1420.00 335.29 L1419.00 334.83 L1418.00 334.37 L1417.00 333.92 L1416.00 333.92 L1415.00 333.92 L1414.00 333.92 L1413.00 334.62 L1412.00 335.32 L1411.00 336.02 L1410.00 335.32 L1409.00 334.62 L1408.00 333.92 L1407.00 333.92 L1406.00 333.92 L1405.00 333.92 L1404.00 333.39 L1403.00 332.86 L1402.00 332.34 L1401.00 332.34 L1400.00 332.34 L1399.00 332.34 L1398.00 332.34 L1397.00 332.34 L1396.00 332.34 L1395.00 332.34 L1394.00 332.40 L1393.00 332.47 L1392.00 332.53 L1391.00 332.53 L1390.00 332.53 L1389.00 333.14 L1388.00 333.76 L1387.00 333.71 L1386.00 333.66 L1385.00 334.22 L1384.00 334.22 L1383.00 334.22 L1382.00 334.22 L1381.00 334.22 L1380.00 334.22 L1379.00 334.22 L1378.00 334.22 L1377.00 334.22 L1376.00 334.22 L1375.00 334.22 L1374.00 334.22 L1373.00 334.77 L1372.00 335.31 L1371.00 334.77 L1370.00 334.22 L1369.00 334.22 L1368.00 334.22 L1367.00 334.22 L1366.00 334.22 L1365.00 334.22 L1364.00 334.22 L1363.00 333.44 L1362.00 332.67 L1361.00 331.90 L1360.00 331.90 L1359.00 331.90 L1358.00 331.90 L1357.00 331.90 L1356.00 331.90 L1355.00 331.90 L1354.00 331.90 L1353.00 331.90 L1352.00 331.90 L1351.00 331.90 L1350.00 331.90 L1349.00 331.90 L1348.00 332.49 L1347.00 333.08 L1346.00 333.67 L1345.00 333.67 L1344.00 333.67 L1343.00 333.67 L1342.00 333.67 L1341.00 333.67 L1340.00 333.67 L1339.00 333.67 L1338.00 333.67 L1337.00 333.67 L1336.00 333.67 L1335.00 333.67 L1334.00 333.67 L1333.00 333.76 L1332.00 333.85 L1331.00 333.94 L1330.00 333.94 L1329.00 333.94 L1328.00 333.94 L1327.00 333.40 L1326.00 332.85 L1325.00 332.30 L1324.00 332.65 L1323.00 332.99 L1322.00 333.34 L1321.00 333.04 L1320.00 332.75 L1319.00 332.45 L1318.00 332.45 L1317.00 332.45 L1316.00 332.45 L1315.00 332.45 L1314.00 332.45 L1313.00 332.45 L1312.00 332.45 L1311.00 332.45 L1310.00 332.45 L1309.00 332.45 L1308.00 333.12 L1307.00 333.55 L1306.00 333.99 L1305.00 333.08 L1304.00 332.41 L1303.00 331.74 L1302.00 331.74 L1301.00 331.74 L1300.00 331.74 L1299.00 331.70 L1298.00 331.66 L1297.00 331.62 L1296.00 331.62 L1295.00 331.62 L1294.00 331.61 L1293.00 331.61 L1292.00 331.61 L1291.00 331.60 L1290.00 331.60 L1289.00 331.60 L1288.00 331.60 L1287.00 331.59 L1286.00 331.59 L1285.00 331.59 L1284.00 331.58 L1283.00 331.58 L1282.00 331.58 L1281.00 331.57 L1280.00 331.57 L1279.00 332.57 L1278.00 333.56 L1277.00 334.56 L1276.00 334.55 L1275.00 334.55 L1274.00 334.55 L1273.00 334.55 L1272.00 334.54 L1271.00 334.54 L1270.00 334.54 L1269.00 334.53 L1268.00 334.53 L1267.00 334.53 L1266.00 334.52 L1265.00 334.52 L1264.00 334.52 L1263.00 334.52 L1262.00 334.51 L1261.00 334.51 L1260.00 334.51 L1259.00 334.50 L1258.00 334.50 L1257.00 334.50 L1256.00 334.49 L1255.00 334.49 L1254.00 334.49 L1253.00 334.24 L1252.00 333.99 L1251.00 333.74 L1250.00 333.73 L1249.00 333.73 L1248.00 333.73 L1247.00 333.72 L1246.00 333.72 L1245.00 333.72 L1244.00 333.71 L1243.00 333.71 L1242.00 333.71 L1241.00 333.71 L1240.00 333.70 L1239.00 333.70 L1238.00 333.70 L1237.00 333.69 L1236.00 333.69 L1235.00 333.69 L1234.00 333.68 L1233.00 333.68 L1232.00 333.68 L1231.00 333.68 L1230.00 333.67 L1229.00 333.67 L1228.00 333.67 L1227.00 332.97 L1226.00 332.27 L1225.00 331.91 L1224.00 332.24 L1223.00 332.58 L1222.00 332.24 L1221.00 331.89 L1220.00 331.55 L1219.00 331.55 L1218.00 331.54 L1217.00 331.54 L1216.00 331.54 L1215.00 331.53 L1214.00 331.53 L1213.00 331.53 L1212.00 331.53 L1211.00 331.52 L1210.00 331.52 L1209.00 331.52 L1208.00 331.51 L1207.00 331.51 L1206.00 331.51 L1205.00 332.20 L1204.00 332.89 L1203.00 333.58 L1202.00 333.57 L1201.00 333.57 L1200.00 333.57 L1199.00 333.57 L1198.00 333.56 L1197.00 332.89 L1196.00 332.80 L1195.00 332.72 L1194.00 333.30 L1193.00 332.71 L1192.00 332.12 L1191.00 331.52 L1190.00 331.52 L1189.00 331.52 L1188.00 331.51 L1187.00 331.51 L1186.00 332.01 L1185.00 332.50 L1184.00 333.00 L1183.00 332.50 L1182.00 332.00 L1181.00 332.20 L1180.00 332.91 L1179.00 332.20 L1178.00 331.48 L1177.00 331.59 L1176.00 331.69 L1175.00 331.79 L1174.00 331.79 L1173.00 331.78 L1172.00 331.78 L1171.00 331.78 L1170.00 331.78 L1169.00 331.77 L1168.00 331.77 L1167.00 331.77 L1166.00 331.76 L1165.00 331.76 L1164.00 331.76 L1163.00 331.75 L1162.00 331.75 L1161.00 331.75 L1160.00 331.75 L1159.00 331.74 L1158.00 332.26 L1157.00 332.78 L1156.00 333.30 L1155.00 333.30 L1154.00 333.29 L1153.00 333.29 L1152.00 333.29 L1151.00 333.28 L1150.00 333.28 L1149.00 333.28 L1148.00 333.28 L1147.00 333.27 L1146.00 333.27 L1145.00 333.38 L1144.00 333.50 L1143.00 333.61 L1142.00 333.61 L1141.00 334.46 L1140.00 335.31 L1139.00 334.45 L1138.00 333.59 L1137.00 333.85 L1136.00 334.11 L1135.00 334.38 L1134.00 334.94 L1133.00 335.51 L1132.00 334.94 L1131.00 334.36 L1130.00 334.36 L1129.00 334.36 L1128.00 334.02 L1127.00 333.68 L1126.00 333.34 L1125.00 333.36 L1124.00 333.38 L1123.00 332.08 L1122.00 331.41 L1121.00 331.41 L1120.00 331.41 L1119.00 331.40 L1118.00 331.40 L1117.00 331.40 L1116.00 331.40 L1115.00 331.39 L1114.00 331.39 L1113.00 331.31 L1112.00 331.22 L1111.00 331.14 L1110.00 331.14 L1109.00 331.13 L1108.00 331.13 L1107.00 331.13 L1106.00 331.12 L1105.00 331.12 L1104.00 331.12 L1103.00 331.62 L1102.00 332.12 L1101.00 332.62 L1100.00 332.11 L1099.00 331.60 L1098.00 331.10 L1097.00 331.09 L1096.00 331.09 L1095.00 331.08 L1094.00 331.08 L1093.00 331.07 L1092.00 331.07 L1091.00 331.06 L1090.00 331.06 L1089.00 331.05 L1088.00 331.05 L1087.00 331.04 L1086.00 331.04 L1085.00 331.03 L1084.00 331.03 L1083.00 331.96 L1082.00 332.89 L1081.00 333.82 L1080.00 333.81 L1079.00 333.81 L1078.00 333.80 L1077.00 334.16 L1076.00 334.52 L1075.00 334.87 L1074.00 334.51 L1073.00 334.14 L1072.00 333.77 L1071.00 333.77 L1070.00 333.76 L1069.00 333.76 L1068.00 333.75 L1067.00 333.75 L1066.00 333.74 L1065.00 333.74 L1064.00 333.73 L1063.00 333.73 L1062.00 333.86 L1061.00 333.99 L1060.00 334.12 L1059.00 334.12 L1058.00 334.11 L1057.00 334.11 L1056.00 334.10 L1055.00 334.10 L1054.00 334.09 L1053.00 334.08 L1052.00 334.08 L1051.00 334.07 L1050.00 334.07 L1049.00 333.99 L1048.00 333.91 L1047.00 333.83 L1046.00 333.83 L1045.00 333.82 L1044.00 333.82 L1043.00 333.81 L1042.00 333.81 L1041.00 333.80 L1040.00 333.80 L1039.00 333.79 L1038.00 333.79 L1037.00 333.78 L1036.00 334.19 L1035.00 334.59 L1034.00 335.00 L1033.00 334.58 L1032.00 334.17 L1031.00 333.75 L1030.00 333.75 L1029.00 333.49 L1028.00 333.23 L1027.00 332.97 L1026.00 332.97 L1025.00 332.96 L1024.00 332.96 L1023.00 332.17 L1022.00 331.37 L1021.00 330.56 L1020.00 330.54 L1019.00 331.04 L1018.00 331.53 L1017.00 332.18 L1016.00 331.77 L1015.00 331.37 L1014.00 330.83 L1013.00 330.80 L1012.00 330.78 L1011.00 330.75 L1010.00 330.73 L1009.00 330.58 L1008.00 330.44 L1007.00 330.30 L1006.00 330.27 L1005.00 330.25 L1004.00 330.22 L1003.00 330.20 L1002.00 330.17 L1001.00 330.15 L1000.00 330.12 L999.00 330.10 L998.00 330.07 L997.00 330.05 L996.00 330.03 L995.00 330.00 L994.00 329.98 L993.00 329.95 L992.00 329.93 L991.00 329.90 L990.00 329.88 L989.00 330.51 L988.00 331.27 L987.00 330.71 L986.00 330.16 L985.00 330.13 L984.00 330.11 L983.00 330.08 L982.00 330.06 L981.00 330.04 L980.00 330.01 L979.00 329.99 L978.00 329.96 L977.00 329.94 L976.00 329.91 L975.00 329.71 L974.00 329.51 L973.00 329.31 L972.00 329.28 L971.00 329.26 L970.00 329.23 L969.00 329.21 L968.00 329.18 L967.00 329.16 L966.00 329.13 L965.00 329.11 L964.00 329.07 L963.00 329.03 L962.00 328.99 L961.00 328.95 L960.00 328.91 L959.00 329.77 L958.00 330.63 L957.00 330.07 L956.00 329.31 L955.00 329.28 L954.00 329.24 L953.00 329.20 L952.00 329.16 L951.00 329.12 L950.00 329.08 L949.00 329.04 L948.00 329.00 L947.00 328.96 L946.00 328.92 L945.00 328.88 L944.00 328.84 L943.00 328.80 L942.00 328.76 L941.00 328.72 L940.00 328.68 L939.00 328.64 L938.00 328.60 L937.00 328.41 L936.00 328.21 L935.00 328.01 L934.00 327.97 L933.00 329.01 L932.00 330.05 L931.00 331.09 L930.00 331.05 L929.00 331.01 L928.00 330.97 L927.00 330.93 L926.00 330.83 L925.00 330.73 L924.00 330.63 L923.00 330.59 L922.00 330.55 L921.00 330.52 L920.00 330.49 L919.00 330.47 L918.00 330.44 L917.00 330.41 L916.00 330.38 L915.00 330.35 L914.00 330.32 L913.00 330.29 L912.00 330.27 L911.00 330.24 L910.00 329.50 L909.00 328.75 L908.00 328.01 L907.00 327.98 L906.00 327.95 L905.00 327.93 L904.00 327.90 L903.00 327.87 L902.00 327.84 L901.00 327.81 L900.00 327.78 L899.00 327.75 L898.00 327.73 L897.00 327.70 L896.00 327.67 L895.00 327.64 L894.00 327.61 L893.00 327.58 L892.00 327.55 L891.00 327.53 L890.00 327.50 L889.00 327.47 L888.00 327.44 L887.00 327.41 L886.00 327.89 L885.00 328.37 L884.00 328.85 L883.00 328.82 L882.00 328.79 L881.00 328.76 L880.00 328.18 L879.00 327.71 L878.00 327.24 L877.00 327.31 L876.00 327.39 L875.00 327.47 L874.00 327.54 L873.00 327.62 L872.00 327.70 L871.00 327.77 L870.00 327.85 L869.00 327.93 L868.00 328.00 L867.00 328.08 L866.00 328.16 L865.00 328.23 L864.00 328.31 L863.00 328.39 L862.00 328.47 L861.00 328.54 L860.00 328.62 L859.00 328.70 L858.00 328.77 L857.00 328.85 L856.00 328.93 L855.00 329.00 L854.00 329.08 L853.00 329.16 L852.00 329.23 L851.00 329.88 L850.00 330.53 L849.00 331.17 L848.00 331.25 L847.00 331.33 L846.00 331.40 L845.00 331.48 L844.00 331.56 L843.00 331.63 L842.00 331.71 L841.00 331.79 L840.00 331.86 L839.00 331.94 L838.00 332.02 L837.00 332.76 L836.00 333.55 L835.00 333.01 L834.00 332.46 L833.00 332.58 L832.00 332.71 L831.00 332.83 L830.00 332.95 L829.00 333.08 L828.00 333.20 L827.00 333.46 L826.00 333.72 L825.00 333.97 L824.00 334.10 L823.00 334.22 L822.00 334.34 L821.00 334.47 L820.00 334.59 L819.00 334.71 L818.00 334.83 L817.00 334.96 L816.00 334.12 L815.00 333.28 L814.00 332.53 L813.00 332.73 L812.00 332.93 L811.00 333.13 L810.00 333.33 L809.00 333.53 L808.00 333.73 L807.00 333.93 L806.00 334.13 L805.00 334.33 L804.00 334.33 L803.00 334.33 L802.00 334.33 L801.00 334.33 L800.00 334.33 L799.00 334.33 L798.00 335.16 L797.00 335.99 L796.00 336.83 L795.00 336.83 L794.00 336.83 L793.00 336.83 L792.00 337.02 L791.00 336.67 L790.00 336.32 L789.00 335.78 L788.00 335.24 L787.00 334.70 L786.00 334.70 L785.00 334.70 L784.00 334.70 L783.00 334.70 L782.00 334.70 L781.00 334.70 L780.00 334.70 L779.00 334.70 L778.00 334.70 L777.00 334.70 L776.00 334.70 L775.00 334.70 L774.00 334.70 L773.00 333.88 L772.00 333.06 L771.00 332.24 L770.00 332.24 L769.00 332.24 L768.00 332.24 L767.00 332.24 L766.00 332.24 L765.00 332.24 L764.00 332.24 L763.00 332.24 L762.00 332.98 L761.00 333.72 L760.00 332.98 L759.00 332.24 L758.00 332.24 L757.00 332.71 L756.00 333.18 L755.00 333.66 L754.00 333.66 L753.00 333.66 L752.00 333.66 L751.00 333.66 L750.00 333.92 L749.00 334.17 L748.00 334.43 L747.00 334.43 L746.00 334.43 L745.00 334.43 L744.00 334.43 L743.00 334.43 L742.00 334.43 L741.00 334.43 L740.00 333.72 L739.00 333.02 L738.00 332.31 L737.00 332.31 L736.00 332.31 L735.00 332.31 L734.00 332.31 L733.00 332.31 L732.00 332.31 L731.00 332.31 L730.00 332.31 L729.00 332.31 L728.00 332.31 L727.00 332.05 L726.00 331.79 L725.00 331.52 L724.00 331.52 L723.00 331.52 L722.00 331.52 L721.00 331.52 L720.00 331.52 L719.00 331.52 L718.00 331.52 L717.00 331.52 L716.00 331.52 L715.00 331.52 L714.00 331.71 L713.00 331.90 L712.00 332.09 L711.00 332.09 L710.00 332.09 L709.00 332.09 L708.00 332.09 L707.00 332.09 L706.00 332.09 L705.00 332.09 L704.00 332.09 L703.00 332.09 L702.00 332.09 L701.00 332.09 L700.00 332.09 L699.00 333.08 L698.00 334.07 L697.00 333.08 L696.00 332.09 L695.00 332.09 L694.00 332.09 L693.00 332.09 L692.00 332.09 L691.00 332.09 L690.00 332.09 L689.00 332.09 L688.00 332.24 L687.00 332.39 L686.00 332.54 L685.00 332.54 L684.00 332.54 L683.00 332.54 L682.00 332.54 L681.00 332.54 L680.00 332.54 L679.00 333.23 L678.00 333.91 L677.00 334.60 L676.00 334.60 L675.00 334.60 L674.00 334.60 L673.00 334.60 L672.00 334.60 L671.00 334.60 L670.00 334.60 L669.00 334.60 L668.00 334.60 L667.00 334.60 L666.00 334.60 L665.00 334.60 L664.00 334.60 L663.00 334.60 L662.00 334.60 L661.00 334.60 L660.00 334.60 L659.00 334.60 L658.00 334.60 L657.00 334.60 L656.00 334.60 L655.00 333.60 L654.00 332.61 L653.00 331.62 L652.00 331.62 L651.00 331.62 L650.00 331.62 L649.00 331.62 L648.00 331.62 L647.00 331.62 L646.00 331.62 L645.00 331.62 L644.00 331.62 L643.00 332.36 L642.00 333.24 L641.00 332.62 L640.00 332.01 L639.00 332.01 L638.00 332.01 L637.00 332.01 L636.00 332.01 L635.00 332.01 L634.00 332.42 L633.00 332.82 L632.00 333.23 L631.00 332.82 L630.00 332.42 L629.00 332.01 L628.00 332.01 L627.00 332.01 L626.00 332.01 L625.00 332.01 L624.00 332.01 L623.00 332.01 L622.00 332.01 L621.00 332.01 L620.00 332.01 L619.00 332.58 L618.00 333.14 L617.00 333.71 L616.00 333.71 L615.00 333.71 L614.00 333.71 L613.00 334.48 L612.00 335.24 L611.00 334.48 L610.00 333.96 L609.00 334.21 L608.00 334.46 L607.00 334.46 L606.00 334.46 L605.00 334.46 L604.00 334.46 L603.00 334.46 L602.00 334.46 L601.00 334.46 L600.00 334.46 L599.00 334.46 L598.00 334.46 L597.00 334.46 L596.00 334.46 L595.00 334.46 L594.00 334.46 L593.00 334.46 L592.00 334.46 L591.00 334.46 L590.00 334.46 L589.00 334.46 L588.00 334.46 L587.00 334.46 L586.00 334.46 L585.00 333.86 L584.00 333.26 L583.00 332.65 L582.00 332.65 L581.00 332.65 L580.00 332.65 L579.00 332.65 L578.00 332.65 L577.00 332.65 L576.00 332.65 L575.00 332.65 L574.00 332.65 L573.00 332.65 L572.00 332.65 L571.00 332.65 L570.00 332.65 L569.00 332.65 L568.00 332.65 L567.00 332.65 L566.00 332.65 L565.00 332.65 L564.00 332.65 L563.00 332.65 L562.00 332.65 L561.00 332.65 L560.00 332.65 L559.00 332.65 L558.00 332.65 L557.00 332.65 L556.00 332.66 L555.00 332.67 L554.00 332.68 L553.00 332.68 L552.00 332.68 L551.00 332.68 L550.00 332.68 L549.00 332.68 L548.00 332.68 L547.00 332.68 L546.00 332.68 L545.00 332.68 L544.00 332.68 L543.00 332.59 L542.00 332.49 L541.00 332.39 L540.00 332.39 L539.00 332.39 L538.00 332.39 L537.00 332.39 L536.00 332.39 L535.00 332.39 L534.00 332.39 L533.00 332.39 L532.00 332.39 L531.00 332.39 L530.00 332.39 L529.00 332.39 L528.00 332.39 L527.00 332.38 L526.00 332.36 L525.00 332.35 L524.00 332.35 L523.00 332.35 L522.00 332.35 L521.00 332.35 L520.00 332.35 L519.00 332.35 L518.00 332.35 L517.00 332.35 L516.00 332.35 L515.00 332.35 L514.00 332.35 L513.00 332.86 L512.00 333.37 L511.00 333.88 L510.00 333.37 L509.00 332.86 L508.00 332.35 L507.00 332.35 L506.00 332.35 L505.00 332.35 L504.00 332.35 L503.00 332.35 L502.00 332.35 L501.00 332.35 L500.00 333.00 L499.00 333.65 L498.00 334.31 L497.00 334.31 L496.00 334.31 L495.00 334.31 L494.00 334.31 L493.00 334.31 L492.00 334.31 L491.00 334.31 L490.00 334.31 L489.00 333.75 L488.00 333.19 L487.00 332.63 L486.00 332.63 L485.00 332.63 L484.00 332.63 L483.00 332.63 L482.00 332.63 L481.00 332.63 L480.00 332.63 L479.00 332.63 L478.00 333.30 L477.00 333.97 L476.00 334.64 L475.00 333.97 L474.00 333.30 L473.00 332.63 L472.00 332.63 L471.00 332.63 L470.00 332.63 L469.00 332.63 L468.00 332.63 L467.00 332.63 L466.00 332.63 L465.00 332.63 L464.00 332.31 L463.00 332.00 L462.00 331.68 L461.00 331.68 L460.00 331.68 L459.00 331.68 L458.00 331.68 L457.00 331.68 L456.00 331.94 L455.00 332.20 L454.00 332.45 L453.00 332.45 L452.00 332.45 L451.00 332.45 L450.00 332.45 L449.00 332.45 L448.00 332.45 L447.00 332.45 L446.00 332.45 L445.00 332.45 L444.00 332.45 L443.00 332.32 L442.00 332.19 L441.00 332.06 L440.00 332.06 L439.00 332.06 L438.00 332.06 L437.00 332.06 L436.00 332.06 L435.00 332.06 L434.00 332.06 L433.00 332.06 L432.00 332.06 L431.00 332.06 L430.00 332.06 L429.00 332.06 L428.00 332.06 L427.00 331.96 L426.00 331.86 L425.00 331.77 L424.00 331.77 L423.00 331.77 L422.00 331.77 L421.00 331.77 L420.00 331.77 L419.00 331.77 L418.00 331.77 L417.00 332.32 L416.00 332.87 L415.00 333.43 L414.00 333.08 L413.00 332.74 L412.00 332.40 L411.00 332.40 L410.00 332.40 L409.00 332.40 L408.00 332.40 L407.00 332.40 L406.00 332.40 L405.00 332.40 L404.00 332.40 L403.00 332.40 L402.00 332.40 L401.00 332.40 L400.00 332.40 L399.00 332.40 L398.00 332.40 L397.00 332.40 L396.00 332.45 L395.00 333.03 L394.00 333.61 L393.00 334.14 L392.00 333.61 L391.00 333.08 L390.00 332.55 L389.00 332.55 L388.00 332.55 L387.00 332.55 L386.00 332.55 L385.00 332.55 L384.00 332.55 L383.00 332.55 L382.00 332.55 L381.00 332.55 L380.00 332.55 L379.00 332.55 L378.00 332.55 L377.00 332.55 L376.00 332.55 L375.00 332.55 L374.00 332.55 L373.00 332.55Z" fill="#3b75af" stroke="#3b75af" stroke-width="0.6" stroke-linejoin="round"/><circle cx="373.00" cy="327.80" r="4.80" fill="#3b75af"/><circle cx="2011.00" cy="327.80" r="4.80" fill="#3b75af"/>
<path d="M373.00 242.77 L374.00 242.77 L375.00 242.77 L376.00 242.76 L377.00 242.76 L378.00 242.76 L379.00 242.76 L380.00 242.76 L381.00 242.76 L382.00 242.76 L383.00 242.76 L384.00 242.76 L385.00 242.75 L386.00 242.75 L387.00 242.75 L388.00 242.75 L389.00 242.75 L390.00 242.75 L391.00 242.75 L392.00 242.75 L393.00 242.74 L394.00 242.74 L395.00 242.74 L396.00 242.74 L397.00 242.74 L398.00 242.74 L399.00 242.58 L400.00 242.43 L401.00 242.28 L402.00 242.28 L403.00 242.27 L404.00 242.27 L405.00 242.27 L406.00 242.27 L407.00 242.27 L408.00 242.27 L409.00 242.27 L410.00 242.27 L411.00 242.26 L412.00 242.26 L413.00 242.26 L414.00 242.26 L415.00 242.26 L416.00 242.26 L417.00 242.26 L418.00 242.26 L419.00 242.25 L420.00 242.25 L421.00 242.25 L422.00 242.25 L423.00 242.25 L424.00 242.25 L425.00 242.25 L426.00 242.25 L427.00 242.24 L428.00 242.24 L429.00 242.20 L430.00 242.16 L431.00 242.12 L432.00 242.12 L433.00 242.19 L434.00 242.27 L435.00 242.34 L436.00 242.34 L437.00 242.34 L438.00 242.34 L439.00 242.34 L440.00 242.34 L441.00 242.34 L442.00 242.34 L443.00 242.33 L444.00 242.44 L445.00 242.55 L446.00 242.66 L447.00 242.66 L448.00 242.66 L449.00 242.66 L450.00 242.66 L451.00 242.04 L452.00 241.41 L453.00 240.79 L454.00 241.34 L455.00 241.89 L456.00 242.44 L457.00 242.44 L458.00 242.44 L459.00 242.44 L460.00 242.44 L461.00 242.44 L462.00 242.44 L463.00 242.44 L464.00 242.43 L465.00 242.43 L466.00 242.43 L467.00 242.36 L468.00 242.28 L469.00 242.20 L470.00 242.20 L471.00 242.13 L472.00 242.05 L473.00 241.98 L474.00 241.98 L475.00 241.97 L476.00 241.97 L477.00 241.97 L478.00 241.97 L479.00 241.97 L480.00 242.03 L481.00 242.09 L482.00 242.15 L483.00 242.15 L484.00 242.15 L485.00 242.15 L486.00 242.15 L487.00 242.14 L488.00 242.14 L489.00 241.46 L490.00 240.77 L491.00 240.09 L492.00 240.09 L493.00 240.09 L494.00 240.09 L495.00 240.08 L496.00 240.08 L497.00 240.08 L498.00 240.08 L499.00 240.08 L500.00 240.08 L501.00 240.08 L502.00 240.08 L503.00 240.08 L504.00 240.07 L505.00 240.07 L506.00 240.07 L507.00 240.07 L508.00 240.07 L509.00 240.07 L510.00 240.07 L511.00 240.07 L512.00 240.06 L513.00 240.06 L514.00 239.90 L515.00 239.73 L516.00 239.56 L517.00 239.56 L518.00 239.56 L519.00 239.56 L520.00 239.56 L521.00 239.57 L522.00 239.57 L523.00 239.57 L524.00 239.57 L525.00 239.57 L526.00 239.57 L527.00 239.57 L528.00 239.56 L529.00 239.56 L530.00 239.56 L531.00 239.56 L532.00 239.87 L533.00 240.18 L534.00 240.50 L535.00 240.50 L536.00 240.49 L537.00 240.49 L538.00 240.49 L539.00 240.49 L540.00 240.49 L541.00 240.49 L542.00 240.49 L543.00 240.97 L544.00 241.45 L545.00 241.94 L546.00 241.94 L547.00 241.93 L548.00 241.93 L549.00 241.93 L550.00 241.93 L551.00 241.93 L552.00 241.93 L553.00 241.93 L554.00 241.21 L555.00 240.50 L556.00 239.79 L557.00 240.50 L558.00 241.21 L559.00 241.92 L560.00 241.92 L561.00 241.92 L562.00 241.92 L563.00 241.91 L564.00 241.34 L565.00 240.77 L566.00 240.19 L567.00 240.74 L568.00 241.28 L569.00 241.83 L570.00 241.83 L571.00 241.83 L572.00 241.83 L573.00 242.08 L574.00 242.34 L575.00 242.59 L576.00 242.59 L577.00 242.59 L578.00 242.21 L579.00 241.82 L580.00 241.44 L581.00 241.82 L582.00 242.20 L583.00 242.58 L584.00 242.58 L585.00 242.58 L586.00 242.58 L587.00 242.58 L588.00 242.58 L589.00 241.56 L590.00 240.54 L591.00 239.52 L592.00 239.52 L593.00 238.87 L594.00 238.23 L595.00 237.58 L596.00 238.23 L597.00 238.87 L598.00 239.51 L599.00 239.51 L600.00 239.81 L601.00 240.10 L602.00 240.40 L603.00 240.40 L604.00 240.39 L605.00 240.39 L606.00 240.39 L607.00 239.75 L608.00 239.10 L609.00 238.45 L610.00 239.10 L611.00 239.74 L612.00 240.38 L613.00 240.38 L614.00 240.38 L615.00 240.38 L616.00 240.98 L617.00 241.58 L618.00 242.18 L619.00 242.18 L620.00 242.30 L621.00 242.41 L622.00 242.52 L623.00 242.52 L624.00 242.52 L625.00 242.52 L626.00 242.36 L627.00 242.21 L628.00 242.05 L629.00 242.05 L630.00 242.05 L631.00 242.05 L632.00 242.05 L633.00 242.04 L634.00 242.04 L635.00 242.04 L636.00 242.04 L637.00 242.04 L638.00 242.04 L639.00 242.04 L640.00 242.04 L641.00 242.03 L642.00 242.03 L643.00 242.03 L644.00 242.03 L645.00 241.28 L646.00 240.53 L647.00 239.78 L648.00 239.78 L649.00 239.77 L650.00 239.77 L651.00 239.40 L652.00 239.03 L653.00 238.66 L654.00 239.03 L655.00 239.40 L656.00 239.77 L657.00 239.76 L658.00 239.76 L659.00 239.76 L660.00 239.76 L661.00 239.76 L662.00 239.76 L663.00 239.76 L664.00 239.76 L665.00 239.75 L666.00 239.64 L667.00 239.52 L668.00 239.41 L669.00 239.41 L670.00 239.41 L671.00 239.40 L672.00 239.84 L673.00 240.27 L674.00 240.70 L675.00 240.70 L676.00 240.70 L677.00 240.70 L678.00 240.70 L679.00 240.70 L680.00 240.70 L681.00 240.70 L682.00 240.69 L683.00 240.69 L684.00 240.69 L685.00 240.69 L686.00 239.75 L687.00 238.82 L688.00 239.75 L689.00 240.69 L690.00 241.24 L691.00 241.80 L692.00 242.36 L693.00 242.35 L694.00 242.35 L695.00 242.35 L696.00 242.35 L697.00 242.35 L698.00 242.35 L699.00 242.35 L700.00 242.35 L701.00 242.35 L702.00 242.34 L703.00 242.34 L704.00 242.34 L705.00 242.47 L706.00 242.60 L707.00 242.73 L708.00 242.73 L709.00 242.73 L710.00 242.73 L711.00 242.73 L712.00 242.73 L713.00 242.73 L714.00 242.72 L715.00 242.72 L716.00 242.72 L717.00 242.72 L718.00 242.72 L719.00 242.72 L720.00 242.72 L721.00 242.72 L722.00 242.72 L723.00 241.98 L724.00 241.24 L725.00 240.50 L726.00 240.50 L727.00 240.50 L728.00 240.50 L729.00 240.50 L730.00 240.49 L731.00 240.49 L732.00 240.49 L733.00 240.49 L734.00 240.49 L735.00 240.38 L736.00 240.28 L737.00 240.17 L738.00 240.17 L739.00 240.17 L740.00 240.17 L741.00 240.17 L742.00 240.16 L743.00 240.16 L744.00 240.16 L745.00 239.39 L746.00 238.61 L747.00 239.38 L748.00 240.16 L749.00 240.16 L750.00 240.15 L751.00 240.15 L752.00 240.15 L753.00 239.51 L754.00 238.87 L755.00 239.55 L756.00 240.23 L757.00 240.28 L758.00 240.28 L759.00 240.27 L760.00 240.27 L761.00 240.27 L762.00 240.27 L763.00 240.27 L764.00 240.27 L765.00 240.27 L766.00 240.27 L767.00 240.26 L768.00 240.26 L769.00 240.26 L770.00 240.26 L771.00 240.26 L772.00 240.26 L773.00 240.26 L774.00 240.26 L775.00 240.25 L776.00 240.25 L777.00 240.77 L778.00 241.29 L779.00 241.80 L780.00 241.80 L781.00 241.97 L782.00 242.14 L783.00 242.32 L784.00 242.49 L785.00 242.66 L786.00 242.83 L787.00 243.00 L788.00 243.00 L788.50 243.00 L788.50 253.24 L788.00 253.24 L787.00 253.24 L786.00 253.07 L785.00 252.90 L784.00 252.72 L783.00 252.55 L782.00 252.38 L781.00 252.21 L780.00 252.04 L779.00 252.04 L778.00 252.04 L777.00 252.04 L776.00 252.68 L775.00 253.32 L774.00 253.96 L773.00 253.32 L772.00 252.69 L771.00 252.05 L770.00 251.45 L769.00 250.85 L768.00 250.26 L767.00 250.26 L766.00 250.26 L765.00 250.26 L764.00 250.26 L763.00 250.26 L762.00 250.26 L761.00 250.27 L760.00 250.27 L759.00 250.27 L758.00 250.27 L757.00 250.27 L756.00 250.92 L755.00 251.57 L754.00 252.72 L753.00 253.22 L752.00 253.72 L751.00 253.57 L750.00 253.43 L749.00 253.28 L748.00 252.93 L747.00 252.58 L746.00 252.23 L745.00 251.52 L744.00 250.81 L743.00 250.10 L742.00 250.10 L741.00 250.10 L740.00 250.11 L739.00 250.11 L738.00 250.76 L737.00 251.41 L736.00 250.76 L735.00 250.11 L734.00 250.11 L733.00 250.11 L732.00 250.12 L731.00 250.12 L730.00 250.12 L729.00 250.12 L728.00 250.12 L727.00 250.68 L726.00 251.24 L725.00 251.80 L724.00 251.23 L723.00 250.67 L722.00 250.10 L721.00 250.10 L720.00 250.10 L719.00 250.10 L718.00 250.10 L717.00 250.11 L716.00 250.11 L715.00 250.11 L714.00 250.11 L713.00 250.11 L712.00 250.36 L711.00 250.61 L710.00 250.86 L709.00 250.86 L708.00 250.85 L707.00 250.83 L706.00 250.82 L705.00 250.82 L704.00 250.82 L703.00 250.82 L702.00 250.82 L701.00 250.82 L700.00 250.82 L699.00 250.82 L698.00 250.83 L697.00 250.83 L696.00 250.83 L695.00 250.83 L694.00 250.83 L693.00 250.83 L692.00 251.47 L691.00 252.12 L690.00 252.76 L689.00 252.12 L688.00 251.48 L687.00 250.84 L686.00 250.84 L685.00 250.84 L684.00 250.84 L683.00 250.84 L682.00 250.85 L681.00 250.85 L680.00 250.85 L679.00 250.85 L678.00 251.54 L677.00 252.24 L676.00 252.93 L675.00 252.93 L674.00 252.93 L673.00 252.94 L672.00 252.94 L671.00 252.94 L670.00 252.94 L669.00 252.94 L668.00 252.67 L667.00 252.41 L666.00 252.14 L665.00 252.14 L664.00 252.14 L663.00 252.14 L662.00 252.14 L661.00 252.15 L660.00 252.15 L659.00 252.81 L658.00 253.48 L657.00 254.14 L656.00 253.48 L655.00 252.82 L654.00 252.15 L653.00 252.16 L652.00 252.16 L651.00 252.16 L650.00 252.16 L649.00 252.16 L648.00 252.16 L647.00 252.16 L646.00 252.16 L645.00 251.63 L644.00 251.10 L643.00 250.57 L642.00 250.57 L641.00 250.58 L640.00 250.58 L639.00 251.52 L638.00 252.47 L637.00 254.40 L636.00 255.39 L635.00 254.40 L634.00 253.41 L633.00 253.42 L632.00 253.42 L631.00 253.42 L630.00 253.42 L629.00 253.42 L628.00 253.42 L627.00 253.42 L626.00 253.42 L625.00 253.82 L624.00 253.13 L623.00 252.43 L622.00 250.95 L621.00 251.09 L620.00 251.24 L619.00 251.78 L618.00 251.24 L617.00 250.70 L616.00 250.16 L615.00 250.72 L614.00 251.28 L613.00 252.57 L612.00 252.74 L611.00 252.92 L610.00 251.72 L609.00 251.08 L608.00 250.44 L607.00 250.44 L606.00 250.44 L605.00 250.45 L604.00 250.45 L603.00 250.45 L602.00 250.51 L601.00 250.57 L600.00 250.63 L599.00 250.64 L598.00 250.64 L597.00 250.64 L596.00 250.64 L595.00 250.64 L594.00 250.64 L593.00 250.64 L592.00 250.64 L591.00 250.65 L590.00 250.65 L589.00 250.65 L588.00 250.65 L587.00 250.65 L586.00 250.65 L585.00 250.65 L584.00 250.65 L583.00 250.66 L582.00 250.66 L581.00 250.66 L580.00 250.66 L579.00 250.66 L578.00 250.66 L577.00 250.66 L576.00 250.66 L575.00 250.67 L574.00 250.67 L573.00 251.42 L572.00 252.17 L571.00 252.92 L570.00 252.92 L569.00 252.92 L568.00 252.92 L567.00 252.92 L566.00 252.92 L565.00 252.85 L564.00 252.78 L563.00 252.70 L562.00 252.71 L561.00 252.71 L560.00 252.71 L559.00 252.71 L558.00 252.71 L557.00 252.71 L556.00 252.71 L555.00 252.71 L554.00 252.71 L553.00 252.72 L552.00 252.72 L551.00 252.72 L550.00 252.72 L549.00 252.72 L548.00 252.72 L547.00 252.94 L546.00 253.16 L545.00 254.28 L544.00 255.19 L543.00 254.29 L542.00 253.38 L541.00 253.38 L540.00 253.39 L539.00 252.37 L538.00 251.35 L537.00 250.34 L536.00 250.34 L535.00 250.34 L534.00 250.34 L533.00 250.34 L532.00 250.34 L531.00 250.34 L530.00 250.35 L529.00 250.35 L528.00 250.35 L527.00 250.35 L526.00 250.35 L525.00 250.35 L524.00 250.35 L523.00 250.35 L522.00 250.36 L521.00 250.36 L520.00 250.36 L519.00 250.36 L518.00 251.43 L517.00 252.50 L516.00 253.57 L515.00 253.57 L514.00 253.57 L513.00 253.58 L512.00 253.58 L511.00 253.58 L510.00 253.58 L509.00 253.58 L508.00 253.58 L507.00 253.58 L506.00 253.58 L505.00 253.59 L504.00 253.59 L503.00 253.59 L502.00 253.59 L501.00 253.59 L500.00 253.59 L499.00 253.59 L498.00 253.60 L497.00 253.61 L496.00 253.63 L495.00 253.63 L494.00 253.63 L493.00 253.63 L492.00 252.71 L491.00 251.80 L490.00 250.88 L489.00 250.88 L488.00 250.88 L487.00 251.62 L486.00 252.36 L485.00 251.62 L484.00 250.89 L483.00 250.89 L482.00 250.89 L481.00 250.89 L480.00 250.89 L479.00 250.90 L478.00 250.90 L477.00 250.90 L476.00 250.89 L475.00 250.87 L474.00 250.86 L473.00 250.86 L472.00 250.86 L471.00 250.86 L470.00 250.86 L469.00 250.86 L468.00 250.87 L467.00 250.87 L466.00 250.87 L465.00 250.87 L464.00 250.87 L463.00 250.87 L462.00 250.87 L461.00 250.93 L460.00 250.99 L459.00 252.01 L458.00 252.97 L457.00 252.01 L456.00 251.05 L455.00 251.05 L454.00 251.05 L453.00 251.05 L452.00 251.05 L451.00 251.04 L450.00 251.03 L449.00 251.02 L448.00 251.02 L447.00 251.03 L446.00 251.63 L445.00 252.24 L444.00 252.84 L443.00 253.05 L442.00 253.75 L441.00 252.84 L440.00 252.54 L439.00 252.54 L438.00 252.54 L437.00 252.54 L436.00 252.54 L435.00 252.54 L434.00 252.55 L433.00 252.55 L432.00 252.55 L431.00 252.55 L430.00 252.55 L429.00 252.55 L428.00 252.55 L427.00 252.55 L426.00 252.55 L425.00 252.55 L424.00 252.55 L423.00 252.56 L422.00 252.56 L421.00 252.56 L420.00 252.82 L419.00 253.08 L418.00 253.34 L417.00 253.34 L416.00 253.34 L415.00 253.34 L414.00 253.35 L413.00 253.35 L412.00 253.35 L411.00 253.35 L410.00 253.35 L409.00 253.35 L408.00 253.35 L407.00 253.35 L406.00 253.36 L405.00 253.36 L404.00 253.36 L403.00 253.36 L402.00 253.36 L401.00 253.36 L400.00 253.36 L399.00 253.36 L398.00 253.51 L397.00 253.66 L396.00 253.80 L395.00 253.80 L394.00 253.80 L393.00 253.80 L392.00 253.81 L391.00 252.79 L390.00 251.77 L389.00 250.75 L388.00 250.75 L387.00 250.75 L386.00 250.75 L385.00 250.75 L384.00 250.75 L383.00 251.60 L382.00 252.46 L381.00 251.61 L380.00 251.57 L379.00 252.39 L378.00 251.58 L377.00 250.76 L376.00 250.76 L375.00 250.76 L374.00 250.76 L373.00 250.77Z" fill="#ef8636" stroke="#ef8636" stroke-width="0.6" stroke-linejoin="round"/><circle cx="373.00" cy="246.80" r="4.70" fill="#ef8636"/>
<path d="M788.00 246.00 L789.50 248.00 L790.00 320.00 L793.00 318.50 L797.00 319.50 L801.00 329.00 L804.00 322.00 L805.50 242.50 L807.50 251.50" fill="none" stroke="#ef8636" stroke-width="4.60" stroke-linejoin="round" stroke-linecap="square"/>
<path d="M788.4 317.5L790.5 316.2L796.5 316.0L798.5 318.0L801.0 322.5L803.5 319.0L807.6 317.0L807.6 326.5L803.5 330.5L801.2 333.3L798.0 329.5L795.0 327.0L791.0 328.2L788.4 327.5Z" fill="#ef8636"/>
<path d="M807.00 247.98 L808.00 247.91 L809.00 247.78 L810.00 247.65 L811.00 247.51 L812.00 247.38 L813.00 247.25 L814.00 247.11 L815.00 246.98 L816.00 246.70 L817.00 246.42 L818.00 246.14 L819.00 245.21 L820.00 244.29 L821.00 242.61 L822.00 242.22 L823.00 241.83 L824.00 242.20 L825.00 241.91 L826.00 241.63 L827.00 242.18 L828.00 242.72 L829.00 243.27 L830.00 242.98 L831.00 242.70 L832.00 242.25 L833.00 241.79 L834.00 241.34 L835.00 240.88 L836.00 240.43 L837.00 239.97 L838.00 239.51 L839.00 239.06 L840.00 237.73 L841.00 236.68 L842.00 237.39 L843.00 238.09 L844.00 237.92 L845.00 237.75 L846.00 237.58 L847.00 237.41 L848.00 236.87 L849.00 236.32 L850.00 235.53 L851.00 235.49 L852.00 235.45 L853.00 235.65 L854.00 235.48 L855.00 235.31 L856.00 235.14 L857.00 234.97 L858.00 234.80 L859.00 234.63 L860.00 234.46 L861.00 234.36 L862.00 234.26 L863.00 234.16 L864.00 234.06 L865.00 233.96 L866.00 233.86 L867.00 233.76 L868.00 233.66 L869.00 233.56 L870.00 233.46 L871.00 233.36 L872.00 233.26 L873.00 233.16 L874.00 233.06 L875.00 232.96 L876.00 233.00 L877.00 233.04 L878.00 233.08 L879.00 233.12 L880.00 233.16 L881.00 233.20 L882.00 233.36 L883.00 233.51 L884.00 233.66 L885.00 233.71 L886.00 233.75 L887.00 233.79 L888.00 233.83 L889.00 233.87 L890.00 233.91 L891.00 233.95 L892.00 234.00 L893.00 234.04 L894.00 234.08 L895.00 234.12 L896.00 234.16 L897.00 234.20 L898.00 233.69 L899.00 233.18 L900.00 232.66 L901.00 233.26 L902.00 233.85 L903.00 234.45 L904.00 234.49 L905.00 234.53 L906.00 233.52 L907.00 232.51 L908.00 232.55 L909.00 232.01 L910.00 232.52 L911.00 233.03 L912.00 233.07 L913.00 233.11 L914.00 233.16 L915.00 233.20 L916.00 233.96 L917.00 234.73 L918.00 235.50 L919.00 235.54 L920.00 235.58 L921.00 235.62 L922.00 235.68 L923.00 235.73 L924.00 235.79 L925.00 235.84 L926.00 235.90 L927.00 235.95 L928.00 236.00 L929.00 236.06 L930.00 236.11 L931.00 236.17 L932.00 236.22 L933.00 236.28 L934.00 236.33 L935.00 236.38 L936.00 236.44 L937.00 236.49 L938.00 236.27 L939.00 236.06 L940.00 235.84 L941.00 235.89 L942.00 235.95 L943.00 236.00 L944.00 236.05 L945.00 236.11 L946.00 236.16 L947.00 236.22 L948.00 236.27 L949.00 236.33 L950.00 236.38 L951.00 236.44 L952.00 236.49 L953.00 236.54 L954.00 236.60 L955.00 236.65 L956.00 236.71 L957.00 236.76 L958.00 236.82 L959.00 236.87 L960.00 236.09 L961.00 235.31 L962.00 236.20 L963.00 237.09 L964.00 237.14 L965.00 237.20 L966.00 237.25 L967.00 236.81 L968.00 236.38 L969.00 235.95 L970.00 236.02 L971.00 236.09 L972.00 236.16 L973.00 236.23 L974.00 236.30 L975.00 236.37 L976.00 236.44 L977.00 236.52 L978.00 236.59 L979.00 236.66 L980.00 236.73 L981.00 236.80 L982.00 236.55 L983.00 236.30 L984.00 236.05 L985.00 236.12 L986.00 236.19 L987.00 236.26 L988.00 236.33 L989.00 236.40 L990.00 236.47 L991.00 236.54 L992.00 236.61 L993.00 236.68 L994.00 236.75 L995.00 236.82 L996.00 236.89 L997.00 236.96 L998.00 237.03 L999.00 237.10 L1000.00 237.17 L1001.00 238.20 L1002.00 239.23 L1003.00 240.25 L1004.00 240.32 L1005.00 240.39 L1006.00 240.46 L1007.00 240.53 L1008.00 240.60 L1009.00 240.67 L1010.00 240.74 L1011.00 240.18 L1012.00 239.61 L1013.00 239.05 L1014.00 239.12 L1015.00 239.16 L1016.00 239.19 L1017.00 239.23 L1018.00 240.03 L1019.00 240.84 L1020.00 241.65 L1021.00 241.68 L1022.00 241.72 L1023.00 241.76 L1024.00 241.79 L1025.00 241.21 L1026.00 240.63 L1027.00 241.28 L1028.00 241.93 L1029.00 241.97 L1030.00 242.01 L1031.00 242.04 L1032.00 242.08 L1033.00 242.11 L1034.00 241.55 L1035.00 240.24 L1036.00 238.93 L1037.00 238.82 L1038.00 239.46 L1039.00 240.10 L1040.00 240.13 L1041.00 240.17 L1042.00 239.26 L1043.00 238.35 L1044.00 239.33 L1045.00 240.31 L1046.00 240.35 L1047.00 240.38 L1048.00 240.42 L1049.00 240.46 L1050.00 240.49 L1051.00 240.53 L1052.00 240.56 L1053.00 240.60 L1054.00 240.63 L1055.00 240.67 L1056.00 240.32 L1057.00 239.97 L1058.00 239.62 L1059.00 239.66 L1060.00 239.69 L1061.00 239.73 L1062.00 239.76 L1063.00 239.80 L1064.00 239.84 L1065.00 240.23 L1066.00 240.62 L1067.00 241.02 L1068.00 241.05 L1069.00 241.09 L1070.00 241.12 L1071.00 241.12 L1072.00 241.12 L1073.00 241.12 L1074.00 241.12 L1075.00 241.12 L1076.00 241.12 L1077.00 241.12 L1078.00 241.12 L1079.00 241.12 L1080.00 241.12 L1081.00 241.12 L1082.00 241.12 L1083.00 241.12 L1084.00 241.12 L1085.00 241.12 L1086.00 241.12 L1087.00 241.12 L1088.00 241.12 L1089.00 241.91 L1090.00 242.70 L1091.00 243.49 L1092.00 243.49 L1093.00 243.49 L1094.00 243.49 L1095.00 243.49 L1096.00 243.49 L1097.00 243.49 L1098.00 243.49 L1099.00 243.49 L1100.00 243.49 L1101.00 242.73 L1102.00 241.96 L1103.00 241.60 L1104.00 241.24 L1105.00 240.12 L1106.00 240.12 L1107.00 240.12 L1108.00 240.12 L1109.00 240.12 L1110.00 240.12 L1111.00 240.12 L1112.00 240.12 L1113.00 240.12 L1114.00 240.12 L1115.00 240.12 L1116.00 240.12 L1117.00 240.12 L1118.00 240.12 L1119.00 240.12 L1120.00 240.12 L1121.00 240.12 L1122.00 240.12 L1123.00 240.12 L1124.00 240.12 L1125.00 240.12 L1126.00 241.04 L1127.00 241.97 L1128.00 242.90 L1129.00 242.90 L1130.00 242.90 L1131.00 242.90 L1132.00 242.90 L1133.00 242.90 L1134.00 242.90 L1135.00 242.90 L1136.00 242.90 L1137.00 242.90 L1138.00 242.90 L1139.00 242.23 L1140.00 241.56 L1141.00 242.23 L1142.00 242.90 L1143.00 242.90 L1144.00 242.90 L1145.00 242.90 L1146.00 242.90 L1147.00 242.90 L1148.00 243.08 L1149.00 243.25 L1150.00 243.42 L1151.00 243.42 L1152.00 243.42 L1153.00 243.42 L1154.00 243.42 L1155.00 243.42 L1156.00 243.42 L1157.00 243.42 L1158.00 243.42 L1159.00 243.42 L1160.00 243.42 L1161.00 243.42 L1162.00 243.42 L1163.00 243.42 L1164.00 243.42 L1165.00 242.42 L1166.00 241.42 L1167.00 240.42 L1168.00 240.42 L1169.00 240.42 L1170.00 240.42 L1171.00 240.42 L1172.00 240.42 L1173.00 240.41 L1174.00 240.40 L1175.00 240.39 L1176.00 240.39 L1177.00 240.39 L1178.00 240.39 L1179.00 240.39 L1180.00 239.36 L1181.00 238.33 L1182.00 239.36 L1183.00 240.39 L1184.00 240.39 L1185.00 240.39 L1186.00 240.39 L1187.00 240.39 L1188.00 240.39 L1189.00 240.39 L1190.00 240.39 L1191.00 240.39 L1192.00 240.39 L1193.00 240.39 L1194.00 240.39 L1195.00 240.39 L1196.00 240.39 L1197.00 240.39 L1198.00 240.47 L1199.00 240.55 L1200.00 240.62 L1201.00 240.62 L1202.00 240.62 L1203.00 240.62 L1204.00 240.62 L1205.00 240.62 L1206.00 240.62 L1207.00 240.62 L1208.00 240.62 L1209.00 240.62 L1210.00 240.62 L1211.00 240.62 L1212.00 241.28 L1213.00 241.94 L1214.00 242.61 L1215.00 242.61 L1216.00 242.61 L1217.00 242.61 L1218.00 242.61 L1219.00 242.61 L1220.00 241.95 L1221.00 241.29 L1222.00 240.63 L1223.00 241.18 L1224.00 241.74 L1225.00 241.79 L1226.00 241.27 L1227.00 240.76 L1228.00 241.27 L1229.00 241.79 L1230.00 242.30 L1231.00 242.30 L1232.00 242.30 L1233.00 242.30 L1234.00 242.30 L1235.00 242.30 L1236.00 242.30 L1237.00 242.30 L1238.00 242.30 L1239.00 242.30 L1240.00 242.30 L1241.00 242.30 L1242.00 241.56 L1243.00 240.81 L1244.00 240.07 L1245.00 240.07 L1246.00 240.07 L1247.00 240.07 L1248.00 240.07 L1249.00 240.07 L1250.00 240.07 L1251.00 240.07 L1252.00 240.07 L1253.00 240.07 L1254.00 240.07 L1255.00 240.07 L1256.00 240.07 L1257.00 239.10 L1258.00 238.13 L1259.00 239.10 L1260.00 240.28 L1261.00 240.48 L1262.00 240.69 L1263.00 240.69 L1264.00 240.05 L1265.00 239.41 L1266.00 240.05 L1267.00 240.69 L1268.00 240.69 L1269.00 239.68 L1270.00 238.66 L1271.00 239.68 L1272.00 240.69 L1273.00 240.69 L1274.00 240.69 L1275.00 240.69 L1276.00 240.69 L1277.00 240.69 L1278.00 240.69 L1279.00 240.69 L1280.00 240.69 L1281.00 240.69 L1282.00 240.69 L1283.00 240.69 L1284.00 240.69 L1285.00 241.42 L1286.00 242.15 L1287.00 242.87 L1288.00 242.87 L1289.00 242.87 L1290.00 242.87 L1291.00 242.87 L1292.00 242.87 L1293.00 242.87 L1294.00 242.87 L1295.00 242.87 L1296.00 242.87 L1297.00 242.87 L1298.00 242.22 L1299.00 241.56 L1300.00 242.22 L1301.00 242.87 L1302.00 242.87 L1303.00 242.87 L1304.00 242.87 L1305.00 242.87 L1306.00 242.87 L1307.00 242.87 L1308.00 242.87 L1309.00 242.87 L1310.00 243.05 L1311.00 243.22 L1312.00 243.40 L1313.00 243.40 L1314.00 243.40 L1315.00 243.40 L1316.00 243.40 L1317.00 243.40 L1318.00 243.40 L1319.00 243.40 L1320.00 243.40 L1321.00 243.40 L1322.00 243.40 L1323.00 243.40 L1324.00 243.40 L1325.00 243.40 L1326.00 243.40 L1327.00 243.40 L1328.00 243.40 L1329.00 243.40 L1330.00 243.40 L1331.00 243.40 L1332.00 243.40 L1333.00 243.40 L1334.00 243.40 L1335.00 243.40 L1336.00 242.56 L1337.00 241.72 L1338.00 240.89 L1339.00 240.89 L1340.00 240.89 L1341.00 240.89 L1342.00 240.89 L1343.00 240.89 L1344.00 240.89 L1345.00 240.89 L1346.00 240.89 L1347.00 240.89 L1348.00 240.89 L1349.00 240.89 L1350.00 240.89 L1351.00 240.89 L1352.00 240.89 L1353.00 240.89 L1354.00 240.89 L1355.00 240.89 L1356.00 240.89 L1357.00 240.89 L1358.00 240.89 L1359.00 240.89 L1360.00 240.60 L1361.00 240.31 L1362.00 240.02 L1363.00 240.02 L1364.00 240.02 L1365.00 240.02 L1366.00 240.02 L1367.00 240.02 L1368.00 240.02 L1369.00 240.02 L1370.00 240.02 L1371.00 240.02 L1372.00 241.03 L1373.00 241.25 L1374.00 241.48 L1375.00 242.26 L1376.00 243.02 L1377.00 243.00 L1378.00 242.98 L1379.00 242.36 L1380.00 241.09 L1381.00 239.82 L1382.00 239.79 L1383.00 239.79 L1384.00 239.80 L1385.00 240.41 L1386.00 241.02 L1387.00 241.02 L1388.00 241.02 L1389.00 241.02 L1390.00 241.02 L1391.00 241.02 L1392.00 241.02 L1393.00 241.02 L1394.00 241.02 L1395.00 241.02 L1396.00 241.02 L1397.00 241.02 L1398.00 241.02 L1399.00 241.02 L1400.00 241.60 L1401.00 242.17 L1402.00 242.74 L1403.00 242.74 L1404.00 242.74 L1405.00 242.74 L1406.00 242.74 L1407.00 242.74 L1408.00 242.74 L1409.00 242.74 L1410.00 242.74 L1411.00 242.74 L1412.00 242.74 L1413.00 242.28 L1414.00 241.82 L1415.00 241.36 L1416.00 241.36 L1417.00 241.36 L1418.00 241.36 L1419.00 241.36 L1420.00 241.90 L1421.00 242.45 L1422.00 242.99 L1423.00 242.99 L1424.00 242.99 L1425.00 242.99 L1426.00 242.99 L1427.00 242.99 L1428.00 241.92 L1429.00 240.85 L1430.00 241.92 L1431.00 242.99 L1432.00 242.99 L1433.00 242.99 L1434.00 242.99 L1435.00 242.99 L1436.00 242.99 L1437.00 242.99 L1438.00 242.99 L1439.00 242.99 L1440.00 242.99 L1441.00 242.99 L1442.00 242.99 L1443.00 242.99 L1444.00 242.99 L1445.00 242.99 L1446.00 242.30 L1447.00 241.62 L1448.00 242.30 L1449.00 242.19 L1450.00 241.40 L1451.00 240.61 L1452.00 240.61 L1453.00 240.61 L1454.00 240.61 L1455.00 240.61 L1456.00 240.61 L1457.00 240.61 L1458.00 240.61 L1459.00 240.61 L1460.00 240.61 L1461.00 240.61 L1462.00 240.76 L1463.00 240.38 L1464.00 239.99 L1465.00 240.18 L1466.00 240.37 L1467.00 240.02 L1468.00 240.37 L1469.00 240.72 L1470.00 241.08 L1471.00 241.08 L1472.00 241.08 L1473.00 241.08 L1474.00 241.08 L1475.00 241.08 L1476.00 241.08 L1477.00 241.08 L1478.00 241.08 L1479.00 241.08 L1480.00 241.08 L1481.00 240.54 L1482.00 240.01 L1483.00 240.54 L1484.00 241.08 L1485.00 241.08 L1486.00 241.08 L1487.00 241.08 L1488.00 241.68 L1489.00 241.73 L1490.00 241.78 L1491.00 242.33 L1492.00 242.89 L1493.00 242.89 L1494.00 242.89 L1495.00 242.89 L1496.00 242.89 L1497.00 242.89 L1498.00 242.89 L1499.00 242.89 L1500.00 242.89 L1501.00 242.89 L1502.00 242.89 L1503.00 242.89 L1504.00 242.94 L1505.00 243.00 L1506.00 243.06 L1507.00 243.06 L1508.00 243.06 L1509.00 243.06 L1510.00 243.06 L1511.00 243.06 L1512.00 243.06 L1513.00 243.06 L1514.00 243.06 L1515.00 243.06 L1516.00 243.06 L1517.00 243.06 L1518.00 243.06 L1519.00 243.06 L1520.00 243.06 L1521.00 243.06 L1522.00 243.06 L1523.00 243.06 L1524.00 243.06 L1525.00 242.93 L1526.00 242.80 L1527.00 242.67 L1528.00 242.67 L1529.00 242.67 L1530.00 242.67 L1531.00 242.67 L1532.00 242.67 L1533.00 242.67 L1534.00 242.93 L1535.00 243.18 L1536.00 243.44 L1537.00 243.44 L1538.00 243.35 L1539.00 242.72 L1540.00 242.09 L1541.00 242.64 L1542.00 243.18 L1543.00 243.18 L1544.00 243.18 L1545.00 242.62 L1546.00 242.06 L1547.00 240.63 L1548.00 240.31 L1549.00 239.99 L1550.00 240.55 L1551.00 240.55 L1552.00 240.55 L1553.00 240.55 L1554.00 240.55 L1555.00 240.55 L1556.00 240.62 L1557.00 240.70 L1558.00 240.77 L1559.00 240.77 L1560.00 240.77 L1561.00 240.77 L1562.00 240.77 L1563.00 241.43 L1564.00 242.10 L1565.00 242.77 L1566.00 242.77 L1567.00 242.77 L1568.00 242.77 L1569.00 242.77 L1570.00 242.77 L1571.00 242.77 L1572.00 242.77 L1573.00 242.77 L1574.00 242.77 L1575.00 242.77 L1576.00 242.90 L1577.00 243.03 L1578.00 243.16 L1579.00 243.16 L1580.00 243.16 L1581.00 243.16 L1582.00 243.16 L1583.00 242.07 L1584.00 240.99 L1585.00 242.07 L1586.00 243.16 L1587.00 243.16 L1588.00 243.16 L1589.00 243.16 L1590.00 243.16 L1591.00 242.42 L1592.00 241.68 L1593.00 242.53 L1594.00 243.34 L1595.00 243.34 L1596.00 243.34 L1597.00 243.34 L1598.00 243.34 L1599.00 243.34 L1600.00 243.34 L1601.00 243.34 L1602.00 243.34 L1603.00 242.55 L1604.00 241.77 L1605.00 240.99 L1606.00 240.99 L1607.00 240.99 L1608.00 240.99 L1609.00 240.99 L1610.00 240.99 L1611.00 240.99 L1612.00 240.99 L1613.00 240.99 L1614.00 240.99 L1615.00 240.99 L1616.00 240.99 L1617.00 240.99 L1618.00 240.99 L1619.00 240.99 L1620.00 240.99 L1621.00 240.99 L1622.00 240.99 L1623.00 240.99 L1624.00 240.99 L1625.00 240.99 L1626.00 240.91 L1627.00 240.84 L1628.00 240.77 L1629.00 240.77 L1630.00 240.77 L1631.00 240.77 L1632.00 240.77 L1633.00 240.77 L1634.00 240.77 L1635.00 240.77 L1636.00 240.77 L1637.00 240.77 L1638.00 240.77 L1639.00 240.77 L1640.00 239.92 L1641.00 239.08 L1642.00 239.92 L1643.00 240.77 L1644.00 240.77 L1645.00 241.36 L1646.00 241.95 L1647.00 242.55 L1648.00 242.55 L1649.00 242.55 L1650.00 242.55 L1651.00 242.55 L1652.00 242.55 L1653.00 242.55 L1654.00 242.55 L1655.00 242.55 L1656.00 242.55 L1657.00 242.55 L1658.00 242.55 L1659.00 242.55 L1660.00 242.55 L1661.00 242.55 L1662.00 242.55 L1663.00 242.55 L1664.00 242.55 L1665.00 242.55 L1666.00 242.55 L1667.00 242.55 L1668.00 242.55 L1669.00 242.55 L1670.00 242.55 L1671.00 242.55 L1672.00 242.55 L1673.00 242.80 L1674.00 243.05 L1675.00 243.30 L1676.00 243.30 L1677.00 243.30 L1678.00 243.30 L1679.00 243.30 L1680.00 243.30 L1681.00 243.30 L1682.00 243.30 L1683.00 243.30 L1684.00 243.30 L1685.00 243.30 L1686.00 242.60 L1687.00 241.90 L1688.00 242.60 L1689.00 243.30 L1690.00 243.30 L1691.00 243.30 L1692.00 243.30 L1693.00 243.30 L1694.00 243.30 L1695.00 243.30 L1696.00 243.30 L1697.00 243.30 L1698.00 243.30 L1699.00 243.30 L1700.00 243.30 L1701.00 243.30 L1702.00 243.13 L1703.00 242.95 L1704.00 242.78 L1705.00 242.78 L1706.00 242.78 L1707.00 242.78 L1708.00 242.78 L1709.00 242.78 L1710.00 242.78 L1711.00 242.78 L1712.00 242.78 L1713.00 242.78 L1714.00 242.78 L1715.00 242.78 L1716.00 242.78 L1717.00 242.78 L1718.00 242.78 L1719.00 242.78 L1720.00 242.78 L1721.00 242.78 L1722.00 242.78 L1723.00 242.78 L1724.00 242.78 L1725.00 242.78 L1726.00 242.78 L1727.00 242.78 L1728.00 242.78 L1729.00 242.78 L1730.00 242.98 L1731.00 243.18 L1732.00 243.38 L1733.00 243.38 L1734.00 243.38 L1735.00 243.38 L1736.00 243.38 L1737.00 243.38 L1738.00 243.38 L1739.00 243.38 L1740.00 243.38 L1741.00 243.38 L1742.00 243.38 L1743.00 243.38 L1744.00 243.38 L1745.00 242.66 L1746.00 241.94 L1747.00 241.22 L1748.00 241.22 L1749.00 241.22 L1750.00 241.22 L1751.00 241.22 L1752.00 241.22 L1753.00 241.22 L1754.00 241.22 L1755.00 241.22 L1756.00 241.22 L1757.00 241.22 L1758.00 241.22 L1759.00 241.22 L1760.00 241.22 L1761.00 241.22 L1762.00 241.22 L1763.00 241.22 L1764.00 241.22 L1765.00 241.22 L1766.00 241.22 L1767.00 241.95 L1768.00 242.67 L1769.00 243.40 L1770.00 243.40 L1771.00 243.40 L1772.00 243.40 L1773.00 243.40 L1774.00 243.40 L1775.00 243.40 L1776.00 243.40 L1777.00 243.40 L1778.00 243.40 L1779.00 243.40 L1780.00 243.40 L1781.00 243.40 L1782.00 243.40 L1783.00 243.40 L1784.00 243.40 L1785.00 243.40 L1786.00 243.40 L1787.00 243.40 L1788.00 243.40 L1789.00 243.40 L1790.00 242.72 L1791.00 242.03 L1792.00 242.72 L1793.00 243.40 L1794.00 243.40 L1795.00 243.40 L1796.00 243.40 L1797.00 243.09 L1798.00 242.78 L1799.00 242.47 L1800.00 242.47 L1801.00 242.47 L1802.00 242.47 L1803.00 242.47 L1804.00 242.47 L1805.00 242.47 L1806.00 242.47 L1807.00 242.47 L1808.00 241.90 L1809.00 241.33 L1810.00 240.76 L1811.00 240.76 L1812.00 240.76 L1813.00 240.76 L1814.00 240.76 L1815.00 240.76 L1816.00 240.76 L1817.00 240.76 L1818.00 240.76 L1819.00 240.76 L1820.00 240.76 L1821.00 240.76 L1822.00 240.76 L1823.00 240.76 L1824.00 240.76 L1825.00 240.76 L1826.00 240.76 L1827.00 240.76 L1828.00 240.76 L1829.00 241.64 L1830.00 242.52 L1831.00 243.40 L1832.00 243.40 L1833.00 243.40 L1834.00 243.40 L1835.00 243.40 L1836.00 243.40 L1837.00 243.40 L1838.00 243.40 L1839.00 243.40 L1840.00 243.40 L1841.00 243.40 L1842.00 243.40 L1843.00 243.40 L1844.00 243.40 L1845.00 243.05 L1846.00 242.71 L1847.00 242.36 L1848.00 242.36 L1849.00 242.36 L1850.00 242.36 L1851.00 242.36 L1852.00 242.36 L1853.00 242.36 L1854.00 242.36 L1855.00 242.36 L1856.00 242.36 L1857.00 242.36 L1858.00 242.36 L1859.00 242.36 L1860.00 242.36 L1861.00 242.36 L1862.00 242.36 L1863.00 242.36 L1864.00 242.36 L1865.00 242.36 L1866.00 242.36 L1867.00 242.73 L1868.00 243.10 L1869.00 242.44 L1870.00 241.41 L1871.00 242.44 L1872.00 243.47 L1873.00 243.47 L1874.00 243.47 L1875.00 243.47 L1876.00 243.47 L1877.00 243.47 L1878.00 243.47 L1879.00 243.47 L1880.00 243.47 L1881.00 243.47 L1882.00 243.47 L1883.00 243.47 L1884.00 243.47 L1885.00 243.47 L1886.00 243.47 L1887.00 243.47 L1888.00 242.95 L1889.00 242.44 L1890.00 241.92 L1891.00 242.23 L1892.00 242.19 L1893.00 242.14 L1894.00 241.79 L1895.00 242.14 L1896.00 242.49 L1897.00 242.85 L1898.00 242.85 L1899.00 242.85 L1900.00 242.85 L1901.00 242.85 L1902.00 242.85 L1903.00 242.85 L1904.00 242.85 L1905.00 242.85 L1906.00 242.85 L1907.00 242.85 L1908.00 242.81 L1909.00 242.77 L1910.00 242.73 L1911.00 242.73 L1912.00 242.73 L1913.00 242.73 L1914.00 242.73 L1915.00 242.73 L1916.00 242.73 L1917.00 242.73 L1918.00 242.73 L1919.00 242.73 L1920.00 242.73 L1921.00 242.73 L1922.00 242.73 L1923.00 242.73 L1924.00 242.73 L1925.00 242.73 L1926.00 242.73 L1927.00 242.73 L1928.00 242.73 L1929.00 242.76 L1930.00 242.78 L1931.00 242.81 L1932.00 242.81 L1933.00 242.81 L1934.00 242.81 L1935.00 242.81 L1936.00 242.81 L1937.00 242.81 L1938.00 242.81 L1939.00 242.81 L1940.00 242.81 L1941.00 242.81 L1942.00 242.81 L1943.00 242.81 L1944.00 242.81 L1945.00 242.81 L1946.00 242.81 L1947.00 242.81 L1948.00 242.81 L1949.00 242.81 L1950.00 242.81 L1951.00 242.81 L1952.00 242.81 L1953.00 242.75 L1954.00 242.69 L1955.00 242.63 L1956.00 241.85 L1957.00 241.06 L1958.00 241.85 L1959.00 242.88 L1960.00 243.13 L1961.00 243.38 L1962.00 243.38 L1963.00 243.38 L1964.00 243.38 L1965.00 243.38 L1966.00 243.22 L1967.00 243.07 L1968.00 242.91 L1969.00 242.91 L1970.00 242.91 L1971.00 242.84 L1972.00 242.76 L1973.00 242.69 L1974.00 242.69 L1975.00 242.69 L1976.00 241.85 L1977.00 241.01 L1978.00 240.17 L1979.00 240.17 L1980.00 240.17 L1981.00 240.17 L1982.00 240.17 L1983.00 240.17 L1984.00 240.17 L1985.00 240.17 L1986.00 240.17 L1987.00 240.17 L1988.00 240.17 L1989.00 240.29 L1990.00 240.41 L1991.00 240.53 L1992.00 240.53 L1993.00 240.53 L1994.00 240.53 L1995.00 240.53 L1996.00 240.53 L1997.00 240.53 L1998.00 240.53 L1999.00 240.53 L2000.00 240.53 L2001.00 240.53 L2002.00 240.53 L2003.00 240.53 L2004.00 240.53 L2005.00 240.53 L2006.00 240.53 L2007.00 240.53 L2008.00 240.53 L2009.00 240.53 L2010.00 240.53 L2011.00 240.53 L2011.00 251.88 L2010.00 251.88 L2009.00 251.88 L2008.00 251.88 L2007.00 251.88 L2006.00 251.88 L2005.00 251.88 L2004.00 251.88 L2003.00 251.69 L2002.00 251.50 L2001.00 251.31 L2000.00 251.31 L1999.00 251.31 L1998.00 251.31 L1997.00 251.31 L1996.00 251.31 L1995.00 251.31 L1994.00 251.31 L1993.00 251.31 L1992.00 251.31 L1991.00 251.31 L1990.00 251.31 L1989.00 251.31 L1988.00 251.31 L1987.00 251.31 L1986.00 251.31 L1985.00 251.31 L1984.00 251.31 L1983.00 251.31 L1982.00 251.32 L1981.00 251.32 L1980.00 251.32 L1979.00 251.32 L1978.00 251.32 L1977.00 251.32 L1976.00 251.32 L1975.00 251.32 L1974.00 251.32 L1973.00 251.32 L1972.00 251.32 L1971.00 251.32 L1970.00 251.32 L1969.00 251.32 L1968.00 251.32 L1967.00 251.32 L1966.00 251.32 L1965.00 251.32 L1964.00 251.32 L1963.00 251.23 L1962.00 251.14 L1961.00 251.05 L1960.00 251.05 L1959.00 251.05 L1958.00 251.05 L1957.00 251.05 L1956.00 251.05 L1955.00 251.05 L1954.00 251.05 L1953.00 251.05 L1952.00 251.05 L1951.00 251.05 L1950.00 251.05 L1949.00 251.05 L1948.00 251.05 L1947.00 251.96 L1946.00 252.87 L1945.00 253.78 L1944.00 253.78 L1943.00 253.78 L1942.00 253.78 L1941.00 253.78 L1940.00 253.78 L1939.00 253.78 L1938.00 253.78 L1937.00 252.84 L1936.00 251.90 L1935.00 250.95 L1934.00 250.95 L1933.00 250.95 L1932.00 250.95 L1931.00 250.95 L1930.00 250.95 L1929.00 250.95 L1928.00 250.95 L1927.00 250.95 L1926.00 250.95 L1925.00 250.95 L1924.00 250.95 L1923.00 250.95 L1922.00 250.95 L1921.00 250.95 L1920.00 250.95 L1919.00 250.95 L1918.00 250.95 L1917.00 250.95 L1916.00 250.95 L1915.00 250.95 L1914.00 250.95 L1913.00 250.95 L1912.00 250.95 L1911.00 250.95 L1910.00 250.95 L1909.00 251.55 L1908.00 252.15 L1907.00 251.83 L1906.00 251.50 L1905.00 251.77 L1904.00 251.77 L1903.00 251.77 L1902.00 251.77 L1901.00 251.77 L1900.00 251.77 L1899.00 251.77 L1898.00 251.77 L1897.00 251.77 L1896.00 251.77 L1895.00 251.77 L1894.00 251.77 L1893.00 251.77 L1892.00 251.77 L1891.00 251.77 L1890.00 251.77 L1889.00 251.77 L1888.00 251.77 L1887.00 251.77 L1886.00 251.77 L1885.00 251.77 L1884.00 251.77 L1883.00 251.77 L1882.00 251.77 L1881.00 252.62 L1880.00 253.46 L1879.00 254.31 L1878.00 254.31 L1877.00 254.31 L1876.00 254.31 L1875.00 254.31 L1874.00 254.31 L1873.00 254.31 L1872.00 254.31 L1871.00 254.31 L1870.00 254.31 L1869.00 254.31 L1868.00 254.31 L1867.00 254.31 L1866.00 253.34 L1865.00 252.37 L1864.00 251.40 L1863.00 251.40 L1862.00 251.40 L1861.00 251.40 L1860.00 251.40 L1859.00 251.40 L1858.00 251.40 L1857.00 251.40 L1856.00 251.40 L1855.00 251.40 L1854.00 251.40 L1853.00 251.40 L1852.00 251.40 L1851.00 251.40 L1850.00 251.40 L1849.00 251.40 L1848.00 251.40 L1847.00 251.40 L1846.00 251.40 L1845.00 251.40 L1844.00 251.36 L1843.00 251.32 L1842.00 251.28 L1841.00 251.28 L1840.00 251.28 L1839.00 251.28 L1838.00 251.28 L1837.00 251.28 L1836.00 251.28 L1835.00 251.28 L1834.00 251.28 L1833.00 251.28 L1832.00 251.28 L1831.00 251.28 L1830.00 251.28 L1829.00 251.28 L1828.00 251.28 L1827.00 251.28 L1826.00 251.28 L1825.00 252.12 L1824.00 252.97 L1823.00 252.12 L1822.00 251.28 L1821.00 252.30 L1820.00 253.33 L1819.00 254.36 L1818.00 254.36 L1817.00 254.36 L1816.00 254.36 L1815.00 254.36 L1814.00 254.36 L1813.00 254.36 L1812.00 254.36 L1811.00 254.36 L1810.00 254.36 L1809.00 254.36 L1808.00 254.36 L1807.00 254.36 L1806.00 254.36 L1805.00 254.36 L1804.00 254.01 L1803.00 253.66 L1802.00 253.31 L1801.00 253.31 L1800.00 253.31 L1799.00 253.31 L1798.00 253.31 L1797.00 253.31 L1796.00 253.31 L1795.00 253.31 L1794.00 253.31 L1793.00 253.31 L1792.00 253.31 L1791.00 253.31 L1790.00 253.31 L1789.00 253.31 L1788.00 253.31 L1787.00 253.31 L1786.00 253.31 L1785.00 253.31 L1784.00 253.31 L1783.00 253.31 L1782.00 253.39 L1781.00 254.44 L1780.00 255.48 L1779.00 254.51 L1778.00 253.55 L1777.00 253.55 L1776.00 253.55 L1775.00 253.55 L1774.00 253.55 L1773.00 253.55 L1772.00 253.55 L1771.00 253.55 L1770.00 254.14 L1769.00 254.74 L1768.00 254.14 L1767.00 253.55 L1766.00 253.55 L1765.00 253.55 L1764.00 253.55 L1763.00 253.55 L1762.00 253.55 L1761.00 253.55 L1760.00 253.55 L1759.00 253.55 L1758.00 253.55 L1757.00 253.55 L1756.00 253.49 L1755.00 253.44 L1754.00 253.39 L1753.00 253.39 L1752.00 253.39 L1751.00 253.39 L1750.00 253.39 L1749.00 253.39 L1748.00 253.39 L1747.00 253.39 L1746.00 253.39 L1745.00 253.39 L1744.00 253.39 L1743.00 253.32 L1742.00 253.24 L1741.00 253.16 L1740.00 253.16 L1739.00 253.16 L1738.00 253.16 L1737.00 253.16 L1736.00 253.16 L1735.00 253.16 L1734.00 253.16 L1733.00 253.16 L1732.00 253.16 L1731.00 253.16 L1730.00 253.16 L1729.00 253.16 L1728.00 253.16 L1727.00 253.12 L1726.00 253.07 L1725.00 253.03 L1724.00 253.03 L1723.00 253.03 L1722.00 253.03 L1721.00 253.03 L1720.00 253.03 L1719.00 253.03 L1718.00 253.03 L1717.00 253.03 L1716.00 253.03 L1715.00 253.03 L1714.00 253.03 L1713.00 253.03 L1712.00 253.03 L1711.00 253.03 L1710.00 253.03 L1709.00 253.03 L1708.00 253.03 L1707.00 253.03 L1706.00 253.43 L1705.00 253.84 L1704.00 254.24 L1703.00 254.24 L1702.00 254.24 L1701.00 254.24 L1700.00 254.24 L1699.00 254.24 L1698.00 254.24 L1697.00 254.24 L1696.00 254.24 L1695.00 254.24 L1694.00 253.19 L1693.00 252.14 L1692.00 251.09 L1691.00 251.09 L1690.00 251.09 L1689.00 251.09 L1688.00 251.09 L1687.00 251.09 L1686.00 251.09 L1685.00 251.09 L1684.00 251.09 L1683.00 251.09 L1682.00 251.09 L1681.00 251.09 L1680.00 251.09 L1679.00 251.09 L1678.00 251.35 L1677.00 251.60 L1676.00 251.85 L1675.00 251.85 L1674.00 251.85 L1673.00 251.85 L1672.00 251.85 L1671.00 251.85 L1670.00 251.85 L1669.00 251.85 L1668.00 251.85 L1667.00 251.85 L1666.00 251.85 L1665.00 251.85 L1664.00 251.85 L1663.00 251.85 L1662.00 251.85 L1661.00 251.85 L1660.00 251.85 L1659.00 251.85 L1658.00 251.85 L1657.00 251.85 L1656.00 251.85 L1655.00 251.85 L1654.00 251.85 L1653.00 251.85 L1652.00 251.88 L1651.00 251.90 L1650.00 251.93 L1649.00 251.93 L1648.00 251.93 L1647.00 251.93 L1646.00 251.93 L1645.00 251.93 L1644.00 251.93 L1643.00 252.56 L1642.00 253.19 L1641.00 253.83 L1640.00 253.83 L1639.00 253.83 L1638.00 253.83 L1637.00 253.83 L1636.00 253.83 L1635.00 253.83 L1634.00 253.83 L1633.00 253.83 L1632.00 253.83 L1631.00 253.83 L1630.00 253.83 L1629.00 253.83 L1628.00 253.56 L1627.00 253.29 L1626.00 253.02 L1625.00 253.02 L1624.00 253.02 L1623.00 253.02 L1622.00 253.02 L1621.00 253.02 L1620.00 253.02 L1619.00 253.02 L1618.00 253.02 L1617.00 253.02 L1616.00 253.02 L1615.00 253.02 L1614.00 253.02 L1613.00 253.02 L1612.00 253.02 L1611.00 253.02 L1610.00 253.02 L1609.00 253.02 L1608.00 253.02 L1607.00 253.02 L1606.00 253.56 L1605.00 254.10 L1604.00 253.56 L1603.00 253.16 L1602.00 253.29 L1601.00 253.43 L1600.00 253.43 L1599.00 253.43 L1598.00 254.13 L1597.00 254.84 L1596.00 255.54 L1595.00 254.84 L1594.00 254.13 L1593.00 253.43 L1592.00 253.43 L1591.00 253.43 L1590.00 253.43 L1589.00 253.43 L1588.00 253.43 L1587.00 253.43 L1586.00 253.43 L1585.00 253.43 L1584.00 253.43 L1583.00 253.43 L1582.00 253.43 L1581.00 253.43 L1580.00 252.84 L1579.00 252.24 L1578.00 251.64 L1577.00 251.64 L1576.00 251.64 L1575.00 251.64 L1574.00 251.64 L1573.00 251.98 L1572.00 252.32 L1571.00 252.66 L1570.00 252.32 L1569.00 251.98 L1568.00 251.56 L1567.00 251.48 L1566.00 251.40 L1565.00 251.40 L1564.00 251.40 L1563.00 251.40 L1562.00 251.40 L1561.00 251.40 L1560.00 251.40 L1559.00 251.40 L1558.00 251.40 L1557.00 251.40 L1556.00 251.40 L1555.00 251.40 L1554.00 251.40 L1553.00 251.40 L1552.00 251.40 L1551.00 251.40 L1550.00 251.40 L1549.00 251.40 L1548.00 251.40 L1547.00 251.40 L1546.00 251.40 L1545.00 251.40 L1544.00 251.40 L1543.00 251.80 L1542.00 252.21 L1541.00 252.62 L1540.00 252.21 L1539.00 251.76 L1538.00 251.31 L1537.00 251.27 L1536.00 251.27 L1535.00 251.27 L1534.00 251.27 L1533.00 251.27 L1532.00 251.27 L1531.00 251.27 L1530.00 251.27 L1529.00 251.27 L1528.00 251.52 L1527.00 251.77 L1526.00 252.01 L1525.00 252.01 L1524.00 252.01 L1523.00 252.01 L1522.00 252.01 L1521.00 252.01 L1520.00 252.01 L1519.00 252.01 L1518.00 252.01 L1517.00 252.01 L1516.00 252.01 L1515.00 252.01 L1514.00 252.01 L1513.00 252.01 L1512.00 252.01 L1511.00 252.01 L1510.00 252.01 L1509.00 252.01 L1508.00 252.01 L1507.00 252.01 L1506.00 252.01 L1505.00 252.01 L1504.00 252.01 L1503.00 252.01 L1502.00 252.01 L1501.00 252.01 L1500.00 252.01 L1499.00 251.65 L1498.00 251.28 L1497.00 250.91 L1496.00 250.91 L1495.00 250.91 L1494.00 251.37 L1493.00 251.83 L1492.00 252.29 L1491.00 251.83 L1490.00 251.37 L1489.00 250.91 L1488.00 250.91 L1487.00 250.91 L1486.00 250.91 L1485.00 250.91 L1484.00 250.91 L1483.00 250.91 L1482.00 251.47 L1481.00 252.03 L1480.00 251.47 L1479.00 250.91 L1478.00 250.91 L1477.00 250.91 L1476.00 250.91 L1475.00 250.91 L1474.00 250.91 L1473.00 250.91 L1472.00 250.91 L1471.00 250.91 L1470.00 250.91 L1469.00 251.14 L1468.00 251.37 L1467.00 251.60 L1466.00 251.60 L1465.00 251.60 L1464.00 251.60 L1463.00 251.60 L1462.00 251.60 L1461.00 251.60 L1460.00 251.60 L1459.00 251.60 L1458.00 251.60 L1457.00 251.60 L1456.00 251.60 L1455.00 251.60 L1454.00 251.60 L1453.00 251.60 L1452.00 251.60 L1451.00 251.60 L1450.00 251.60 L1449.00 251.60 L1448.00 251.53 L1447.00 251.46 L1446.00 251.39 L1445.00 251.39 L1444.00 252.20 L1443.00 253.01 L1442.00 252.20 L1441.00 251.39 L1440.00 251.39 L1439.00 251.39 L1438.00 251.39 L1437.00 251.39 L1436.00 251.39 L1435.00 251.39 L1434.00 251.39 L1433.00 251.39 L1432.00 251.39 L1431.00 251.39 L1430.00 251.39 L1429.00 251.39 L1428.00 251.39 L1427.00 251.39 L1426.00 251.39 L1425.00 251.39 L1424.00 251.39 L1423.00 251.39 L1422.00 251.39 L1421.00 251.61 L1420.00 251.83 L1419.00 252.04 L1418.00 252.04 L1417.00 252.04 L1416.00 252.04 L1415.00 252.04 L1414.00 252.04 L1413.00 252.04 L1412.00 251.89 L1411.00 251.73 L1410.00 251.58 L1409.00 251.58 L1408.00 251.58 L1407.00 251.58 L1406.00 251.58 L1405.00 251.58 L1404.00 251.58 L1403.00 251.58 L1402.00 251.58 L1401.00 251.58 L1400.00 251.58 L1399.00 251.58 L1398.00 251.58 L1397.00 251.58 L1396.00 251.58 L1395.00 251.58 L1394.00 251.58 L1393.00 251.58 L1392.00 251.58 L1391.00 251.58 L1390.00 251.58 L1389.00 251.58 L1388.00 251.58 L1387.00 251.58 L1386.00 251.58 L1385.00 251.58 L1384.00 251.58 L1383.00 251.58 L1382.00 251.59 L1381.00 251.61 L1380.00 251.63 L1379.00 251.63 L1378.00 251.63 L1377.00 251.63 L1376.00 251.63 L1375.00 251.63 L1374.00 251.63 L1373.00 251.63 L1372.00 251.63 L1371.00 251.63 L1370.00 252.32 L1369.00 253.00 L1368.00 253.68 L1367.00 253.68 L1366.00 253.68 L1365.00 253.68 L1364.00 254.77 L1363.00 255.85 L1362.00 254.77 L1361.00 253.68 L1360.00 253.68 L1359.00 253.68 L1358.00 253.68 L1357.00 253.68 L1356.00 253.68 L1355.00 253.68 L1354.00 253.68 L1353.00 253.68 L1352.00 253.68 L1351.00 253.68 L1350.00 254.39 L1349.00 255.10 L1348.00 255.24 L1347.00 253.96 L1346.00 252.67 L1345.00 251.96 L1344.00 251.96 L1343.00 251.96 L1342.00 251.96 L1341.00 251.96 L1340.00 251.96 L1339.00 251.96 L1338.00 251.96 L1337.00 251.96 L1336.00 251.96 L1335.00 251.96 L1334.00 251.96 L1333.00 251.96 L1332.00 251.96 L1331.00 251.96 L1330.00 251.93 L1329.00 251.89 L1328.00 251.86 L1327.00 251.86 L1326.00 251.86 L1325.00 251.86 L1324.00 251.86 L1323.00 251.86 L1322.00 251.86 L1321.00 251.86 L1320.00 251.86 L1319.00 251.86 L1318.00 251.86 L1317.00 251.86 L1316.00 251.86 L1315.00 251.86 L1314.00 251.86 L1313.00 251.86 L1312.00 251.87 L1311.00 251.87 L1310.00 251.88 L1309.00 251.88 L1308.00 251.88 L1307.00 251.88 L1306.00 251.88 L1305.00 251.88 L1304.00 251.88 L1303.00 252.71 L1302.00 253.54 L1301.00 252.71 L1300.00 251.88 L1299.00 251.88 L1298.00 251.88 L1297.00 251.88 L1296.00 251.88 L1295.00 252.60 L1294.00 253.33 L1293.00 252.60 L1292.00 251.88 L1291.00 251.88 L1290.00 251.88 L1289.00 251.88 L1288.00 252.28 L1287.00 252.68 L1286.00 253.08 L1285.00 253.08 L1284.00 253.08 L1283.00 253.08 L1282.00 253.08 L1281.00 253.08 L1280.00 253.08 L1279.00 253.08 L1278.00 253.08 L1277.00 253.08 L1276.00 253.64 L1275.00 254.19 L1274.00 253.64 L1273.00 253.08 L1272.00 253.08 L1271.00 253.08 L1270.00 253.93 L1269.00 254.78 L1268.00 254.81 L1267.00 254.84 L1266.00 254.49 L1265.00 253.88 L1264.00 253.88 L1263.00 253.88 L1262.00 253.88 L1261.00 253.88 L1260.00 253.88 L1259.00 253.88 L1258.00 253.88 L1257.00 253.88 L1256.00 253.88 L1255.00 253.88 L1254.00 253.88 L1253.00 253.88 L1252.00 253.88 L1251.00 253.88 L1250.00 254.33 L1249.00 254.78 L1248.00 255.24 L1247.00 254.78 L1246.00 254.33 L1245.00 253.73 L1244.00 253.58 L1243.00 253.42 L1242.00 253.42 L1241.00 253.42 L1240.00 253.42 L1239.00 253.42 L1238.00 253.42 L1237.00 253.42 L1236.00 254.05 L1235.00 254.67 L1234.00 255.29 L1233.00 255.35 L1232.00 255.42 L1231.00 255.48 L1230.00 254.79 L1229.00 254.11 L1228.00 253.45 L1227.00 253.47 L1226.00 253.50 L1225.00 253.50 L1224.00 253.50 L1223.00 253.50 L1222.00 253.50 L1221.00 253.50 L1220.00 253.50 L1219.00 253.50 L1218.00 253.50 L1217.00 253.00 L1216.00 252.50 L1215.00 252.00 L1214.00 252.00 L1213.00 252.68 L1212.00 253.36 L1211.00 254.05 L1210.00 254.05 L1209.00 254.05 L1208.00 254.05 L1207.00 254.05 L1206.00 254.05 L1205.00 253.16 L1204.00 252.28 L1203.00 251.40 L1202.00 251.40 L1201.00 251.40 L1200.00 251.40 L1199.00 251.40 L1198.00 251.40 L1197.00 251.40 L1196.00 251.40 L1195.00 251.40 L1194.00 251.40 L1193.00 251.40 L1192.00 251.40 L1191.00 251.40 L1190.00 251.40 L1189.00 251.40 L1188.00 251.40 L1187.00 251.53 L1186.00 251.67 L1185.00 251.80 L1184.00 251.80 L1183.00 251.80 L1182.00 251.80 L1181.00 251.80 L1180.00 251.80 L1179.00 251.80 L1178.00 251.80 L1177.00 251.80 L1176.00 252.61 L1175.00 253.42 L1174.00 254.24 L1173.00 254.24 L1172.00 254.24 L1171.00 254.24 L1170.00 254.24 L1169.00 254.24 L1168.00 254.24 L1167.00 254.24 L1166.00 254.24 L1165.00 254.24 L1164.00 254.24 L1163.00 254.24 L1162.00 254.91 L1161.00 255.58 L1160.00 254.91 L1159.00 254.24 L1158.00 254.24 L1157.00 254.24 L1156.00 253.20 L1155.00 252.16 L1154.00 251.13 L1153.00 251.13 L1152.00 251.13 L1151.00 251.13 L1150.00 251.13 L1149.00 251.13 L1148.00 251.13 L1147.00 251.13 L1146.00 251.13 L1145.00 251.13 L1144.00 251.13 L1143.00 251.85 L1142.00 252.57 L1141.00 253.30 L1140.00 253.30 L1139.00 253.30 L1138.00 253.30 L1137.00 253.30 L1136.00 253.30 L1135.00 253.30 L1134.00 253.30 L1133.00 253.30 L1132.00 253.30 L1131.00 253.30 L1130.00 253.30 L1129.00 253.30 L1128.00 253.30 L1127.00 253.30 L1126.00 252.65 L1125.00 252.01 L1124.00 251.36 L1123.00 251.36 L1122.00 251.36 L1121.00 251.31 L1120.00 251.25 L1119.00 251.19 L1118.00 251.19 L1117.00 251.19 L1116.00 251.19 L1115.00 251.19 L1114.00 251.19 L1113.00 251.19 L1112.00 251.19 L1111.00 251.19 L1110.00 251.19 L1109.00 251.19 L1108.00 251.19 L1107.00 251.19 L1106.00 251.19 L1105.00 251.19 L1104.00 251.19 L1103.00 251.19 L1102.00 251.19 L1101.00 251.19 L1100.00 251.19 L1099.00 251.19 L1098.00 251.19 L1097.00 251.19 L1096.00 251.19 L1095.00 251.19 L1094.00 251.48 L1093.00 251.76 L1092.00 252.04 L1091.00 252.04 L1090.00 252.04 L1089.00 252.04 L1088.00 252.04 L1087.00 252.04 L1086.00 252.04 L1085.00 252.04 L1084.00 252.04 L1083.00 252.04 L1082.00 252.04 L1081.00 252.04 L1080.00 252.02 L1079.00 251.99 L1078.00 251.97 L1077.00 251.97 L1076.00 251.97 L1075.00 251.97 L1074.00 251.97 L1073.00 251.97 L1072.00 251.97 L1071.00 252.61 L1070.00 253.25 L1069.00 253.86 L1068.00 253.18 L1067.00 252.51 L1066.00 251.83 L1065.00 251.79 L1064.00 251.76 L1063.00 251.72 L1062.00 251.68 L1061.00 252.41 L1060.00 253.14 L1059.00 253.87 L1058.00 253.83 L1057.00 253.79 L1056.00 253.76 L1055.00 253.72 L1054.00 253.69 L1053.00 253.65 L1052.00 253.62 L1051.00 253.58 L1050.00 253.54 L1049.00 253.49 L1048.00 253.43 L1047.00 253.37 L1046.00 253.34 L1045.00 253.30 L1044.00 253.26 L1043.00 253.23 L1042.00 253.19 L1041.00 253.16 L1040.00 253.12 L1039.00 253.09 L1038.00 253.05 L1037.00 253.01 L1036.00 252.98 L1035.00 252.94 L1034.00 252.91 L1033.00 252.87 L1032.00 252.84 L1031.00 252.80 L1030.00 252.76 L1029.00 252.73 L1028.00 252.69 L1027.00 252.66 L1026.00 252.65 L1025.00 252.64 L1024.00 252.62 L1023.00 252.59 L1022.00 252.55 L1021.00 252.52 L1020.00 252.40 L1019.00 252.28 L1018.00 252.16 L1017.00 252.12 L1016.00 252.09 L1015.00 252.05 L1014.00 252.02 L1013.00 251.95 L1012.00 251.88 L1011.00 251.81 L1010.00 251.74 L1009.00 251.67 L1008.00 251.60 L1007.00 251.53 L1006.00 251.46 L1005.00 251.39 L1004.00 251.32 L1003.00 251.25 L1002.00 250.47 L1001.00 249.70 L1000.00 248.92 L999.00 248.85 L998.00 248.78 L997.00 248.71 L996.00 248.64 L995.00 248.57 L994.00 248.50 L993.00 249.13 L992.00 249.77 L991.00 250.40 L990.00 249.63 L989.00 248.85 L988.00 248.08 L987.00 248.01 L986.00 247.94 L985.00 248.66 L984.00 249.38 L983.00 248.52 L982.00 247.66 L981.00 247.59 L980.00 247.52 L979.00 247.45 L978.00 247.38 L977.00 247.31 L976.00 247.24 L975.00 247.17 L974.00 247.10 L973.00 247.52 L972.00 247.95 L971.00 248.37 L970.00 248.30 L969.00 248.23 L968.00 248.16 L967.00 248.09 L966.00 248.04 L965.00 247.98 L964.00 247.93 L963.00 247.87 L962.00 247.82 L961.00 248.32 L960.00 248.33 L959.00 248.34 L958.00 247.22 L957.00 246.60 L956.00 245.99 L955.00 245.93 L954.00 245.88 L953.00 245.82 L952.00 245.77 L951.00 245.72 L950.00 245.66 L949.00 245.61 L948.00 245.42 L947.00 245.23 L946.00 245.04 L945.00 244.99 L944.00 244.93 L943.00 244.88 L942.00 244.83 L941.00 245.75 L940.00 246.67 L939.00 245.84 L938.00 245.01 L937.00 245.16 L936.00 245.11 L935.00 245.05 L934.00 245.00 L933.00 244.94 L932.00 244.89 L931.00 244.83 L930.00 244.78 L929.00 244.73 L928.00 244.67 L927.00 244.62 L926.00 244.56 L925.00 244.51 L924.00 244.45 L923.00 244.40 L922.00 244.35 L921.00 244.29 L920.00 244.25 L919.00 244.21 L918.00 244.17 L917.00 244.13 L916.00 244.08 L915.00 244.04 L914.00 244.00 L913.00 243.96 L912.00 243.92 L911.00 243.88 L910.00 244.15 L909.00 244.43 L908.00 244.71 L907.00 244.67 L906.00 244.62 L905.00 244.58 L904.00 244.54 L903.00 244.50 L902.00 244.46 L901.00 244.42 L900.00 244.38 L899.00 244.34 L898.00 244.29 L897.00 244.25 L896.00 244.21 L895.00 244.17 L894.00 244.13 L893.00 244.09 L892.00 244.05 L891.00 244.00 L890.00 243.96 L889.00 243.92 L888.00 243.38 L887.00 242.84 L886.00 242.30 L885.00 242.25 L884.00 242.21 L883.00 242.17 L882.00 242.13 L881.00 242.09 L880.00 242.05 L879.00 242.93 L878.00 243.81 L877.00 244.69 L876.00 244.65 L875.00 244.61 L874.00 244.71 L873.00 244.81 L872.00 244.91 L871.00 245.01 L870.00 245.11 L869.00 245.21 L868.00 245.31 L867.00 245.41 L866.00 245.51 L865.00 245.61 L864.00 245.71 L863.00 245.81 L862.00 245.91 L861.00 246.01 L860.00 246.11 L859.00 246.28 L858.00 246.45 L857.00 246.62 L856.00 246.79 L855.00 246.96 L854.00 247.13 L853.00 247.06 L852.00 247.00 L851.00 246.94 L850.00 247.11 L849.00 247.28 L848.00 247.45 L847.00 247.62 L846.00 247.79 L845.00 247.96 L844.00 248.13 L843.00 248.30 L842.00 247.75 L841.00 247.20 L840.00 246.64 L839.00 247.10 L838.00 247.56 L837.00 248.01 L836.00 248.47 L835.00 248.92 L834.00 249.38 L833.00 249.83 L832.00 250.29 L831.00 250.74 L830.00 251.03 L829.00 251.44 L828.00 251.85 L827.00 252.26 L826.00 252.55 L825.00 252.83 L824.00 253.11 L823.00 253.39 L822.00 253.67 L821.00 253.95 L820.00 254.23 L819.00 254.51 L818.00 255.32 L817.00 256.12 L816.00 256.81 L815.00 256.47 L814.00 255.98 L813.00 255.59 L812.00 255.73 L811.00 255.86 L810.00 255.99 L809.00 256.13 L808.00 256.26 L807.00 256.33Z" fill="#ef8636" stroke="#ef8636" stroke-width="0.6" stroke-linejoin="round"/><circle cx="2011.00" cy="247.20" r="4.80" fill="#ef8636"/>
</g>
<g clip-path="url(#ax1)">
<path d="M372.40 900.00 L374.10 850.60 L377.50 852.90 L381.40 850.60 L384.80 900.00 L393.20 900.00 L396.00 854.00 L400.00 900.00 L410.90 900.00 L411.70 737.50 L415.00 737.50 L416.00 560.00 L416.40 900.00 L423.20 900.00 L424.20 560.00 L425.60 900.00 L427.00 900.00 L430.20 607.50 L433.00 765.00 L435.50 738.00 L437.50 760.00 L438.80 740.00 L440.20 759.00 L443.90 685.60 L452.30 757.00 L455.89 712.45 L459.87 712.45 L465.17 705.34 L469.80 766.58 L471.79 749.71 L475.76 757.31 L479.74 740.44 L484.37 761.94 L489.01 725.87 L493.64 769.23 L496.95 729.84 L500.26 736.12 L504.24 724.55 L507.55 742.74 L511.52 730.51 L516.16 740.26 L519.47 744.24 L523.44 752.01 L528.08 705.83 L532.05 686.14 L536.03 699.03 L538.01 693.91 L541.32 653.02 L545.96 701.68 L549.93 634.48 L555.23 728.17 L559.87 684.64 L561.85 683.31 L564.50 658.15 L568.48 646.40 L575.10 695.72 L579.07 659.65 L583.05 698.37 L587.68 659.65 L593.64 694.39 L595.63 690.11 L600.26 740.75 L604.90 638.45 L606.89 654.00 L608.87 643.75 L611.52 643.58 L614.83 676.51 L620.13 629.18 L624.77 648.87 L628.08 686.45 L632.72 674.22 L637.35 693.07 L641.32 653.69 L645.96 720.22 L650.60 659.65 L655.23 704.33 L657.88 685.96 L662.52 675.54 L665.17 684.46 L668.48 659.65 L672.45 688.43 L677.09 638.45 L681.92 689.10 L685.23 671.57 L687.88 675.85 L691.19 660.31 L696.49 699.69 L699.80 676.20 L703.77 742.74 L707.75 668.92 L714.37 761.28 L718.34 727.20 L722.98 765.25 L726.95 746.89 L730.93 713.95 L734.24 743.40 L738.87 690.11 L743.51 738.76 L748.15 698.06 L751.46 720.40 L756.09 750.02 L760.07 683.49 L764.70 761.28 L768.01 704.68 L772.65 746.71 L776.62 719.91 L780.60 738.76 L785.89 719.25 L791.19 744.73 L797.81 667.59 L801.79 674.53 L805.10 659.65 L808.41 670.55 L812.38 651.70 L815.70 669.89 L819.01 660.31 L822.98 712.27 L826.95 666.27 L830.26 689.76 L834.24 668.08 L838.21 668.08 L841.52 669.89 L844.83 633.82 L848.81 661.94 L852.12 641.10 L857.42 664.59 L864.04 641.10 L869.34 664.59 L876.62 627.20 L881.26 666.58 L884.57 623.88 L889.21 684.46 L894.50 633.82 L898.48 656.65 L902.65 640.26 L905.96 637.62 L908.21 621.24 L912.58 660.62 L917.22 633.16 L921.19 655.32 L923.84 651.04 L925.17 652.85 L929.80 671.22 L932.45 666.27 L935.76 677.84 L940.40 607.99 L943.05 634.13 L945.70 630.51 L949.67 674.53 L954.30 633.16 L958.94 683.14 L962.91 647.06 L967.55 670.07 L970.86 670.07 L976.16 635.80 L980.13 667.24 L983.44 638.45 L990.07 659.96 L994.04 646.40 L997.35 650.69 L1000.66 651.70 L1003.31 661.94 L1009.27 606.00 L1013.91 678.50 L1018.54 602.69 L1022.52 642.25 L1025.17 642.91 L1028.48 673.20 L1032.45 640.44 L1039.07 663.27 L1042.38 647.55 L1045.70 643.58 L1050.99 611.96 L1055.63 669.89 L1059.60 623.22 L1062.91 661.94 L1066.89 615.94 L1070.86 646.05 L1074.83 615.27 L1078.15 634.13 L1081.46 612.63 L1084.11 630.82 L1086.75 617.26 L1089.40 629.49 L1092.05 627.86 L1097.35 667.24 L1101.99 604.68 L1105.30 624.86 L1108.61 617.92 L1111.92 625.52 L1114.57 613.29 L1117.22 623.53 L1120.53 611.30 L1123.84 646.05 L1126.49 632.49 L1130.46 652.67 L1135.03 644.05 L1139.27 678.14 L1145.63 623.52 L1149.87 637.25 L1153.84 692.71 L1158.48 602.33 L1162.45 644.36 L1166.42 630.80 L1171.72 673.50 L1177.02 630.14 L1180.99 649.17 L1185.63 688.07 L1190.26 637.43 L1196.89 662.24 L1201.52 650.67 L1203.51 649.66 L1208.15 617.56 L1212.12 664.23 L1216.75 597.03 L1224.04 666.22 L1228.68 624.84 L1232.65 680.78 L1237.95 610.27 L1243.25 674.16 L1246.56 645.37 L1249.21 657.61 L1253.18 567.05 L1257.15 684.76 L1261.79 594.38 L1269.74 643.04 L1273.71 621.53 L1277.02 623.83 L1280.33 608.95 L1287.62 649.66 L1292.91 604.31 L1298.21 648.33 L1302.19 646.52 L1306.82 601.67 L1310.13 633.76 L1313.44 567.05 L1318.08 637.08 L1322.05 616.24 L1328.68 665.55 L1334.64 608.77 L1338.61 601.67 L1341.92 609.26 L1343.91 604.31 L1345.23 613.41 L1348.61 739.82 L1355.23 718.98 L1360.53 772.27 L1364.50 709.71 L1367.81 741.81 L1371.13 732.89 L1375.10 761.02 L1379.07 726.27 L1381.72 731.88 L1385.03 702.43 L1390.33 772.27 L1394.30 740.84 L1397.62 746.45 L1402.91 679.91 L1408.87 763.67 L1412.19 744.81 L1415.50 752.41 L1420.79 701.76 L1426.75 741.81 L1430.07 728.92 L1432.72 733.86 L1435.36 718.32 L1438.68 719.29 L1441.32 715.67 L1444.64 724.11 L1447.28 726.09 L1451.92 757.04 L1457.88 721.63 L1461.85 754.39 L1465.83 701.10 L1469.80 730.07 L1473.77 758.37 L1477.75 717.00 L1481.72 755.06 L1485.70 694.48 L1489.67 742.47 L1493.64 693.82 L1497.62 719.29 L1501.59 708.39 L1506.23 753.07 L1510.20 751.92 L1513.51 751.26 L1516.16 740.66 L1518.81 738.01 L1521.46 709.71 L1526.09 766.31 L1530.07 723.62 L1533.38 742.47 L1537.35 693.82 L1541.32 752.58 L1547.28 778.24 L1552.58 691.17 L1555.89 733.86 L1559.21 712.85 L1563.18 710.86 L1565.17 691.83 L1567.81 736.51 L1571.32 720.97 L1574.64 743.80 L1578.61 681.24 L1582.58 763.67 L1585.89 704.90 L1588.54 701.59 L1591.19 692.49 L1594.50 711.35 L1599.80 669.98 L1604.44 756.56 L1606.42 759.03 L1609.74 736.86 L1615.03 789.49 L1620.33 701.76 L1624.30 748.43 L1628.28 694.48 L1632.25 717.31 L1635.56 709.05 L1639.54 731.22 L1642.85 713.69 L1646.82 733.86 L1650.79 731.57 L1655.43 741.81 L1660.07 734.22 L1664.04 735.19 L1668.01 720.31 L1671.99 743.80 L1678.61 695.14 L1683.91 757.04 L1689.21 690.51 L1693.18 733.20 L1696.49 716.33 L1702.45 806.05 L1707.09 710.37 L1711.72 774.26 L1719.01 707.73 L1724.30 749.10 L1728.28 736.86 L1734.90 774.26 L1740.20 713.02 L1744.83 739.16 L1748.15 732.89 L1751.46 746.45 L1756.09 720.31 L1760.73 745.78 L1765.36 732.89 L1771.32 776.91 L1774.64 713.69 L1777.95 759.69 L1781.26 717.66 L1785.23 758.37 L1788.54 718.98 L1795.17 770.29 L1798.48 765.83 L1802.65 686.53 L1805.96 706.23 L1811.92 783.53 L1815.89 747.46 L1818.54 751.08 L1821.19 747.46 L1825.17 771.61 L1827.81 748.61 L1830.46 744.64 L1833.77 725.61 L1839.74 792.80 L1845.70 718.32 L1849.01 735.19 L1852.32 706.40 L1856.29 761.85 L1858.94 762.52 L1862.25 774.92 L1866.23 744.15 L1868.87 743.14 L1872.19 720.97 L1876.16 757.71 L1880.13 726.93 L1884.11 742.47 L1887.42 717.00 L1890.73 727.24 L1893.38 707.06 L1897.35 751.08 L1901.99 728.08 L1905.96 719.65 L1909.27 739.82 L1912.58 711.70 L1916.56 768.96 L1920.53 732.05 L1923.84 725.61 L1927.15 737.84 L1929.80 727.59 L1933.77 758.37 L1939.74 729.58 L1945.70 784.86 L1950.33 736.20 L1953.64 749.27 L1958.28 772.27 L1964.90 722.96 L1971.52 749.76 L1976.16 699.12 L1984.77 771.61 L1991.39 705.08 L1995.36 724.77 L1998.68 725.25 L2002.65 717.00 L2005.96 723.93 L2010.60 700.93" fill="none" stroke="#3b75af" stroke-width="4.17" stroke-linejoin="round" stroke-linecap="square"/>
</g>
<g clip-path="url(#ax2)">
<path d="M372.40 1045.45 L374.40 1045.93 L376.40 1046.98 L378.40 1046.22 L380.40 1046.52 L382.40 1046.69 L384.40 1045.81 L386.40 1046.53 L388.40 1046.79 L390.40 1047.14 L392.40 1045.61 L394.40 1046.07 L396.40 1045.60 L398.40 1047.18 L400.40 1046.93 L402.40 1045.49 L404.40 1047.56 L406.40 1047.52 L408.40 1046.84 L410.40 1046.75 L412.40 1045.75 L414.40 1045.90 L416.40 1047.70 L418.40 1047.33 L420.40 1048.29 L422.40 1048.92 L424.40 1048.37 L426.40 1049.25 L428.40 1049.12 L430.40 1049.93 L432.40 1049.14 L434.40 1049.33 L436.40 1048.94 L438.40 1049.22 L440.40 1048.71 L442.40 1048.31 L444.40 1049.89 L446.40 1049.89 L448.40 1049.54 L450.40 1049.25 L452.40 1048.39 L454.40 1048.20 L456.40 1048.33 L458.40 1047.85 L460.40 1049.38 L462.40 1048.57 L464.40 1049.55 L466.40 1048.54 L468.40 1049.79 L470.40 1049.55 L472.40 1047.68 L474.40 1048.14 L476.40 1049.68 L478.40 1048.71 L480.40 1049.84 L482.40 1048.55 L484.40 1047.84 L486.40 1049.06 L488.40 1049.39 L490.40 1048.27 L492.40 1047.87 L494.40 1048.40 L496.40 1049.79 L498.40 1049.34 L500.40 1047.93 L502.40 1048.21 L504.40 1047.89 L506.40 1047.80 L508.40 1049.42 L510.40 1048.06 L512.40 1048.89 L514.40 1048.65 L516.40 1048.08 L518.40 1049.27 L520.40 1047.95 L522.40 1049.07 L524.40 1047.91 L526.40 1048.58 L528.40 1048.12 L530.40 1048.25 L532.40 1049.79 L534.40 1049.42 L536.40 1048.32 L538.40 1049.60 L540.40 1048.11 L542.40 1048.52 L544.40 1049.53 L546.40 1049.06 L548.40 1047.87 L550.40 1049.82 L552.40 1048.11 L554.40 1048.21 L556.40 1049.34 L558.40 1048.36 L560.40 1048.29 L562.40 1047.80 L564.40 1047.83 L566.40 1048.92 L568.40 1048.17 L570.40 1048.96 L572.40 1048.45 L574.40 1048.63 L576.40 1049.74 L578.40 1048.69 L580.40 1048.89 L582.40 1049.53 L584.40 1048.03 L586.40 1047.96 L588.40 1049.62 L590.40 1049.42 L592.40 1048.17 L594.40 1048.04 L596.40 1049.25 L598.40 1049.69 L600.40 1048.05 L602.40 1049.71 L604.40 1049.56 L606.40 1048.94 L608.40 1048.54 L610.40 1047.84 L612.40 1047.70 L614.40 1049.73 L616.40 1048.13 L618.40 1049.16 L620.40 1048.17 L622.40 1049.42 L624.40 1048.92 L626.40 1048.25 L628.40 1047.99 L630.40 1049.19 L632.40 1047.75 L634.40 1048.10 L636.40 1048.83 L638.40 1049.47 L640.40 1048.95 L642.40 1048.21 L644.40 1049.61 L646.40 1048.04 L648.40 1047.63 L650.40 1048.19 L652.40 1048.57 L654.40 1047.72 L656.40 1047.98 L658.40 1048.40 L660.40 1048.85 L662.40 1047.88 L664.40 1048.38 L666.40 1049.54 L668.40 1049.74 L670.40 1049.03 L672.40 1049.10 L674.40 1048.87 L676.40 1047.89 L678.40 1047.66 L680.40 1047.62 L682.40 1049.58 L684.40 1049.12 L686.40 1049.69 L688.40 1047.62 L690.40 1048.97 L692.40 1048.63 L694.40 1049.18 L696.40 1048.27 L698.40 1049.77 L700.40 1047.73 L702.40 1048.77 L704.40 1049.19 L706.40 1049.54 L708.40 1049.18 L710.40 1049.11 L712.40 1049.31 L714.40 1049.57 L716.40 1048.33 L718.40 1049.07 L720.40 1049.54 L722.40 1049.47 L724.40 1048.47 L726.40 1049.29 L728.40 1049.45 L730.40 1048.81 L732.40 1048.93 L734.40 1048.39 L736.40 1048.83 L738.40 1048.89 L740.40 1047.72 L742.40 1048.95 L744.40 1049.73 L746.40 1049.48 L748.40 1049.15 L750.40 1048.40 L752.40 1049.16 L754.40 1048.82 L756.40 1048.51 L758.40 1049.38 L760.40 1047.72 L762.40 1049.19 L764.40 1047.60 L766.40 1048.86 L768.40 1048.59 L770.40 1048.04 L772.40 1049.07 L774.40 1048.62 L776.40 1048.88 L778.40 1049.55 L780.40 1048.09 L782.40 1047.55 L784.40 1048.19 L786.40 1049.02 L788.40 1047.97 L790.40 1047.89 L792.40 1049.51 L794.40 1048.97 L796.40 1048.49 L798.40 1049.48 L800.40 1048.24 L802.40 1048.98 L804.40 1047.95 L806.40 1048.46 L808.40 1049.29 L810.40 1049.52 L812.40 1049.45 L814.40 1048.36 L816.40 1048.79 L818.40 1048.20 L820.40 1047.81 L822.40 1048.60 L824.40 1049.35 L826.40 1049.37 L828.40 1049.07 L830.40 1049.59 L832.40 1048.11 L834.40 1047.87 L836.40 1048.49 L838.40 1048.10 L840.40 1047.97 L842.40 1048.41 L844.40 1048.87 L846.40 1048.58 L848.40 1048.19 L850.40 1049.34 L852.40 1049.65 L854.40 1048.48 L856.40 1047.65 L858.40 1047.56 L860.40 1049.41 L862.40 1047.58 L864.40 1049.04 L866.40 1048.74 L868.40 1048.16 L870.40 1049.22 L872.40 1047.52 L874.40 1047.78 L876.40 1048.48 L878.40 1047.53 L880.40 1049.30 L882.40 1048.00 L884.40 1047.78 L886.40 1047.58 L888.40 1048.86 L890.40 1048.45 L892.40 1048.86 L894.40 1048.91 L896.40 1049.24 L898.40 1049.58 L900.40 1048.97 L902.40 1047.90 L904.40 1048.51 L906.40 1047.86 L908.40 1047.49 L910.40 1048.50 L912.40 1049.03 L914.40 1047.85 L916.40 1048.06 L918.40 1048.22 L920.40 1048.99 L922.40 1048.60 L924.40 1048.81 L926.40 1049.12 L928.40 1048.32 L930.40 1049.19 L932.40 1049.44 L934.40 1047.64 L936.40 1049.50 L938.40 1049.04 L940.40 1047.73 L942.40 1048.44 L944.40 1048.82 L946.40 1049.44 L948.40 1048.27 L950.40 1048.69 L952.40 1049.37 L954.40 1049.19 L956.40 1049.51 L958.40 1048.46 L960.40 1048.87 L962.40 1047.88 L964.40 1049.02 L966.40 1049.23 L968.40 1048.84 L970.40 1049.01 L972.40 1047.90 L974.40 1049.41 L976.40 1049.58 L978.40 1049.58 L980.40 1048.61 L982.40 1049.16 L984.40 1048.13 L986.40 1049.42 L988.40 1049.30 L990.40 1048.19 L992.40 1047.60 L994.40 1048.39 L996.40 1048.63 L998.40 1049.11 L1000.40 1048.49 L1002.40 1047.48 L1004.40 1049.19 L1006.40 1047.55 L1008.40 1049.17 L1010.40 1047.79 L1012.40 1048.15 L1014.40 1049.14 L1016.40 1047.72 L1018.40 1047.73 L1020.40 1048.54 L1022.40 1049.00 L1024.40 1049.25 L1026.40 1048.92 L1028.40 1049.48 L1030.40 1048.48 L1032.40 1049.49 L1034.40 1047.59 L1036.40 1047.88 L1038.40 1048.55 L1040.40 1048.03 L1042.40 1049.00 L1044.40 1048.80 L1046.40 1048.54 L1048.40 1049.25 L1050.40 1048.62 L1052.40 1048.07 L1054.40 1048.23 L1056.40 1049.25 L1058.40 1049.37 L1060.40 1047.84 L1062.40 1049.25 L1064.40 1049.51 L1066.40 1048.53 L1068.40 1048.64 L1070.40 1047.82 L1072.40 1048.56 L1074.40 1048.48 L1076.40 1048.71 L1078.40 1047.44 L1080.40 1049.51 L1082.40 1048.51 L1084.40 1048.25 L1086.40 1049.13 L1088.40 1048.61 L1090.40 1048.45 L1092.40 1048.89 L1094.40 1047.51 L1096.40 1048.55 L1098.40 1048.28 L1100.40 1049.47 L1102.40 1049.39 L1104.40 1047.95 L1106.40 1048.40 L1108.40 1047.64 L1110.40 1048.31 L1112.40 1049.15 L1114.40 1049.34 L1116.40 1048.40 L1118.40 1048.05 L1120.40 1047.77 L1122.40 1048.71 L1124.40 1049.39 L1126.40 1047.64 L1128.40 1049.06 L1130.40 1047.40 L1132.40 1047.77 L1134.40 1047.85 L1136.40 1048.86 L1138.40 1048.05 L1140.40 1048.13 L1142.40 1048.71 L1144.40 1047.57 L1146.40 1048.95 L1148.40 1047.61 L1150.40 1048.46 L1152.40 1047.89 L1154.40 1047.77 L1156.40 1048.50 L1158.40 1048.30 L1160.40 1048.16 L1162.40 1048.24 L1164.40 1048.50 L1166.40 1047.68 L1168.40 1047.78 L1170.40 1048.72 L1172.40 1048.73 L1174.40 1048.49 L1176.40 1049.20 L1178.40 1048.67 L1180.40 1049.21 L1182.40 1047.83 L1184.40 1048.95 L1186.40 1049.10 L1188.40 1049.30 L1190.40 1048.01 L1192.40 1048.01 L1194.40 1049.35 L1196.40 1047.79 L1198.40 1049.51 L1200.40 1049.27 L1202.40 1047.61 L1204.40 1047.84 L1206.40 1048.91 L1208.40 1047.88 L1210.40 1047.52 L1212.40 1049.14 L1214.40 1048.23 L1216.40 1049.04 L1218.40 1047.58 L1220.40 1048.19 L1222.40 1048.81 L1224.40 1047.34 L1226.40 1047.74 L1228.40 1048.80 L1230.40 1049.30 L1232.40 1049.43 L1234.40 1047.55 L1236.40 1048.41 L1238.40 1048.96 L1240.40 1048.40 L1242.40 1048.80 L1244.40 1047.71 L1246.40 1047.44 L1248.40 1047.52 L1250.40 1047.37 L1252.40 1048.50 L1254.40 1048.42 L1256.40 1048.54 L1258.40 1047.61 L1260.40 1047.69 L1262.40 1047.73 L1264.40 1049.13 L1266.40 1049.46 L1268.40 1049.32 L1270.40 1047.49 L1272.40 1047.41 L1274.40 1049.37 L1276.40 1048.29 L1278.40 1048.96 L1280.40 1047.99 L1282.40 1048.30 L1284.40 1048.40 L1286.40 1048.22 L1288.40 1048.59 L1290.40 1047.30 L1292.40 1048.81 L1294.40 1049.12 L1296.40 1047.66 L1298.40 1048.26 L1300.40 1048.89 L1302.40 1048.15 L1304.40 1047.69 L1306.40 1047.62 L1308.40 1048.39 L1310.40 1047.29 L1312.40 1049.22 L1314.40 1049.02 L1316.40 1048.80 L1318.40 1049.15 L1320.40 1048.64 L1322.40 1048.14 L1324.40 1048.57 L1326.40 1048.36 L1328.40 1049.41 L1330.40 1049.02 L1332.40 1047.81 L1334.40 1049.25 L1336.40 1048.88 L1338.40 1048.95 L1340.40 1049.03 L1342.40 1048.13 L1344.40 1049.21 L1346.40 1049.17 L1348.40 1048.77 L1350.40 1048.92 L1352.40 1048.92 L1354.40 1048.13 L1356.40 1048.82 L1358.40 1047.39 L1360.40 1047.98 L1362.40 1048.26 L1364.40 1047.25 L1366.40 1048.01 L1368.40 1048.63 L1370.40 1048.60 L1372.40 1047.74 L1374.40 1049.30 L1376.40 1048.69 L1378.40 1047.97 L1380.40 1048.67 L1382.40 1048.47 L1384.40 1048.39 L1386.40 1048.08 L1388.40 1049.42 L1390.40 1048.63 L1392.40 1048.76 L1394.40 1048.89 L1396.40 1049.37 L1398.40 1047.26 L1400.40 1048.56 L1402.40 1048.84 L1404.40 1047.77 L1406.40 1048.09 L1408.40 1047.32 L1410.40 1047.64 L1412.40 1048.03 L1414.40 1047.42 L1416.40 1047.75 L1418.40 1049.19 L1420.40 1048.41 L1422.40 1048.32 L1424.40 1049.33 L1426.40 1048.45 L1428.40 1049.39 L1430.40 1048.60 L1432.40 1048.98 L1434.40 1047.36 L1436.40 1048.51 L1438.40 1048.86 L1440.40 1047.29 L1442.40 1049.24 L1444.40 1047.54 L1446.40 1048.23 L1448.40 1047.56 L1450.40 1048.28 L1452.40 1048.53 L1454.40 1047.31 L1456.40 1049.26 L1458.40 1048.11 L1460.40 1048.34 L1462.40 1048.49 L1464.40 1047.98 L1466.40 1047.81 L1468.40 1048.62 L1470.40 1048.41 L1472.40 1047.80 L1474.40 1048.75 L1476.40 1047.82 L1478.40 1047.20 L1480.40 1047.71 L1482.40 1047.26 L1484.40 1047.51 L1486.40 1048.83 L1488.40 1048.02 L1490.40 1049.14 L1492.40 1048.81 L1494.40 1047.27 L1496.40 1049.34 L1498.40 1049.24 L1500.40 1047.32 L1502.40 1049.15 L1504.40 1048.10 L1506.40 1048.21 L1508.40 1049.30 L1510.40 1047.69 L1512.40 1048.31 L1514.40 1049.21 L1516.40 1048.74 L1518.40 1048.18 L1520.40 1049.30 L1522.40 1048.95 L1524.40 1048.48 L1526.40 1047.40 L1528.40 1048.52 L1530.40 1048.15 L1532.40 1047.59 L1534.40 1047.26 L1536.40 1048.30 L1538.40 1047.41 L1540.40 1048.11 L1542.40 1048.61 L1544.40 1048.14 L1546.40 1047.71 L1548.40 1048.42 L1550.40 1048.06 L1552.40 1048.85 L1554.40 1048.30 L1556.40 1049.33 L1558.40 1049.23 L1560.40 1048.74 L1562.40 1047.65 L1564.40 1047.38 L1566.40 1049.09 L1568.40 1048.85 L1570.40 1048.50 L1572.40 1047.91 L1574.40 1047.72 L1576.40 1048.63 L1578.40 1048.36 L1580.40 1048.42 L1582.40 1048.51 L1584.40 1048.77 L1586.40 1047.53 L1588.40 1047.66 L1590.40 1049.27 L1592.40 1049.13 L1594.40 1049.05 L1596.40 1047.20 L1598.40 1047.24 L1600.40 1047.71 L1602.40 1048.04 L1604.40 1048.48 L1606.40 1047.33 L1608.40 1048.30 L1610.40 1047.26 L1612.40 1047.29 L1614.40 1048.59 L1616.40 1048.31 L1618.40 1048.49 L1620.40 1047.92 L1622.40 1048.15 L1624.40 1047.56 L1626.40 1047.85 L1628.40 1048.73 L1630.40 1048.94 L1632.40 1047.26 L1634.40 1047.36 L1636.40 1048.87 L1638.40 1048.46 L1640.40 1048.78 L1642.40 1047.56 L1644.40 1048.02 L1646.40 1047.65 L1648.40 1048.87 L1650.40 1047.90 L1652.40 1048.52 L1654.40 1049.26 L1656.40 1047.80 L1658.40 1048.29 L1660.40 1048.72 L1662.40 1049.10 L1664.40 1048.02 L1666.40 1047.89 L1668.40 1047.29 L1670.40 1049.00 L1672.40 1047.25 L1674.40 1047.25 L1676.40 1048.31 L1678.40 1048.14 L1680.40 1048.58 L1682.40 1047.72 L1684.40 1048.77 L1686.40 1047.23 L1688.40 1047.53 L1690.40 1048.52 L1692.40 1047.24 L1694.40 1047.73 L1696.40 1048.66 L1698.40 1048.59 L1700.40 1047.68 L1702.40 1047.37 L1704.40 1047.84 L1706.40 1048.65 L1708.40 1047.86 L1710.40 1047.31 L1712.40 1048.61 L1714.40 1048.30 L1716.40 1049.07 L1718.40 1049.12 L1720.40 1049.06 L1722.40 1048.01 L1724.40 1048.81 L1726.40 1047.72 L1728.40 1047.74 L1730.40 1047.92 L1732.40 1049.10 L1734.40 1049.01 L1736.40 1047.59 L1738.40 1047.83 L1740.40 1047.84 L1742.40 1047.84 L1744.40 1047.91 L1746.40 1047.89 L1748.40 1047.46 L1750.40 1048.27 L1752.40 1048.79 L1754.40 1048.22 L1756.40 1048.87 L1758.40 1048.27 L1760.40 1047.42 L1762.40 1048.70 L1764.40 1048.96 L1766.40 1047.64 L1768.40 1047.07 L1770.40 1048.16 L1772.40 1048.22 L1774.40 1048.27 L1776.40 1049.15 L1778.40 1048.45 L1780.40 1048.79 L1782.40 1047.16 L1784.40 1048.22 L1786.40 1048.75 L1788.40 1047.20 L1790.40 1047.19 L1792.40 1048.63 L1794.40 1048.99 L1796.40 1047.20 L1798.40 1048.40 L1800.40 1047.32 L1802.40 1048.65 L1804.40 1048.43 L1806.40 1047.54 L1808.40 1047.49 L1810.40 1048.69 L1812.40 1048.15 L1814.40 1048.68 L1816.40 1047.87 L1818.40 1047.74 L1820.40 1049.13 L1822.40 1048.48 L1824.40 1048.08 L1826.40 1048.18 L1828.40 1048.58 L1830.40 1048.55 L1832.40 1049.00 L1834.40 1047.89 L1836.40 1048.81 L1838.40 1048.45 L1840.40 1048.86 L1842.40 1048.76 L1844.40 1048.82 L1846.40 1048.94 L1848.40 1049.09 L1850.40 1048.39 L1852.40 1048.13 L1854.40 1048.54 L1856.40 1048.74 L1858.40 1047.91 L1860.40 1047.90 L1862.40 1047.30 L1864.40 1048.61 L1866.40 1049.15 L1868.40 1047.80 L1870.40 1047.34 L1872.40 1047.42 L1874.40 1047.90 L1876.40 1047.61 L1878.40 1049.10 L1880.40 1047.10 L1882.40 1047.64 L1884.40 1047.22 L1886.40 1048.39 L1888.40 1048.67 L1890.40 1047.36 L1892.40 1047.10 L1894.40 1047.97 L1896.40 1048.24 L1898.40 1048.96 L1900.40 1047.04 L1902.40 1047.19 L1904.40 1047.36 L1906.40 1047.43 L1908.40 1047.47 L1910.40 1048.53 L1912.40 1048.26 L1914.40 1047.44 L1916.40 1047.36 L1918.40 1047.57 L1920.40 1047.33 L1922.40 1048.61 L1924.40 1047.63 L1926.40 1048.15 L1928.40 1048.74 L1930.40 1048.00 L1932.40 1047.51 L1934.40 1048.89 L1936.40 1048.95 L1938.40 1047.69 L1940.40 1048.14 L1942.40 1049.04 L1944.40 1048.00 L1946.40 1047.42 L1948.40 1047.04 L1950.40 1049.02 L1952.40 1048.69 L1954.40 1047.78 L1956.40 1048.09 L1958.40 1048.06 L1960.40 1047.53 L1962.40 1049.10 L1964.40 1048.37 L1966.40 1047.45 L1968.40 1046.95 L1970.40 1047.96 L1972.40 1047.74 L1974.40 1048.67 L1976.40 1048.49 L1978.40 1048.25 L1980.40 1047.26 L1982.40 1047.26 L1984.40 1047.62 L1986.40 1047.48 L1988.40 1048.82 L1990.40 1048.05 L1992.40 1048.31 L1994.40 1049.09 L1996.40 1047.49 L1998.40 1048.08 L2000.40 1047.24 L2002.40 1048.60 L2004.40 1046.91 L2006.40 1048.71 L2008.40 1048.76 L2010.40 1048.71" fill="none" stroke="#ef8636" stroke-width="4.17" stroke-linejoin="round" stroke-linecap="square"/>
<path d="M372.40 1048.47 L374.40 1049.73 L376.40 1050.23 L378.40 1051.03 L380.40 1050.23 L382.40 1050.32 L384.40 1050.16 L386.40 1050.31 L388.40 1051.22 L390.40 1050.13 L392.40 1050.86 L394.40 1050.29 L396.40 1050.43 L398.40 1050.68 L400.40 1051.58 L402.40 1052.05 L404.40 1051.86 L406.40 1052.71 L408.40 1052.65 L410.40 1054.12 L413.00 1052.00 L414.70 1038.00 L416.00 1040.00 L421.30 1222.00 L425.60 1043.50 L427.00 1050.00 L430.00 1061.00 L433.60 1057.00 L436.00 1057.70 L438.00 1057.77 L440.00 1057.88 L442.00 1057.80 L444.00 1058.28 L446.00 1058.05 L448.00 1057.05 L450.00 1058.32 L452.00 1057.67 L454.00 1058.28 L456.00 1057.97 L458.00 1057.78 L460.00 1057.73 L462.00 1057.85 L464.00 1057.60 L466.00 1057.19 L468.00 1058.58 L470.00 1058.53 L472.00 1058.89 L474.00 1058.28 L476.00 1057.99 L478.00 1058.37 L480.00 1057.13 L482.00 1058.20 L484.00 1057.72 L486.00 1057.17 L488.00 1057.21 L490.00 1057.83 L492.00 1057.28 L494.00 1057.68 L496.00 1057.95 L498.00 1057.52 L500.00 1056.98 L502.00 1057.68 L504.00 1057.16 L506.00 1057.14 L508.00 1057.05 L510.00 1057.38 L512.00 1056.78 L514.00 1057.92 L516.00 1058.51 L518.00 1057.37 L520.00 1058.01 L522.00 1058.42 L524.00 1056.63 L526.00 1056.81 L528.00 1058.13 L530.00 1058.18 L532.00 1057.76 L534.00 1056.79 L536.00 1057.28 L538.00 1058.18 L540.00 1058.20 L542.00 1058.02 L544.00 1056.81 L546.00 1058.09 L548.00 1057.12 L550.00 1057.79 L552.00 1056.62 L554.00 1058.27 L556.00 1057.52 L558.00 1057.75 L560.00 1056.71 L562.00 1057.51 L564.00 1057.42 L566.00 1057.43 L568.00 1056.95 L570.00 1057.67 L572.00 1056.88 L574.00 1056.78 L576.00 1056.50 L578.00 1057.53 L580.00 1056.37 L582.00 1056.58 L584.00 1056.25 L586.00 1057.39 L588.00 1057.20 L590.00 1057.16 L592.00 1056.13 L594.00 1056.92 L596.00 1056.71 L598.00 1056.20 L600.00 1056.01 L602.00 1058.03 L604.00 1056.30 L606.00 1056.69 L608.00 1056.66 L610.00 1057.34 L612.00 1056.33 L614.00 1057.15 L616.00 1056.97 L618.00 1057.94 L620.00 1056.31 L622.00 1057.00 L624.00 1057.35 L626.00 1058.33 L628.00 1057.45 L630.00 1057.40 L632.00 1057.82 L634.00 1057.10 L636.00 1056.60 L638.00 1057.57 L640.00 1058.42 L642.00 1058.11 L644.00 1057.18 L646.00 1058.06 L648.00 1058.42 L650.00 1057.27 L652.00 1057.96 L654.00 1057.52 L656.00 1057.33 L658.00 1057.44 L660.00 1057.31 L662.00 1057.63 L664.00 1057.04 L666.00 1057.79 L668.00 1057.19 L670.00 1058.57 L672.00 1058.28 L674.00 1057.12 L676.00 1058.69 L678.00 1057.55 L680.00 1058.16 L682.00 1058.34 L684.00 1057.93 L686.00 1057.87 L688.00 1058.19 L690.00 1057.62 L692.00 1059.11 L694.00 1057.63 L696.00 1059.09 L698.00 1057.91 L700.00 1058.11 L702.00 1058.28 L704.00 1057.57 L706.00 1057.76 L708.00 1058.22 L710.00 1058.38 L712.00 1059.25 L714.00 1059.48 L716.00 1057.59 L718.00 1058.57 L720.00 1057.76 L722.00 1059.11 L724.00 1058.15 L726.00 1059.29 L728.00 1058.59 L730.00 1057.75 L732.00 1057.51 L734.00 1058.00 L736.00 1059.24 L738.00 1057.80 L740.00 1058.46 L742.00 1058.24 L744.00 1058.19 L746.00 1059.10 L748.00 1057.93 L750.00 1058.94 L752.00 1058.83 L754.00 1059.37 L756.00 1058.54 L758.00 1059.34 L760.00 1058.38 L762.00 1058.65 L764.00 1058.74 L766.00 1059.18 L768.00 1059.30 L770.00 1057.73 L772.00 1057.77 L774.00 1058.57 L776.00 1059.12 L778.00 1058.57 L780.00 1058.10 L782.00 1059.42 L784.00 1058.10 L786.00 1057.67 L788.00 1057.60 L790.00 1057.56 L792.00 1058.95 L794.00 1057.71 L796.00 1058.93 L798.00 1059.23 L800.00 1059.50 L802.00 1059.12 L804.00 1058.35 L806.00 1058.74 L808.00 1059.17 L810.00 1058.93 L812.00 1058.08 L814.00 1059.02 L816.00 1057.72 L818.00 1058.12 L820.00 1059.49 L822.00 1058.44 L824.00 1058.04 L826.00 1059.07 L828.00 1058.40 L830.00 1057.51 L832.00 1057.56 L834.00 1058.02 L836.00 1058.16 L838.00 1059.37 L840.00 1057.99 L842.00 1059.20 L844.00 1059.21 L846.00 1058.33 L848.00 1059.49 L850.00 1059.02 L852.00 1058.47 L854.00 1058.02 L856.00 1058.42 L858.00 1059.30 L860.00 1058.57 L862.00 1057.89 L864.00 1058.25 L866.00 1058.45 L868.00 1057.88 L870.00 1058.65 L872.00 1057.57 L874.00 1059.14 L876.00 1057.86 L878.00 1057.71 L880.00 1058.68 L882.00 1058.11 L884.00 1059.27 L886.00 1058.49 L888.00 1058.54 L890.00 1059.17 L892.00 1057.93 L894.00 1058.99 L896.00 1058.80 L898.00 1058.36 L900.00 1059.42 L902.00 1057.56 L904.00 1059.26 L906.00 1057.85 L908.00 1059.26 L910.00 1057.91 L912.00 1057.73 L914.00 1058.64 L916.00 1059.51 L918.00 1058.19 L920.00 1058.67 L922.00 1058.94 L924.00 1058.23 L926.00 1058.82 L928.00 1057.80 L930.00 1058.70 L932.00 1059.34 L934.00 1058.52 L936.00 1058.30 L938.00 1057.98 L940.00 1059.30 L942.00 1058.77 L944.00 1059.77 L946.00 1059.44 L948.00 1058.18 L950.00 1059.83 L952.00 1059.88 L954.00 1059.67 L956.00 1059.72 L958.00 1059.44 L960.00 1059.54 L962.00 1059.45 L964.00 1059.32 L966.00 1058.67 L968.00 1058.45 L970.00 1059.65 L972.00 1059.41 L974.00 1058.35 L976.00 1059.54 L978.00 1059.50 L980.00 1059.32 L982.00 1059.87 L984.00 1060.09 L986.00 1059.12 L988.00 1060.01 L990.00 1059.40 L992.00 1059.56 L994.00 1059.27 L996.00 1060.33 L998.00 1059.37 L1000.00 1060.40 L1002.00 1059.18 L1004.00 1059.85 L1006.00 1060.33 L1008.00 1059.87 L1010.00 1059.26 L1012.00 1058.67 L1014.00 1059.47 L1016.00 1059.34 L1018.00 1060.14 L1020.00 1060.09 L1022.00 1060.49 L1024.00 1059.42 L1026.00 1059.34 L1028.00 1059.65 L1030.00 1060.03 L1032.00 1058.69 L1034.00 1058.96 L1036.00 1058.82 L1038.00 1059.18 L1040.00 1059.13 L1042.00 1060.47 L1044.00 1058.95 L1046.00 1060.41 L1048.00 1059.13 L1050.00 1058.95 L1052.00 1060.49 L1054.00 1058.73 L1056.00 1058.77 L1058.00 1058.81 L1060.00 1058.69 L1062.00 1059.33 L1064.00 1058.98 L1066.00 1058.88 L1068.00 1058.59 L1070.00 1059.96 L1072.00 1058.66 L1074.00 1059.03 L1076.00 1059.70 L1078.00 1060.33 L1080.00 1059.89 L1082.00 1059.99 L1084.00 1059.97 L1086.00 1060.17 L1088.00 1060.28 L1090.00 1058.89 L1092.00 1058.69 L1094.00 1059.82 L1096.00 1059.62 L1098.00 1059.63 L1100.00 1060.15 L1102.00 1058.94 L1104.00 1060.00 L1106.00 1059.45 L1108.00 1059.44 L1110.00 1059.09 L1112.00 1059.16 L1114.00 1059.76 L1116.00 1059.71 L1118.00 1060.42 L1120.00 1059.16 L1122.00 1060.04 L1124.00 1058.80 L1126.00 1059.91 L1128.00 1058.93 L1130.00 1060.33 L1132.00 1060.55 L1134.00 1059.13 L1136.00 1060.23 L1138.00 1059.06 L1140.00 1059.23 L1142.00 1058.83 L1144.00 1059.51 L1146.00 1058.84 L1148.00 1060.04 L1150.00 1059.78 L1152.00 1059.47 L1154.00 1060.05 L1156.00 1059.10 L1158.00 1059.30 L1160.00 1059.37 L1162.00 1058.64 L1164.00 1060.42 L1166.00 1058.82 L1168.00 1058.85 L1170.00 1060.24 L1172.00 1060.29 L1174.00 1059.55 L1176.00 1059.50 L1178.00 1058.93 L1180.00 1058.66 L1182.00 1059.70 L1184.00 1059.15 L1186.00 1058.96 L1188.00 1060.47 L1190.00 1058.70 L1192.00 1059.39 L1194.00 1060.17 L1196.00 1060.16 L1198.00 1058.89 L1200.00 1060.16 L1202.00 1059.80 L1204.00 1059.94 L1206.00 1060.57 L1208.00 1060.28 L1210.00 1059.88 L1212.00 1060.22 L1214.00 1059.67 L1216.00 1059.79 L1218.00 1060.32 L1220.00 1059.93 L1222.00 1059.45 L1224.00 1058.74 L1226.00 1060.28 L1228.00 1059.38 L1230.00 1059.56 L1232.00 1059.28 L1234.00 1059.81 L1236.00 1059.51 L1238.00 1060.37 L1240.00 1059.90 L1242.00 1059.83 L1244.00 1060.28 L1246.00 1059.59 L1248.00 1059.79 L1250.00 1060.22 L1252.00 1060.16 L1254.00 1060.21 L1256.00 1060.50 L1258.00 1059.84 L1260.00 1059.84 L1262.00 1059.10 L1264.00 1059.21 L1266.00 1059.60 L1268.00 1059.73 L1270.00 1060.53 L1272.00 1058.82 L1274.00 1059.44 L1276.00 1060.22 L1278.00 1059.66 L1280.00 1060.44 L1282.00 1059.06 L1284.00 1060.29 L1286.00 1059.61 L1288.00 1059.89 L1290.00 1058.87 L1292.00 1059.56 L1294.00 1060.36 L1296.00 1060.23 L1298.00 1059.89 L1300.00 1059.61 L1302.00 1058.84 L1304.00 1060.16 L1306.00 1059.66 L1308.00 1060.22 L1310.00 1059.99 L1312.00 1059.58 L1314.00 1060.52 L1316.00 1059.04 L1318.00 1060.69 L1320.00 1058.95 L1322.00 1060.72 L1324.00 1059.96 L1326.00 1059.68 L1328.00 1060.66 L1330.00 1059.81 L1332.00 1059.81 L1334.00 1058.91 L1336.00 1060.39 L1338.00 1060.07 L1340.00 1059.27 L1342.00 1059.02 L1344.00 1059.64 L1346.00 1059.67 L1348.00 1057.54 L1350.00 1056.73 L1352.00 1055.86 L1354.00 1057.45 L1356.00 1056.19 L1358.00 1057.24 L1360.00 1056.78 L1362.00 1057.70 L1364.00 1056.06 L1366.00 1057.35 L1368.00 1057.20 L1370.00 1055.79 L1372.00 1056.88 L1374.00 1056.34 L1376.00 1057.14 L1378.00 1057.66 L1380.00 1057.07 L1382.00 1056.72 L1384.00 1056.94 L1386.00 1056.22 L1388.00 1056.66 L1390.00 1055.95 L1392.00 1057.15 L1394.00 1055.84 L1396.00 1056.76 L1398.00 1056.06 L1400.00 1056.82 L1402.00 1055.81 L1404.00 1055.74 L1406.00 1056.94 L1408.00 1057.12 L1410.00 1057.45 L1412.00 1057.03 L1414.00 1057.66 L1416.00 1055.95 L1418.00 1056.92 L1420.00 1056.93 L1422.00 1056.00 L1424.00 1055.93 L1426.00 1056.13 L1428.00 1056.69 L1430.00 1057.21 L1432.00 1057.06 L1434.00 1056.77 L1436.00 1055.78 L1438.00 1057.07 L1440.00 1056.64 L1442.00 1055.95 L1444.00 1056.85 L1446.00 1056.10 L1448.00 1056.22 L1450.00 1056.50 L1452.00 1057.10 L1454.00 1055.80 L1456.00 1056.47 L1458.00 1056.05 L1460.00 1056.92 L1462.00 1057.21 L1464.00 1056.10 L1466.00 1057.01 L1468.00 1056.49 L1470.00 1055.99 L1472.00 1056.11 L1474.00 1056.63 L1476.00 1057.16 L1478.00 1056.75 L1480.00 1055.54 L1482.00 1057.10 L1484.00 1056.69 L1486.00 1056.37 L1488.00 1056.01 L1490.00 1056.40 L1492.00 1056.90 L1494.00 1056.05 L1496.00 1055.78 L1498.00 1057.26 L1500.00 1056.38 L1502.00 1055.64 L1504.00 1057.29 L1506.00 1055.73 L1508.00 1056.24 L1510.00 1056.75 L1512.00 1056.84 L1514.00 1057.32 L1516.00 1055.87 L1518.00 1056.66 L1520.00 1057.29 L1522.00 1056.47 L1524.00 1056.96 L1526.00 1056.47 L1528.00 1056.97 L1530.00 1057.46 L1532.00 1056.22 L1534.00 1057.02 L1536.00 1056.24 L1538.00 1057.33 L1540.00 1057.08 L1542.00 1057.27 L1544.00 1057.31 L1546.00 1056.75 L1548.00 1057.47 L1550.00 1055.88 L1552.00 1056.72 L1554.00 1055.72 L1556.00 1056.74 L1558.00 1056.95 L1560.00 1056.15 L1562.00 1057.21 L1564.00 1056.42 L1566.00 1055.99 L1568.00 1055.98 L1570.00 1056.75 L1572.00 1056.37 L1574.00 1055.70 L1576.00 1056.22 L1578.00 1057.56 L1580.00 1056.55 L1582.00 1056.98 L1584.00 1056.47 L1586.00 1055.76 L1588.00 1056.84 L1590.00 1056.04 L1592.00 1055.87 L1594.00 1056.86 L1596.00 1056.98 L1598.00 1055.66 L1600.00 1057.53 L1602.00 1055.68 L1604.00 1055.97 L1606.00 1056.30 L1608.00 1057.24 L1610.00 1057.14 L1612.00 1057.14 L1614.00 1056.52 L1616.00 1057.48 L1618.00 1055.93 L1620.00 1057.59 L1622.00 1055.77 L1624.00 1055.98 L1626.00 1057.17 L1628.00 1057.21 L1630.00 1057.02 L1632.00 1056.18 L1634.00 1057.42 L1636.00 1056.72 L1638.00 1056.10 L1640.00 1055.88 L1642.00 1057.67 L1644.00 1055.81 L1646.00 1056.14 L1648.00 1056.42 L1650.00 1057.49 L1652.00 1057.37 L1654.00 1057.39 L1656.00 1056.98 L1658.00 1055.74 L1660.00 1057.20 L1662.00 1056.10 L1664.00 1057.62 L1666.00 1057.67 L1668.00 1055.86 L1670.00 1057.20 L1672.00 1056.22 L1674.00 1055.95 L1676.00 1057.49 L1678.00 1056.63 L1680.00 1056.34 L1682.00 1056.87 L1684.00 1055.88 L1686.00 1056.60 L1688.00 1057.06 L1690.00 1057.49 L1692.00 1056.01 L1694.00 1057.55 L1696.00 1055.98 L1698.00 1056.18 L1700.00 1056.44 L1702.00 1056.11 L1704.00 1055.96 L1706.00 1057.09 L1708.00 1056.58 L1710.00 1056.17 L1712.00 1056.82 L1714.00 1056.04 L1716.00 1057.16 L1718.00 1057.73 L1720.00 1056.74 L1722.00 1056.65 L1724.00 1056.60 L1726.00 1056.54 L1728.00 1056.64 L1730.00 1056.17 L1732.00 1056.41 L1734.00 1057.20 L1736.00 1056.78 L1738.00 1055.96 L1740.00 1056.12 L1742.00 1057.51 L1744.00 1056.54 L1746.00 1057.50 L1748.00 1057.07 L1750.00 1057.09 L1752.00 1056.56 L1754.00 1057.01 L1756.00 1056.68 L1758.00 1056.89 L1760.00 1057.75 L1762.00 1056.07 L1764.00 1056.29 L1766.00 1057.67 L1768.00 1057.72 L1770.00 1057.50 L1772.00 1057.59 L1774.00 1056.08 L1776.00 1057.32 L1778.00 1056.13 L1780.00 1057.58 L1782.00 1056.68 L1784.00 1056.87 L1786.00 1056.93 L1788.00 1056.31 L1790.00 1057.03 L1792.00 1057.62 L1794.00 1056.80 L1796.00 1056.78 L1798.00 1056.64 L1800.00 1056.29 L1802.00 1056.48 L1804.00 1057.59 L1806.00 1057.85 L1808.00 1056.67 L1810.00 1056.50 L1812.00 1056.60 L1814.00 1057.66 L1816.00 1056.46 L1818.00 1056.30 L1820.00 1056.57 L1822.00 1056.11 L1824.00 1056.24 L1826.00 1056.41 L1828.00 1057.25 L1830.00 1057.81 L1832.00 1056.47 L1834.00 1056.54 L1836.00 1057.13 L1838.00 1056.02 L1840.00 1056.14 L1842.00 1057.12 L1844.00 1056.90 L1846.00 1056.68 L1848.00 1056.81 L1850.00 1056.02 L1852.00 1056.50 L1854.00 1056.34 L1856.00 1056.47 L1858.00 1056.13 L1860.00 1057.62 L1862.00 1056.03 L1864.00 1056.83 L1866.00 1056.35 L1868.00 1056.41 L1870.00 1057.53 L1872.00 1057.93 L1874.00 1057.94 L1876.00 1056.68 L1878.00 1057.10 L1880.00 1056.88 L1882.00 1056.18 L1884.00 1056.87 L1886.00 1057.25 L1888.00 1056.83 L1890.00 1057.60 L1892.00 1056.93 L1894.00 1056.63 L1896.00 1057.83 L1898.00 1057.19 L1900.00 1056.56 L1902.00 1057.86 L1904.00 1057.01 L1906.00 1057.26 L1908.00 1057.00 L1910.00 1057.78 L1912.00 1057.53 L1914.00 1056.95 L1916.00 1056.80 L1918.00 1057.62 L1920.00 1057.75 L1922.00 1057.28 L1924.00 1057.83 L1926.00 1057.14 L1928.00 1056.92 L1930.00 1056.72 L1932.00 1056.63 L1934.00 1056.40 L1936.00 1057.94 L1938.00 1057.21 L1940.00 1056.27 L1942.00 1056.52 L1944.00 1056.96 L1946.00 1057.72 L1948.00 1057.83 L1950.00 1057.64 L1952.00 1056.70 L1954.00 1056.98 L1956.00 1058.02 L1958.00 1056.90 L1960.00 1057.43 L1962.00 1056.23 L1964.00 1057.10 L1966.00 1057.15 L1968.00 1057.96 L1970.00 1058.07 L1972.00 1057.65 L1974.00 1056.81 L1976.00 1057.90 L1978.00 1057.99 L1980.00 1056.31 L1982.00 1057.01 L1984.00 1057.27 L1986.00 1056.78 L1988.00 1056.65 L1990.00 1057.74 L1992.00 1056.59 L1994.00 1057.28 L1996.00 1056.22 L1998.00 1057.11 L2000.00 1058.11 L2002.00 1056.20 L2004.00 1056.41 L2006.00 1057.99 L2008.00 1058.02 L2010.00 1057.21" fill="none" stroke="#3b75af" stroke-width="4.17" stroke-linejoin="round" stroke-linecap="square"/>
</g>
<rect x="291.00" y="225.00" width="1802.00" height="304.00" stroke="#262626" stroke-width="2.3" fill="none"/>
<path d="M299.00 529.00v5.56M307.00 529.00v5.56M315.00 529.00v5.56M325.00 529.00v5.56M333.00 529.00v5.56M341.00 529.00v5.56M349.00 529.00v5.56M357.00 529.00v5.56M365.00 529.00v5.56M373.00 529.00v9.72M381.00 529.00v5.56M389.00 529.00v5.56M397.00 529.00v5.56M405.00 529.00v5.56M415.00 529.00v5.56M423.00 529.00v5.56M431.00 529.00v5.56M439.00 529.00v5.56M447.00 529.00v5.56M455.00 529.00v9.72M463.00 529.00v5.56M471.00 529.00v5.56M479.00 529.00v5.56M487.00 529.00v5.56M497.00 529.00v5.56M505.00 529.00v5.56M513.00 529.00v5.56M521.00 529.00v5.56M529.00 529.00v5.56M537.00 529.00v9.72M545.00 529.00v5.56M553.00 529.00v5.56M561.00 529.00v5.56M569.00 529.00v5.56M577.00 529.00v5.56M587.00 529.00v5.56M595.00 529.00v5.56M603.00 529.00v5.56M611.00 529.00v5.56M619.00 529.00v9.72M627.00 529.00v5.56M635.00 529.00v5.56M643.00 529.00v5.56M651.00 529.00v5.56M659.00 529.00v5.56M669.00 529.00v5.56M677.00 529.00v5.56M685.00 529.00v5.56M693.00 529.00v5.56M701.00 529.00v9.72M709.00 529.00v5.56M717.00 529.00v5.56M725.00 529.00v5.56M733.00 529.00v5.56M741.00 529.00v5.56M749.00 529.00v5.56M759.00 529.00v5.56M767.00 529.00v5.56M775.00 529.00v5.56M783.00 529.00v9.72M791.00 529.00v5.56M799.00 529.00v5.56M807.00 529.00v5.56M815.00 529.00v5.56M823.00 529.00v5.56M831.00 529.00v5.56M841.00 529.00v5.56M849.00 529.00v5.56M857.00 529.00v5.56M865.00 529.00v9.72M873.00 529.00v5.56M881.00 529.00v5.56M889.00 529.00v5.56M897.00 529.00v5.56M905.00 529.00v5.56M913.00 529.00v5.56M921.00 529.00v5.56M931.00 529.00v5.56M939.00 529.00v5.56M947.00 529.00v9.72M955.00 529.00v5.56M963.00 529.00v5.56M971.00 529.00v5.56M979.00 529.00v5.56M987.00 529.00v5.56M995.00 529.00v5.56M1003.00 529.00v5.56M1013.00 529.00v5.56M1021.00 529.00v5.56M1029.00 529.00v9.72M1037.00 529.00v5.56M1045.00 529.00v5.56M1053.00 529.00v5.56M1061.00 529.00v5.56M1069.00 529.00v5.56M1077.00 529.00v5.56M1085.00 529.00v5.56M1093.00 529.00v5.56M1103.00 529.00v5.56M1111.00 529.00v9.72M1119.00 529.00v5.56M1127.00 529.00v5.56M1135.00 529.00v5.56M1143.00 529.00v5.56M1151.00 529.00v5.56M1159.00 529.00v5.56M1167.00 529.00v5.56M1175.00 529.00v5.56M1185.00 529.00v5.56M1193.00 529.00v9.72M1201.00 529.00v5.56M1209.00 529.00v5.56M1217.00 529.00v5.56M1225.00 529.00v5.56M1233.00 529.00v5.56M1241.00 529.00v5.56M1249.00 529.00v5.56M1257.00 529.00v5.56M1265.00 529.00v5.56M1275.00 529.00v9.72M1283.00 529.00v5.56M1291.00 529.00v5.56M1299.00 529.00v5.56M1307.00 529.00v5.56M1315.00 529.00v5.56M1323.00 529.00v5.56M1331.00 529.00v5.56M1339.00 529.00v5.56M1347.00 529.00v5.56M1357.00 529.00v9.72M1365.00 529.00v5.56M1373.00 529.00v5.56M1381.00 529.00v5.56M1389.00 529.00v5.56M1397.00 529.00v5.56M1405.00 529.00v5.56M1413.00 529.00v5.56M1421.00 529.00v5.56M1429.00 529.00v5.56M1437.00 529.00v9.72M1447.00 529.00v5.56M1455.00 529.00v5.56M1463.00 529.00v5.56M1471.00 529.00v5.56M1479.00 529.00v5.56M1487.00 529.00v5.56M1495.00 529.00v5.56M1503.00 529.00v5.56M1511.00 529.00v5.56M1519.00 529.00v9.72M1527.00 529.00v5.56M1537.00 529.00v5.56M1545.00 529.00v5.56M1553.00 529.00v5.56M1561.00 529.00v5.56M1569.00 529.00v5.56M1577.00 529.00v5.56M1585.00 529.00v5.56M1593.00 529.00v5.56M1601.00 529.00v9.72M1609.00 529.00v5.56M1619.00 529.00v5.56M1627.00 529.00v5.56M1635.00 529.00v5.56M1643.00 529.00v5.56M1651.00 529.00v5.56M1659.00 529.00v5.56M1667.00 529.00v5.56M1675.00 529.00v5.56M1683.00 529.00v9.72M1691.00 529.00v5.56M1699.00 529.00v5.56M1709.00 529.00v5.56M1717.00 529.00v5.56M1725.00 529.00v5.56M1733.00 529.00v5.56M1741.00 529.00v5.56M1749.00 529.00v5.56M1757.00 529.00v5.56M1765.00 529.00v9.72M1773.00 529.00v5.56M1781.00 529.00v5.56M1791.00 529.00v5.56M1799.00 529.00v5.56M1807.00 529.00v5.56M1815.00 529.00v5.56M1823.00 529.00v5.56M1831.00 529.00v5.56M1839.00 529.00v5.56M1847.00 529.00v9.72M1855.00 529.00v5.56M1863.00 529.00v5.56M1871.00 529.00v5.56M1881.00 529.00v5.56M1889.00 529.00v5.56M1897.00 529.00v5.56M1905.00 529.00v5.56M1913.00 529.00v5.56M1921.00 529.00v5.56M1929.00 529.00v9.72M1937.00 529.00v5.56M1945.00 529.00v5.56M1953.00 529.00v5.56M1963.00 529.00v5.56M1971.00 529.00v5.56M1979.00 529.00v5.56M1987.00 529.00v5.56M1995.00 529.00v5.56M2003.00 529.00v5.56M2011.00 529.00v9.72M2019.00 529.00v5.56M2027.00 529.00v5.56M2035.00 529.00v5.56M2043.00 529.00v5.56M2053.00 529.00v5.56M2061.00 529.00v5.56M2069.00 529.00v5.56M2077.00 529.00v5.56M2085.00 529.00v5.56M291.00 521.00h-9.72M291.00 437.00h-9.72M291.00 351.00h-9.72M291.00 267.00h-9.72" stroke="#262626" stroke-width="2.1" fill="none"/>
<text x="273.00" y="530.40" font-size="29.43" text-anchor="end" textLength="17.67" lengthAdjust="spacingAndGlyphs" fill="#222222">0</text>
<text x="273.00" y="446.40" font-size="29.43" text-anchor="end" textLength="17.67" lengthAdjust="spacingAndGlyphs" fill="#222222">1</text>
<text x="273.00" y="360.40" font-size="29.43" text-anchor="end" textLength="17.67" lengthAdjust="spacingAndGlyphs" fill="#222222">2</text>
<text x="273.00" y="276.40" font-size="29.43" text-anchor="end" textLength="17.67" lengthAdjust="spacingAndGlyphs" fill="#222222">3</text>
<rect x="291.00" y="579.00" width="1802.00" height="304.00" stroke="#262626" stroke-width="2.3" fill="none"/>
<path d="M299.00 883.00v5.56M307.00 883.00v5.56M315.00 883.00v5.56M325.00 883.00v5.56M333.00 883.00v5.56M341.00 883.00v5.56M349.00 883.00v5.56M357.00 883.00v5.56M365.00 883.00v5.56M373.00 883.00v9.72M381.00 883.00v5.56M389.00 883.00v5.56M397.00 883.00v5.56M405.00 883.00v5.56M415.00 883.00v5.56M423.00 883.00v5.56M431.00 883.00v5.56M439.00 883.00v5.56M447.00 883.00v5.56M455.00 883.00v9.72M463.00 883.00v5.56M471.00 883.00v5.56M479.00 883.00v5.56M487.00 883.00v5.56M497.00 883.00v5.56M505.00 883.00v5.56M513.00 883.00v5.56M521.00 883.00v5.56M529.00 883.00v5.56M537.00 883.00v9.72M545.00 883.00v5.56M553.00 883.00v5.56M561.00 883.00v5.56M569.00 883.00v5.56M577.00 883.00v5.56M587.00 883.00v5.56M595.00 883.00v5.56M603.00 883.00v5.56M611.00 883.00v5.56M619.00 883.00v9.72M627.00 883.00v5.56M635.00 883.00v5.56M643.00 883.00v5.56M651.00 883.00v5.56M659.00 883.00v5.56M669.00 883.00v5.56M677.00 883.00v5.56M685.00 883.00v5.56M693.00 883.00v5.56M701.00 883.00v9.72M709.00 883.00v5.56M717.00 883.00v5.56M725.00 883.00v5.56M733.00 883.00v5.56M741.00 883.00v5.56M749.00 883.00v5.56M759.00 883.00v5.56M767.00 883.00v5.56M775.00 883.00v5.56M783.00 883.00v9.72M791.00 883.00v5.56M799.00 883.00v5.56M807.00 883.00v5.56M815.00 883.00v5.56M823.00 883.00v5.56M831.00 883.00v5.56M841.00 883.00v5.56M849.00 883.00v5.56M857.00 883.00v5.56M865.00 883.00v9.72M873.00 883.00v5.56M881.00 883.00v5.56M889.00 883.00v5.56M897.00 883.00v5.56M905.00 883.00v5.56M913.00 883.00v5.56M921.00 883.00v5.56M931.00 883.00v5.56M939.00 883.00v5.56M947.00 883.00v9.72M955.00 883.00v5.56M963.00 883.00v5.56M971.00 883.00v5.56M979.00 883.00v5.56M987.00 883.00v5.56M995.00 883.00v5.56M1003.00 883.00v5.56M1013.00 883.00v5.56M1021.00 883.00v5.56M1029.00 883.00v9.72M1037.00 883.00v5.56M1045.00 883.00v5.56M1053.00 883.00v5.56M1061.00 883.00v5.56M1069.00 883.00v5.56M1077.00 883.00v5.56M1085.00 883.00v5.56M1093.00 883.00v5.56M1103.00 883.00v5.56M1111.00 883.00v9.72M1119.00 883.00v5.56M1127.00 883.00v5.56M1135.00 883.00v5.56M1143.00 883.00v5.56M1151.00 883.00v5.56M1159.00 883.00v5.56M1167.00 883.00v5.56M1175.00 883.00v5.56M1185.00 883.00v5.56M1193.00 883.00v9.72M1201.00 883.00v5.56M1209.00 883.00v5.56M1217.00 883.00v5.56M1225.00 883.00v5.56M1233.00 883.00v5.56M1241.00 883.00v5.56M1249.00 883.00v5.56M1257.00 883.00v5.56M1265.00 883.00v5.56M1275.00 883.00v9.72M1283.00 883.00v5.56M1291.00 883.00v5.56M1299.00 883.00v5.56M1307.00 883.00v5.56M1315.00 883.00v5.56M1323.00 883.00v5.56M1331.00 883.00v5.56M1339.00 883.00v5.56M1347.00 883.00v5.56M1357.00 883.00v9.72M1365.00 883.00v5.56M1373.00 883.00v5.56M1381.00 883.00v5.56M1389.00 883.00v5.56M1397.00 883.00v5.56M1405.00 883.00v5.56M1413.00 883.00v5.56M1421.00 883.00v5.56M1429.00 883.00v5.56M1437.00 883.00v9.72M1447.00 883.00v5.56M1455.00 883.00v5.56M1463.00 883.00v5.56M1471.00 883.00v5.56M1479.00 883.00v5.56M1487.00 883.00v5.56M1495.00 883.00v5.56M1503.00 883.00v5.56M1511.00 883.00v5.56M1519.00 883.00v9.72M1527.00 883.00v5.56M1537.00 883.00v5.56M1545.00 883.00v5.56M1553.00 883.00v5.56M1561.00 883.00v5.56M1569.00 883.00v5.56M1577.00 883.00v5.56M1585.00 883.00v5.56M1593.00 883.00v5.56M1601.00 883.00v9.72M1609.00 883.00v5.56M1619.00 883.00v5.56M1627.00 883.00v5.56M1635.00 883.00v5.56M1643.00 883.00v5.56M1651.00 883.00v5.56M1659.00 883.00v5.56M1667.00 883.00v5.56M1675.00 883.00v5.56M1683.00 883.00v9.72M1691.00 883.00v5.56M1699.00 883.00v5.56M1709.00 883.00v5.56M1717.00 883.00v5.56M1725.00 883.00v5.56M1733.00 883.00v5.56M1741.00 883.00v5.56M1749.00 883.00v5.56M1757.00 883.00v5.56M1765.00 883.00v9.72M1773.00 883.00v5.56M1781.00 883.00v5.56M1791.00 883.00v5.56M1799.00 883.00v5.56M1807.00 883.00v5.56M1815.00 883.00v5.56M1823.00 883.00v5.56M1831.00 883.00v5.56M1839.00 883.00v5.56M1847.00 883.00v9.72M1855.00 883.00v5.56M1863.00 883.00v5.56M1871.00 883.00v5.56M1881.00 883.00v5.56M1889.00 883.00v5.56M1897.00 883.00v5.56M1905.00 883.00v5.56M1913.00 883.00v5.56M1921.00 883.00v5.56M1929.00 883.00v9.72M1937.00 883.00v5.56M1945.00 883.00v5.56M1953.00 883.00v5.56M1963.00 883.00v5.56M1971.00 883.00v5.56M1979.00 883.00v5.56M1987.00 883.00v5.56M1995.00 883.00v5.56M2003.00 883.00v5.56M2011.00 883.00v9.72M2019.00 883.00v5.56M2027.00 883.00v5.56M2035.00 883.00v5.56M2043.00 883.00v5.56M2053.00 883.00v5.56M2061.00 883.00v5.56M2069.00 883.00v5.56M2077.00 883.00v5.56M2085.00 883.00v5.56M291.00 853.00h-9.72M291.00 791.00h-9.72M291.00 731.00h-9.72M291.00 671.00h-9.72M291.00 609.00h-9.72" stroke="#262626" stroke-width="2.1" fill="none"/>
<text x="272.00" y="863.20" font-size="29.43" text-anchor="end" textLength="61.85" lengthAdjust="spacingAndGlyphs" fill="#222222">0.06</text>
<text x="272.00" y="801.20" font-size="29.43" text-anchor="end" textLength="61.85" lengthAdjust="spacingAndGlyphs" fill="#222222">0.08</text>
<text x="272.00" y="741.20" font-size="29.43" text-anchor="end" textLength="61.85" lengthAdjust="spacingAndGlyphs" fill="#222222">0.10</text>
<text x="272.00" y="681.20" font-size="29.43" text-anchor="end" textLength="61.85" lengthAdjust="spacingAndGlyphs" fill="#222222">0.12</text>
<text x="272.00" y="619.20" font-size="29.43" text-anchor="end" textLength="61.85" lengthAdjust="spacingAndGlyphs" fill="#222222">0.14</text>
<rect x="291.00" y="933.00" width="1802.00" height="304.00" stroke="#262626" stroke-width="2.3" fill="none"/>
<path d="M299.00 1237.00v5.56M307.00 1237.00v5.56M315.00 1237.00v5.56M325.00 1237.00v5.56M333.00 1237.00v5.56M341.00 1237.00v5.56M349.00 1237.00v5.56M357.00 1237.00v5.56M365.00 1237.00v5.56M373.00 1237.00v9.72M381.00 1237.00v5.56M389.00 1237.00v5.56M397.00 1237.00v5.56M405.00 1237.00v5.56M415.00 1237.00v5.56M423.00 1237.00v5.56M431.00 1237.00v5.56M439.00 1237.00v5.56M447.00 1237.00v5.56M455.00 1237.00v9.72M463.00 1237.00v5.56M471.00 1237.00v5.56M479.00 1237.00v5.56M487.00 1237.00v5.56M497.00 1237.00v5.56M505.00 1237.00v5.56M513.00 1237.00v5.56M521.00 1237.00v5.56M529.00 1237.00v5.56M537.00 1237.00v9.72M545.00 1237.00v5.56M553.00 1237.00v5.56M561.00 1237.00v5.56M569.00 1237.00v5.56M577.00 1237.00v5.56M587.00 1237.00v5.56M595.00 1237.00v5.56M603.00 1237.00v5.56M611.00 1237.00v5.56M619.00 1237.00v9.72M627.00 1237.00v5.56M635.00 1237.00v5.56M643.00 1237.00v5.56M651.00 1237.00v5.56M659.00 1237.00v5.56M669.00 1237.00v5.56M677.00 1237.00v5.56M685.00 1237.00v5.56M693.00 1237.00v5.56M701.00 1237.00v9.72M709.00 1237.00v5.56M717.00 1237.00v5.56M725.00 1237.00v5.56M733.00 1237.00v5.56M741.00 1237.00v5.56M749.00 1237.00v5.56M759.00 1237.00v5.56M767.00 1237.00v5.56M775.00 1237.00v5.56M783.00 1237.00v9.72M791.00 1237.00v5.56M799.00 1237.00v5.56M807.00 1237.00v5.56M815.00 1237.00v5.56M823.00 1237.00v5.56M831.00 1237.00v5.56M841.00 1237.00v5.56M849.00 1237.00v5.56M857.00 1237.00v5.56M865.00 1237.00v9.72M873.00 1237.00v5.56M881.00 1237.00v5.56M889.00 1237.00v5.56M897.00 1237.00v5.56M905.00 1237.00v5.56M913.00 1237.00v5.56M921.00 1237.00v5.56M931.00 1237.00v5.56M939.00 1237.00v5.56M947.00 1237.00v9.72M955.00 1237.00v5.56M963.00 1237.00v5.56M971.00 1237.00v5.56M979.00 1237.00v5.56M987.00 1237.00v5.56M995.00 1237.00v5.56M1003.00 1237.00v5.56M1013.00 1237.00v5.56M1021.00 1237.00v5.56M1029.00 1237.00v9.72M1037.00 1237.00v5.56M1045.00 1237.00v5.56M1053.00 1237.00v5.56M1061.00 1237.00v5.56M1069.00 1237.00v5.56M1077.00 1237.00v5.56M1085.00 1237.00v5.56M1093.00 1237.00v5.56M1103.00 1237.00v5.56M1111.00 1237.00v9.72M1119.00 1237.00v5.56M1127.00 1237.00v5.56M1135.00 1237.00v5.56M1143.00 1237.00v5.56M1151.00 1237.00v5.56M1159.00 1237.00v5.56M1167.00 1237.00v5.56M1175.00 1237.00v5.56M1185.00 1237.00v5.56M1193.00 1237.00v9.72M1201.00 1237.00v5.56M1209.00 1237.00v5.56M1217.00 1237.00v5.56M1225.00 1237.00v5.56M1233.00 1237.00v5.56M1241.00 1237.00v5.56M1249.00 1237.00v5.56M1257.00 1237.00v5.56M1265.00 1237.00v5.56M1275.00 1237.00v9.72M1283.00 1237.00v5.56M1291.00 1237.00v5.56M1299.00 1237.00v5.56M1307.00 1237.00v5.56M1315.00 1237.00v5.56M1323.00 1237.00v5.56M1331.00 1237.00v5.56M1339.00 1237.00v5.56M1347.00 1237.00v5.56M1357.00 1237.00v9.72M1365.00 1237.00v5.56M1373.00 1237.00v5.56M1381.00 1237.00v5.56M1389.00 1237.00v5.56M1397.00 1237.00v5.56M1405.00 1237.00v5.56M1413.00 1237.00v5.56M1421.00 1237.00v5.56M1429.00 1237.00v5.56M1437.00 1237.00v9.72M1447.00 1237.00v5.56M1455.00 1237.00v5.56M1463.00 1237.00v5.56M1471.00 1237.00v5.56M1479.00 1237.00v5.56M1487.00 1237.00v5.56M1495.00 1237.00v5.56M1503.00 1237.00v5.56M1511.00 1237.00v5.56M1519.00 1237.00v9.72M1527.00 1237.00v5.56M1537.00 1237.00v5.56M1545.00 1237.00v5.56M1553.00 1237.00v5.56M1561.00 1237.00v5.56M1569.00 1237.00v5.56M1577.00 1237.00v5.56M1585.00 1237.00v5.56M1593.00 1237.00v5.56M1601.00 1237.00v9.72M1609.00 1237.00v5.56M1619.00 1237.00v5.56M1627.00 1237.00v5.56M1635.00 1237.00v5.56M1643.00 1237.00v5.56M1651.00 1237.00v5.56M1659.00 1237.00v5.56M1667.00 1237.00v5.56M1675.00 1237.00v5.56M1683.00 1237.00v9.72M1691.00 1237.00v5.56M1699.00 1237.00v5.56M1709.00 1237.00v5.56M1717.00 1237.00v5.56M1725.00 1237.00v5.56M1733.00 1237.00v5.56M1741.00 1237.00v5.56M1749.00 1237.00v5.56M1757.00 1237.00v5.56M1765.00 1237.00v9.72M1773.00 1237.00v5.56M1781.00 1237.00v5.56M1791.00 1237.00v5.56M1799.00 1237.00v5.56M1807.00 1237.00v5.56M1815.00 1237.00v5.56M1823.00 1237.00v5.56M1831.00 1237.00v5.56M1839.00 1237.00v5.56M1847.00 1237.00v9.72M1855.00 1237.00v5.56M1863.00 1237.00v5.56M1871.00 1237.00v5.56M1881.00 1237.00v5.56M1889.00 1237.00v5.56M1897.00 1237.00v5.56M1905.00 1237.00v5.56M1913.00 1237.00v5.56M1921.00 1237.00v5.56M1929.00 1237.00v9.72M1937.00 1237.00v5.56M1945.00 1237.00v5.56M1953.00 1237.00v5.56M1963.00 1237.00v5.56M1971.00 1237.00v5.56M1979.00 1237.00v5.56M1987.00 1237.00v5.56M1995.00 1237.00v5.56M2003.00 1237.00v5.56M2011.00 1237.00v9.72M2019.00 1237.00v5.56M2027.00 1237.00v5.56M2035.00 1237.00v5.56M2043.00 1237.00v5.56M2053.00 1237.00v5.56M2061.00 1237.00v5.56M2069.00 1237.00v5.56M2077.00 1237.00v5.56M2085.00 1237.00v5.56M291.00 1237.00h-9.72M291.00 1149.00h-9.72M291.00 1063.00h-9.72M291.00 977.00h-9.72" stroke="#262626" stroke-width="2.1" fill="none"/>
<text x="273.00" y="1246.40" font-size="29.43" text-anchor="end" textLength="17.67" lengthAdjust="spacingAndGlyphs" fill="#222222">0</text>
<text x="273.00" y="1158.40" font-size="29.43" text-anchor="end" textLength="17.67" lengthAdjust="spacingAndGlyphs" fill="#222222">1</text>
<text x="273.00" y="1072.40" font-size="29.43" text-anchor="end" textLength="17.67" lengthAdjust="spacingAndGlyphs" fill="#222222">2</text>
<text x="273.00" y="986.40" font-size="29.43" text-anchor="end" textLength="17.67" lengthAdjust="spacingAndGlyphs" fill="#222222">3</text>
<text x="373.00" y="1276.00" font-size="29.43" text-anchor="middle" textLength="17.67" lengthAdjust="spacingAndGlyphs" fill="#222222">0</text>
<text x="455.00" y="1276.00" font-size="29.43" text-anchor="middle" textLength="35.35" lengthAdjust="spacingAndGlyphs" fill="#222222">50</text>
<text x="537.00" y="1276.00" font-size="29.43" text-anchor="middle" textLength="53.02" lengthAdjust="spacingAndGlyphs" fill="#222222">100</text>
<text x="619.00" y="1276.00" font-size="29.43" text-anchor="middle" textLength="53.02" lengthAdjust="spacingAndGlyphs" fill="#222222">150</text>
<text x="701.00" y="1276.00" font-size="29.43" text-anchor="middle" textLength="53.02" lengthAdjust="spacingAndGlyphs" fill="#222222">200</text>
<text x="783.00" y="1276.00" font-size="29.43" text-anchor="middle" textLength="53.02" lengthAdjust="spacingAndGlyphs" fill="#222222">250</text>
<text x="865.00" y="1276.00" font-size="29.43" text-anchor="middle" textLength="53.02" lengthAdjust="spacingAndGlyphs" fill="#222222">300</text>
<text x="947.00" y="1276.00" font-size="29.43" text-anchor="middle" textLength="53.02" lengthAdjust="spacingAndGlyphs" fill="#222222">350</text>
<text x="1029.00" y="1276.00" font-size="29.43" text-anchor="middle" textLength="53.02" lengthAdjust="spacingAndGlyphs" fill="#222222">400</text>
<text x="1111.00" y="1276.00" font-size="29.43" text-anchor="middle" textLength="53.02" lengthAdjust="spacingAndGlyphs" fill="#222222">450</text>
<text x="1193.00" y="1276.00" font-size="29.43" text-anchor="middle" textLength="53.02" lengthAdjust="spacingAndGlyphs" fill="#222222">500</text>
<text x="1275.00" y="1276.00" font-size="29.43" text-anchor="middle" textLength="53.02" lengthAdjust="spacingAndGlyphs" fill="#222222">550</text>
<text x="1357.00" y="1276.00" font-size="29.43" text-anchor="middle" textLength="53.02" lengthAdjust="spacingAndGlyphs" fill="#222222">600</text>
<text x="1437.00" y="1276.00" font-size="29.43" text-anchor="middle" textLength="53.02" lengthAdjust="spacingAndGlyphs" fill="#222222">650</text>
<text x="1519.00" y="1276.00" font-size="29.43" text-anchor="middle" textLength="53.02" lengthAdjust="spacingAndGlyphs" fill="#222222">700</text>
<text x="1601.00" y="1276.00" font-size="29.43" text-anchor="middle" textLength="53.02" lengthAdjust="spacingAndGlyphs" fill="#222222">750</text>
<text x="1683.00" y="1276.00" font-size="29.43" text-anchor="middle" textLength="53.02" lengthAdjust="spacingAndGlyphs" fill="#222222">800</text>
<text x="1765.00" y="1276.00" font-size="29.43" text-anchor="middle" textLength="53.02" lengthAdjust="spacingAndGlyphs" fill="#222222">850</text>
<text x="1847.00" y="1276.00" font-size="29.43" text-anchor="middle" textLength="53.02" lengthAdjust="spacingAndGlyphs" fill="#222222">900</text>
<text x="1929.00" y="1276.00" font-size="29.43" text-anchor="middle" textLength="53.02" lengthAdjust="spacingAndGlyphs" fill="#222222">950</text>
<text x="2011.00" y="1276.00" font-size="29.43" text-anchor="middle" textLength="70.69" lengthAdjust="spacingAndGlyphs" fill="#222222">1000</text>
<text x="1191.75" y="1316.50" font-size="29.43" text-anchor="middle" textLength="131.48" lengthAdjust="spacingAndGlyphs" fill="#222222">Time (μs)</text>
<text x="234.50" y="378.80" font-size="29.43" text-anchor="middle" textLength="155.86" lengthAdjust="spacingAndGlyphs" fill="#222222" transform="rotate(-90 234.50 378.80)">Voltage (V)</text>
<text x="192.00" y="732.50" font-size="29.43" text-anchor="middle" textLength="132.15" lengthAdjust="spacingAndGlyphs" fill="#222222" transform="rotate(-90 192.00 732.50)">Vsens (V)</text>
<text x="234.50" y="1086.80" font-size="29.43" text-anchor="middle" textLength="155.86" lengthAdjust="spacingAndGlyphs" fill="#222222" transform="rotate(-90 234.50 1086.80)">Voltage (V)</text>
<text x="1191.75" y="207.50" font-size="35.32" text-anchor="middle" textLength="926.17" lengthAdjust="spacingAndGlyphs" fill="#222222">off=320, w=2, retry=15: captures/sweep_ofs320_try15</text>
<rect x="305.50" y="423.50" width="283.00" height="90.50" rx="5.5" ry="5.5" fill="#fff" fill-opacity="0.8" stroke="#cccccc" stroke-opacity="0.85" stroke-width="2.2"/><line x1="314.50" y1="443.80" x2="372.00" y2="443.80" stroke="#3b75af" stroke-width="4.17"/><text x="394.00" y="456.00" font-size="29.43" text-anchor="start" textLength="103.80" lengthAdjust="spacingAndGlyphs" fill="#222222">RST (C)</text><line x1="314.50" y1="485.90" x2="372.00" y2="485.90" stroke="#ef8636" stroke-width="4.17"/><text x="394.00" y="496.00" font-size="29.43" text-anchor="start" textLength="183.15" lengthAdjust="spacingAndGlyphs" fill="#222222">OTP_VDD (D)</text>
<rect x="1818.70" y="593.70" width="260.70" height="48.10" rx="5.5" ry="5.5" fill="#fff" fill-opacity="0.8" stroke="#cccccc" stroke-opacity="0.85" stroke-width="2.2"/><line x1="1828.00" y1="616.00" x2="1885.60" y2="616.00" stroke="#3b75af" stroke-width="4.17"/><text x="1904.50" y="626.00" font-size="29.43" text-anchor="start" textLength="161.23" lengthAdjust="spacingAndGlyphs" fill="#222222">Vsens (B-A)</text>
<rect x="1824.20" y="947.10" width="253.30" height="91.10" rx="5.5" ry="5.5" fill="#fff" fill-opacity="0.8" stroke="#cccccc" stroke-opacity="0.85" stroke-width="2.2"/><line x1="1832.00" y1="970.00" x2="1892.00" y2="970.00" stroke="#3b75af" stroke-width="4.17"/><text x="1910.50" y="980.00" font-size="29.43" text-anchor="start" textLength="142.17" lengthAdjust="spacingAndGlyphs" fill="#222222">Vsens- (A)</text><line x1="1832.00" y1="1011.70" x2="1892.00" y2="1011.70" stroke="#ef8636" stroke-width="4.17"/><text x="1910.50" y="1022.00" font-size="29.43" text-anchor="start" textLength="155.48" lengthAdjust="spacingAndGlyphs" fill="#222222">Vsens+ (B)</text>
</svg></body></html>
